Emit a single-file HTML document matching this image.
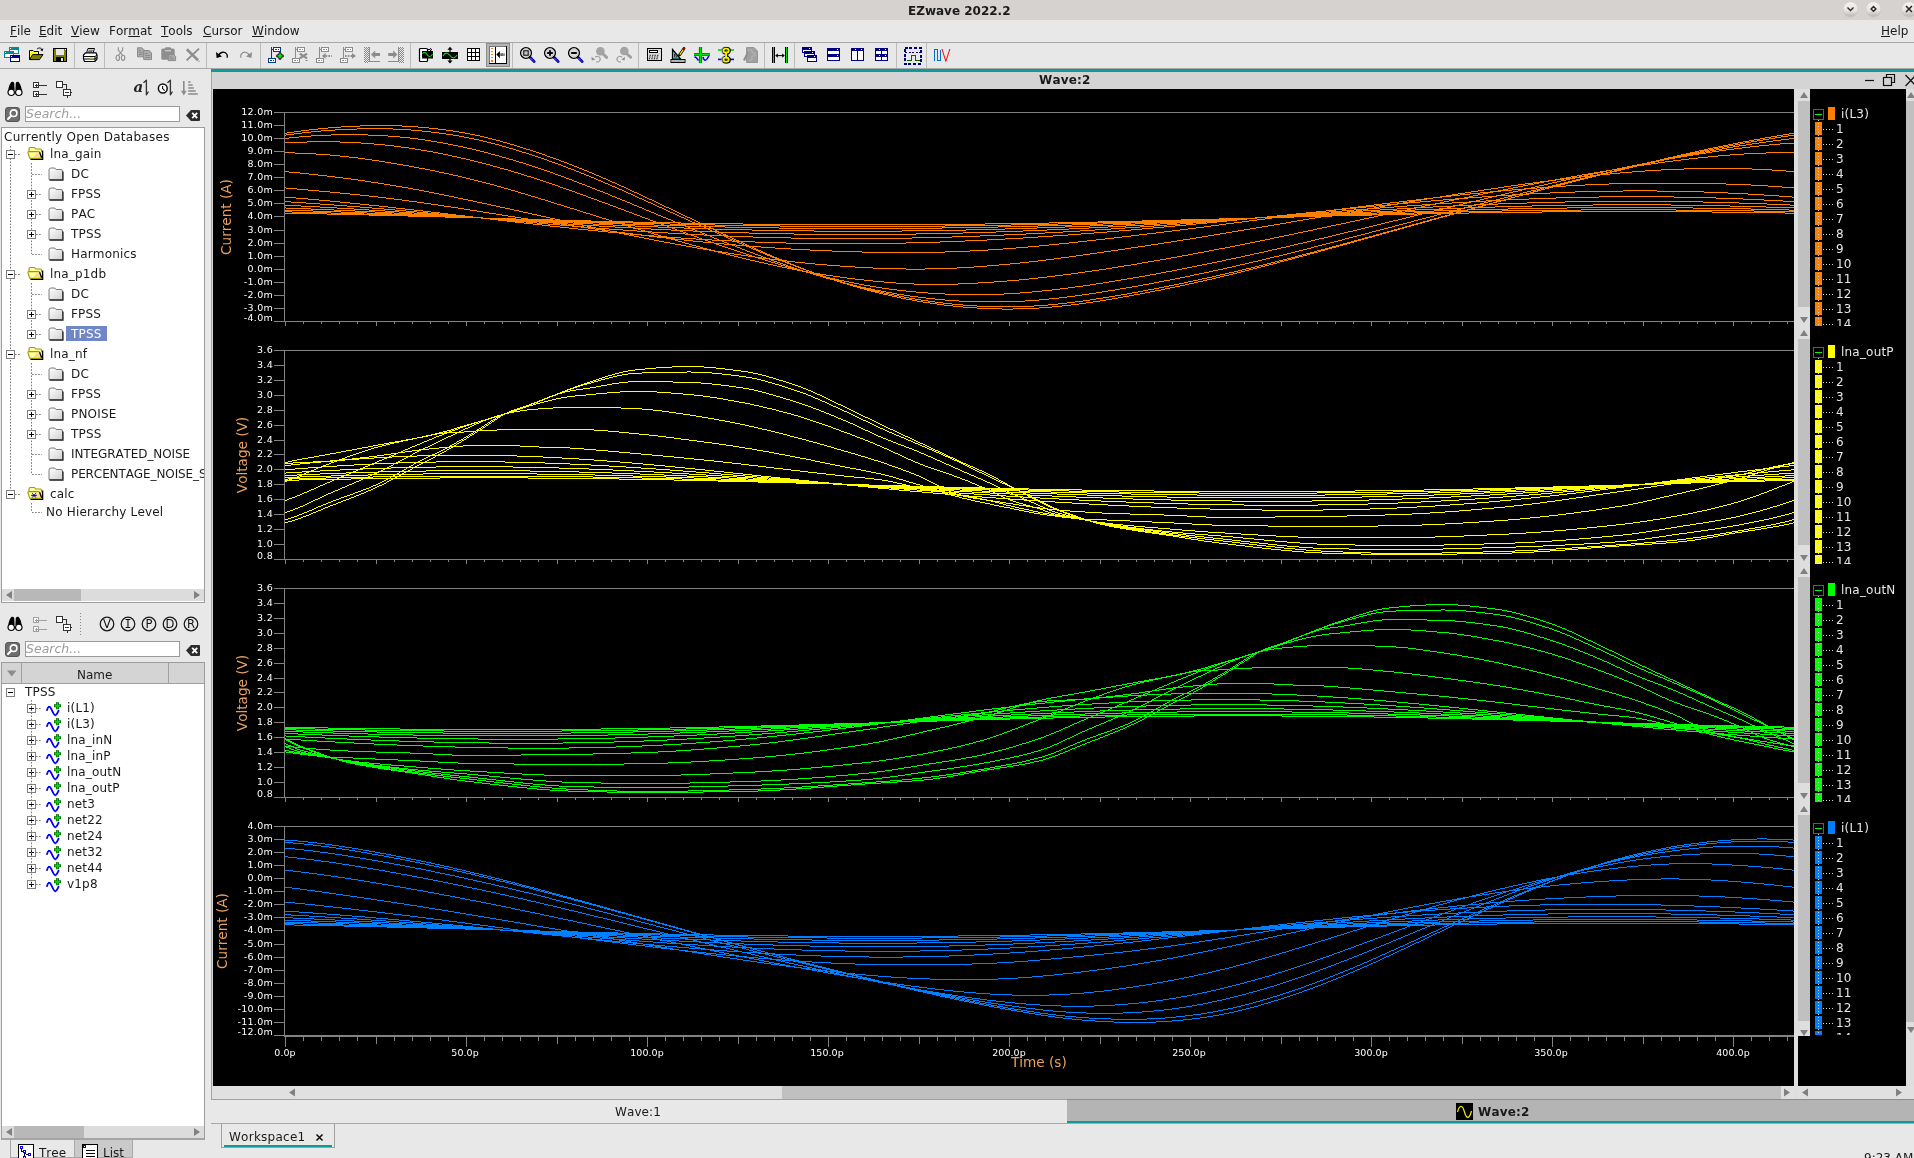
<!DOCTYPE html><html><head><meta charset="utf-8"><title>EZwave 2022.2</title><style>
*{box-sizing:border-box;margin:0;padding:0}
html,body{width:1914px;height:1158px;overflow:hidden;background:#e8e8e8}
body{position:relative;font-family:"DejaVu Sans","Liberation Sans",sans-serif;font-size:12px;color:#1a1a1a;letter-spacing:.18px;font-kerning:none}
.a{position:absolute}
.t{position:absolute;white-space:nowrap;line-height:16px;height:16px}
u{text-decoration:underline;text-underline-offset:1px;text-decoration-thickness:1px}
.sep{position:absolute;width:1px;background:#bcbcbc;top:43px;height:25px}
.ic{position:absolute;width:16px;height:16px;overflow:visible}
svg{position:absolute;overflow:visible}
.tl{position:absolute;white-space:nowrap;font-size:9.5px;line-height:10px;height:10px;color:#fff;letter-spacing:.28px}
.lg{position:absolute;white-space:nowrap;color:#e6e6e6;line-height:15px;height:15px;letter-spacing:.2px}
</style></head><body><div id="root" style="position:absolute;left:0;top:0;width:1914px;height:1158px;overflow:hidden;will-change:transform">
<div class="a" style="left:0;top:0;width:1914px;height:20px;background:#d6d2d0"></div>
<div class="t" style="left:908px;top:3px;font-weight:bold;letter-spacing:0">EZwave 2022.2</div>
<svg class="a" style="left:1830px;top:0" width="84" height="20"><defs><linearGradient id="wb" x1="0" y1="0" x2="0" y2="1"><stop offset="0" stop-color="#f6f4f3"/><stop offset=".6" stop-color="#e6e3e1"/><stop offset="1" stop-color="#bdb8b5"/></linearGradient></defs><circle cx="20.5" cy="10.2" r="7.3" fill="#b9b4b1" opacity=".55"/><circle cx="20.5" cy="9.3" r="7" fill="url(#wb)"/><path d="M17.5 7.6 L20.5 10.6 L23.5 7.6" fill="none" stroke="#2a2a2a" stroke-width="1.4"/><circle cx="43.5" cy="10.2" r="7.3" fill="#b9b4b1" opacity=".55"/><circle cx="43.5" cy="9.3" r="7" fill="url(#wb)"/><path d="M43.5 6.5 L45.9 8.9 L43.5 11.3 L41.1 8.9 Z" fill="none" stroke="#2a2a2a" stroke-width="1.4"/><circle cx="79" cy="10.2" r="7.3" fill="#b9b4b1" opacity=".55"/><circle cx="79" cy="9.3" r="7" fill="url(#wb)"/><path d="M76 6 L82 12 M82 6 L76 12" fill="none" stroke="#2a2a2a" stroke-width="1.6"/></svg>
<div class="t" style="left:10px;top:23px;letter-spacing:0"><u>F</u>ile</div>
<div class="t" style="left:39px;top:23px;letter-spacing:0"><u>E</u>dit</div>
<div class="t" style="left:71px;top:23px;letter-spacing:0"><u>V</u>iew</div>
<div class="t" style="left:109px;top:23px;letter-spacing:0">For<u>m</u>at</div>
<div class="t" style="left:161px;top:23px;letter-spacing:0"><u>T</u>ools</div>
<div class="t" style="left:203px;top:23px;letter-spacing:0"><u>C</u>ursor</div>
<div class="t" style="left:252px;top:23px;letter-spacing:0"><u>W</u>indow</div>
<div class="t" style="left:1881px;top:23px;letter-spacing:0"><u>H</u>elp</div>
<div class="a" style="left:0;top:42px;width:1914px;height:1px;background:#a8a8a8"></div>
<div class="a" style="left:0;top:68px;width:1914px;height:1px;background:#a8a8a8"></div>
<div class="sep" style="left:74px"></div><div class="sep" style="left:104px"></div><div class="sep" style="left:206px"></div><div class="sep" style="left:260px"></div><div class="sep" style="left:410px"></div><div class="sep" style="left:512px"></div><div class="sep" style="left:638px"></div><div class="sep" style="left:764px"></div><div class="sep" style="left:794px"></div><div class="sep" style="left:896px"></div><div class="sep" style="left:926px"></div><div class="a" style="left:486px;top:43px;width:24px;height:24px;background:#b4b4b4;border:1px solid #8c8c8c"></div><svg class="a" style="left:4px;top:47px" width="16" height="16" viewBox="0 0 16 16" ><g shape-rendering="crispEdges"><rect x="5" y="0" width="10" height="7" fill="#008c8c"/><rect x="6" y="3" width="8" height="3" fill="#fff"/><rect x="6" y="1" width="1" height="1" fill="#fff"/><rect x="0" y="4" width="10" height="7" fill="#008c8c"/><rect x="1" y="7" width="8" height="3" fill="#fff"/><rect x="1" y="5" width="1" height="1" fill="#fff"/><rect x="6" y="8" width="10" height="7" fill="#000090"/><rect x="7" y="11" width="8" height="3" fill="#fff"/><rect x="7" y="9" width="1" height="1" fill="#fff"/></g></svg><svg class="a" style="left:28px;top:47px" width="16" height="16" viewBox="0 0 16 16" ><defs><pattern id="fh" width="2" height="2" patternUnits="userSpaceOnUse"><rect width="2" height="2" fill="#ffff00"/><rect width="1" height="1" fill="#fff"/><rect x="1" y="1" width="1" height="1" fill="#fff"/></pattern></defs><path d="M1.5 12.5 V3.5 H5 L6 4.5 H10.5 V7" fill="url(#fh)" stroke="#000" stroke-width="1"/><path d="M1.5 12.6 L4.6 7.6 H15 L11.5 12.6 Z" fill="#808000" stroke="#000" stroke-width="1"/><path d="M9 2.2 C10.5 .4 13 .6 14.2 2.8" fill="none" stroke="#000" stroke-width="1"/><path d="M15.3 1.2 L14.6 4.2 L12.2 2.9 Z" fill="#000"/></svg><svg class="a" style="left:52px;top:47px" width="16" height="16" viewBox="0 0 16 16" ><g shape-rendering="crispEdges"><rect x="1.5" y="1.5" width="13" height="13" fill="#808000" stroke="#000"/><rect x="4" y="2" width="8" height="6" fill="#e8e8e8"/><rect x="4" y="10" width="8" height="5" fill="#000"/><rect x="9" y="11" width="2" height="3" fill="#e8e8e8"/><rect x="13" y="2" width="1" height="1" fill="#e8e8e8"/></g></svg><svg class="a" style="left:82px;top:47px" width="16" height="16" viewBox="0 0 16 16" ><path d="M4.5 6 L6 1.5 H12.5 L11 6" fill="#fff" stroke="#000"/><path d="M6.5 3.2 H11 M6 4.7 H10.5" stroke="#000" stroke-width=".7"/><path d="M1.5 8 L3.5 5.8 H14 L15 8 V12 L13 14.5 H2.5 L1.5 12 Z" fill="#fff" stroke="#000" stroke-width="1.2"/><path d="M1.5 9.5 H13 L15 8 M2 12 H13 L15 10.5 M13 9.5 V14" fill="none" stroke="#000" stroke-width="1"/><rect x="8" y="10.3" width="3" height="1.2" fill="#e8e800"/></svg><svg class="a" style="left:112px;top:47px" width="16" height="16" viewBox="0 0 16 16" ><g fill="none" stroke="#909090" stroke-width="1.1"><path d="M6.3 .3 V3 L10.6 8.3 M10.7 .3 V3 L6.4 8.3"/><ellipse cx="5.8" cy="10.9" rx="1.7" ry="2.6"/><ellipse cx="11.1" cy="10.8" rx="1.7" ry="2.6"/></g></svg><svg class="a" style="left:136px;top:47px" width="16" height="16" viewBox="0 0 16 16" ><g fill="#ababab" stroke="#8a8a8a" stroke-width="1"><path d="M1.5 .8 H6 L8 2.8 V9.8 H1.5 Z"/><path d="M7.7 3.5 H13.2 L15.5 5.8 V12.6 H7.7 Z"/></g><path d="M3 3.5 H5 M3 5.5 H6.5 M3 7.5 H6.5 M9.3 6.5 H11.5 M9.3 8.5 H14 M9.3 10.5 H14" stroke="#8a8a8a" stroke-width="1"/></svg><svg class="a" style="left:160px;top:47px" width="16" height="16" viewBox="0 0 16 16" ><rect x="1.3" y="1.6" width="13.4" height="11.2" rx="1.5" fill="#8e8e8e"/><rect x="5" y=".2" width="6" height="3.4" rx="1.2" fill="#8e8e8e"/><rect x="5" y="3.3" width="6" height="1" fill="#e0e0e0"/><path d="M8.3 7.5 H13.6 L15.6 9.3 V13.6 H8.3 Z" fill="#ababab" stroke="#8a8a8a" stroke-width="1"/><path d="M9.8 9.8 H12 M9.8 11.7 H14" stroke="#8a8a8a" stroke-width="1"/></svg><svg class="a" style="left:184px;top:47px" width="16" height="16" viewBox="0 0 16 16" ><path d="M2.8 2.2 L14 13.2" stroke="#8e8e8e" stroke-width="2.6" fill="none"/><path d="M15 1.6 L2.6 13.4" stroke="#8e8e8e" stroke-width="2" fill="none"/><rect x="14.3" y="13.8" width="1.4" height="1" fill="#8e8e8e"/></svg><svg class="a" style="left:214px;top:47px" width="16" height="16" viewBox="0 0 16 16" ><path d="M4.5 9 C6 4.5 11 4 13 7.5 C13.6 9 13.3 10 13 10.8" fill="none" stroke="#000" stroke-width="1.3"/><path d="M2 5 L2.6 11 L8 9.6 Z" fill="#000"/></svg><svg class="a" style="left:238px;top:47px" width="16" height="16" viewBox="0 0 16 16" ><path d="M11.5 9 C10 4.5 5 4 3 7.5 C2.4 9 2.7 10 3 10.8" fill="none" stroke="#8c8c8c" stroke-width="1.2"/><path d="M14 5 L13.4 11 L8 9.6 Z" fill="#8c8c8c"/></svg><svg class="a" style="left:268px;top:47px" width="16" height="16" viewBox="0 0 16 16" ><g shape-rendering="crispEdges" fill="none" stroke="#003c96"><path d="M3.5 0 V11 M3.5 2.5 H6"/><rect x="5.5" y="0.5" width="7" height="4" fill="#fff"/><rect x="0.5" y="11.5" width="7" height="4" fill="#fff"/><path d="M7 2.5 H11 M2 13.5 H6" stroke-width="1.4" stroke-dasharray="1.5 1"/></g><path d="M12 6.6 V11.2 M9.7 8.9 H14.3" stroke="#111" stroke-width="3.2" stroke-linecap="round"/><path d="M12 6.5 V11.3 M9.6 8.9 H14.4" stroke="#00e000" stroke-width="1.9" stroke-linecap="butt"/></svg><svg class="a" style="left:292px;top:47px" width="16" height="16" viewBox="0 0 16 16" ><g shape-rendering="crispEdges" fill="none" stroke="#8c8c8c"><path d="M3.5 0 V11 M3.5 2.5 H6"/><rect x="5.5" y="0.5" width="7" height="4" fill="#fff"/><rect x="0.5" y="11.5" width="7" height="4" fill="#fff"/><path d="M7 2.5 H11 M2 13.5 H6" stroke-width="1.4" stroke-dasharray="1.5 1"/></g><path d="M7.8 6.6 L15 11.4 M15 6.6 L7.8 11.4" stroke="#8c8c8c" stroke-width="2.3"/><rect x="13.6" y="13" width="2" height="1" fill="#8c8c8c"/></svg><svg class="a" style="left:316px;top:47px" width="16" height="16" viewBox="0 0 16 16" ><g shape-rendering="crispEdges" fill="none" stroke="#8c8c8c"><path d="M3.5 0 V11 M3.5 2.5 H6"/><rect x="5.5" y="0.5" width="7" height="4" fill="#fff"/><rect x="0.5" y="11.5" width="7" height="4" fill="#fff"/><path d="M7 2.5 H11 M2 13.5 H6" stroke-width="1.4" stroke-dasharray="1.5 1"/></g><path d="M5.8 8.9 L9.6 6 V11.8 Z" fill="#8c8c8c"/><path d="M9.6 8.9 H16" stroke="#8c8c8c" stroke-width="2" stroke-dasharray="1.6 1.2"/></svg><svg class="a" style="left:340px;top:47px" width="16" height="16" viewBox="0 0 16 16" ><g shape-rendering="crispEdges" fill="none" stroke="#8c8c8c"><path d="M3.5 0 V11 M3.5 2.5 H6"/><rect x="5.5" y="0.5" width="7" height="4" fill="#fff"/><rect x="0.5" y="11.5" width="7" height="4" fill="#fff"/><path d="M7 2.5 H11 M2 13.5 H6" stroke-width="1.4" stroke-dasharray="1.5 1"/></g><path d="M16 8.9 L12 6 V11.8 Z" fill="#8c8c8c"/><path d="M5 8.9 H12" stroke="#8c8c8c" stroke-width="2" stroke-dasharray="1.6 1.2"/></svg><svg class="a" style="left:364px;top:47px" width="16" height="16" viewBox="0 0 16 16" ><defs><pattern id="hp" width="2" height="2" patternUnits="userSpaceOnUse"><rect width="1" height="1" fill="#8c8c8c"/><rect x="1" y="1" width="1" height="1" fill="#8c8c8c"/></pattern></defs><g shape-rendering="crispEdges"><rect x="0" y="0" width="5" height="16" fill="url(#hp)"/><path d="M5.5 0 V14.5 H16" fill="none" stroke="#8c8c8c"/></g><path d="M7 7.6 L11.2 3.6 V6.1 H16 V9.1 H11.2 V11.6 Z" fill="#8c8c8c"/></svg><svg class="a" style="left:388px;top:47px" width="16" height="16" viewBox="0 0 16 16" ><g shape-rendering="crispEdges"><rect x="11" y="0" width="5" height="16" fill="url(#hp)"/><path d="M10.5 0 V14.5 H0" fill="none" stroke="#8c8c8c"/></g><path d="M9.4 7.6 L5.2 3.6 V6.1 H0.2 V9.1 H5.2 V11.6 Z" fill="#8c8c8c"/></svg><svg class="a" style="left:418px;top:47px" width="16" height="16" viewBox="0 0 16 16" ><rect x="1.5" y="1.5" width="8" height="13" rx="1" fill="#fff" stroke="#000" stroke-width="1.2"/><rect x="4" y="4" width="11" height="7.5" fill="#000"/><path d="M4.5 7 C6 4.5 7.5 5 9 7.5 S12.5 10.5 14.5 7" fill="none" stroke="#00e000" stroke-width="1.1"/><path d="M9 2.5 H12 M12 1.3 L13.8 2.6 L12 4" fill="none" stroke="#000" stroke-width="1"/></svg><svg class="a" style="left:442px;top:47px" width="16" height="16" viewBox="0 0 16 16" ><rect x="0" y="5" width="16" height="7" fill="#000"/><path d="M1 9 C3 5 5.5 5.5 8 8.5 S12.5 12 15 8" fill="none" stroke="#00e000" stroke-width="1.1"/><path d="M8 -.2 L10.6 2.8 H5.4 Z M8 16.4 L10.6 13.4 H5.4 Z" fill="#000"/><path d="M8 2 V5 M8 12 V14" stroke="#000" stroke-width="1.2"/></svg><svg class="a" style="left:466px;top:47px" width="16" height="16" viewBox="0 0 16 16" ><g shape-rendering="crispEdges" transform="translate(-1,-1)"><rect x="2" y="2" width="13" height="13" fill="#000"/><g fill="#fff"><rect x="3" y="3" width="3" height="3"/><rect x="7" y="3" width="3" height="3"/><rect x="11" y="3" width="3" height="3"/><rect x="3" y="7" width="3" height="3"/><rect x="7" y="7" width="3" height="3"/><rect x="11" y="7" width="3" height="3"/><rect x="3" y="11" width="3" height="3"/><rect x="7" y="11" width="3" height="3"/><rect x="11" y="11" width="3" height="3"/></g></g></svg><svg class="a" style="left:490px;top:47px" width="16" height="16" viewBox="0 0 16 16" ><g shape-rendering="crispEdges"><rect x="-1" y="-1" width="18" height="18" fill="#fff"/><path d="M-.5 17 V-.5 H17" stroke="#787878" fill="none"/><path d="M16.5 -1 V16.5 H-1" stroke="#000" fill="none"/><path d="M5.5 0 V16" stroke="#000" fill="none"/><path d="M2 .5 V16" stroke="#ff7a20" stroke-width="2" stroke-dasharray="1.6 1.5"/></g><path d="M6.3 7.6 L9.9 4 V11.2 Z" fill="#000"/><path d="M10.6 7.6 H14.6" stroke="#000" stroke-width="2.6" stroke-dasharray="1 .8"/></svg><svg class="a" style="left:519px;top:47px" width="16" height="16" viewBox="0 0 16 16" ><path d="M11 10.2 L15.2 14.6" stroke="#0000c0" stroke-width="2.8" stroke-linecap="round"/><path d="M11.3 10.9 L14.6 14.3" stroke="#aab4ff" stroke-width=".9" stroke-dasharray="1 1"/><circle cx="7" cy="6" r="5.4" fill="#dcdcdc" stroke="#000" stroke-width="1.4"/><circle cx="7" cy="6" r="4.2" fill="none" stroke="#bcbcbc" stroke-width=".8"/><g transform="translate(1,0)"><rect x="3.8" y="3.8" width="4.4" height="4.4" fill="#c8c8c8" stroke="#000" stroke-width="1"/></g></svg><svg class="a" style="left:543px;top:47px" width="16" height="16" viewBox="0 0 16 16" ><path d="M11 10.2 L15.2 14.6" stroke="#0000c0" stroke-width="2.8" stroke-linecap="round"/><path d="M11.3 10.9 L14.6 14.3" stroke="#aab4ff" stroke-width=".9" stroke-dasharray="1 1"/><circle cx="7" cy="6" r="5.4" fill="#dcdcdc" stroke="#000" stroke-width="1.4"/><circle cx="7" cy="6" r="4.2" fill="none" stroke="#bcbcbc" stroke-width=".8"/><g transform="translate(1,0)"><path d="M3.2 6 H8.8 M6 3.2 V8.8" stroke="#000" stroke-width="1.9"/></g></svg><svg class="a" style="left:567px;top:47px" width="16" height="16" viewBox="0 0 16 16" ><path d="M11 10.2 L15.2 14.6" stroke="#0000c0" stroke-width="2.8" stroke-linecap="round"/><path d="M11.3 10.9 L14.6 14.3" stroke="#aab4ff" stroke-width=".9" stroke-dasharray="1 1"/><circle cx="7" cy="6" r="5.4" fill="#dcdcdc" stroke="#000" stroke-width="1.4"/><circle cx="7" cy="6" r="4.2" fill="none" stroke="#bcbcbc" stroke-width=".8"/><g transform="translate(1,0)"><path d="M3.2 6 H8.8" stroke="#000" stroke-width="2"/></g></svg><svg class="a" style="left:591px;top:47px" width="16" height="16" viewBox="0 0 16 16" ><circle cx="9.4" cy="4.2" r="4.3" fill="#a4a4a4"/><path d="M12 7 L15.6 10.4" stroke="#a0a0a0" stroke-width="3" stroke-linecap="round"/><path d="M4.2 10.4 A2.8 2.8 0 1 1 5.2 14.7" fill="none" stroke="#9a9a9a" stroke-width="1.1"/><path d="M.4 9.8 L.8 13.6 L4.4 12.6 Z" fill="#909090"/></svg><svg class="a" style="left:615px;top:47px" width="16" height="16" viewBox="0 0 16 16" ><circle cx="9.3" cy="4" r="4.3" fill="#a4a4a4"/><path d="M12 7 L15.6 10.2" stroke="#a0a0a0" stroke-width="3" stroke-linecap="round"/><path d="M7 10.4 A2.8 2.8 0 1 0 6 14.7" fill="none" stroke="#9a9a9a" stroke-width="1.1"/><path d="M10 9.8 L9.6 13.6 L6.4 12.6 Z" fill="#909090"/></svg><svg class="a" style="left:646px;top:47px" width="16" height="16" viewBox="0 0 16 16" ><g shape-rendering="crispEdges"><rect x="1.5" y="1.5" width="14" height="12" fill="#dcdcdc" stroke="#000" stroke-width="1.4"/><rect x="3.5" y="3.5" width="8" height="2" fill="#fff" stroke="#000"/></g><path d="M3.6 8.2 H13.6 M3.2 10 H13.2 M2.8 11.8 H12.8" stroke="#000" stroke-width="1.1" stroke-dasharray="1.2 1.3"/></svg><svg class="a" style="left:670px;top:47px" width="16" height="16" viewBox="0 0 16 16" ><path d="M2.5 12 V2.5 L10.5 12 Z" fill="#20e0e0" stroke="#000" stroke-width="1.2"/><path d="M4.5 10 V7 L7 10 Z" fill="#e8e8e8" stroke="#000" stroke-width=".7"/><rect x="1" y="12.5" width="14" height="3" fill="#fff" stroke="#000" stroke-width="1"/><path d="M3 13 V15 M5 13 V15 M7 13 V15 M9 13 V15 M11 13 V15 M13 13 V15" stroke="#000" stroke-width=".6"/><path d="M9.5 8 L14 1.5" stroke="#000" stroke-width="2.8" stroke-linecap="round"/><path d="M9.8 7.6 L13.2 2.7" stroke="#f0d000" stroke-width="1.4"/><circle cx="14" cy="1.7" r="1" fill="#c00000"/></svg><svg class="a" style="left:694px;top:47px" width="16" height="16" viewBox="0 0 16 16" ><path d="M0.5 10.5 C2 9 3 12 4.5 13.5 M9 10 C10 14 12 15 15 8.5" fill="none" stroke="#0000ff" stroke-width="1.6"/><path d="M6.5 0 V16 M0 7.5 H16" stroke="#005000" stroke-width="3.2"/><path d="M6.5 0 V16 M0 7.5 H16" stroke="#00e000" stroke-width="1.8"/></svg><svg class="a" style="left:718px;top:47px" width="16" height="16" viewBox="0 0 16 16" ><path d="M0 3 H16" stroke="#00d000" stroke-width="1.6"/><path d="M0 12.4 H16" stroke="#0000ff" stroke-width="1.6"/><g fill="none" stroke="#909090" stroke-width="3.6" transform="translate(-.5,0)"><rect x="5.6" y="1.6" width="5" height="4" rx="1.8"/><rect x="5.6" y="10.6" width="5" height="4" rx="1.8"/></g><g fill="none" stroke="#000" stroke-width="3.4" transform="translate(.5,.2)"><rect x="5.6" y="1.6" width="5" height="4" rx="1.8"/><rect x="5.6" y="10.6" width="5" height="4" rx="1.8"/><path d="M8.1 5 V11"/></g><g fill="none" stroke="#f4f400" stroke-width="1.9"><rect x="5.6" y="1.6" width="5" height="4" rx="1.8"/><rect x="5.6" y="10.6" width="5" height="4" rx="1.8"/><path d="M8.1 4.6 V11.4"/></g></svg><svg class="a" style="left:742px;top:47px" width="16" height="16" viewBox="0 0 16 16" ><path d="M4.5 .5 H12 L15.5 4 V15.5 H4.5 Z" fill="#a0a0a0" stroke="#8c8c8c" stroke-width=".8"/><path d="M6 3 H10 V6 H13 V9 H10 V13 H7" fill="none" stroke="#b8b8b8" stroke-width=".9"/><path d="M1 13 L5 5 L6.5 6 L3 14 Z" fill="#909090"/></svg><svg class="a" style="left:772px;top:47px" width="16" height="16" viewBox="0 0 16 16" ><g shape-rendering="crispEdges"><rect x="0" y="0" width="3" height="16" fill="#000"/><rect x="1" y="0" width="1" height="16" fill="#00e000"/><rect x="13" y="0" width="3" height="16" fill="#000"/><rect x="14" y="0" width="1" height="16" fill="#00e000"/></g><path d="M4 8.6 H12" stroke="#000" stroke-width="1"/><path d="M3.2 8.6 L5.8 6.4 V10.8 Z M12.8 8.6 L10.2 6.4 V10.8 Z" fill="#000"/></svg><svg class="a" style="left:801px;top:47px" width="16" height="16" viewBox="0 0 16 16" ><g shape-rendering="crispEdges"><rect x="1.5" y="0.5" width="9" height="5" fill="#fff" stroke="#000080"/><rect x="1" y="0" width="10" height="3" fill="#000080"/><rect x="8" y="1" width="1" height="1" fill="#fff"/><rect x="3.5" y="4.5" width="10" height="5" fill="#fff" stroke="#000080"/><rect x="3" y="4" width="11" height="3" fill="#000080"/><rect x="11" y="5" width="1" height="1" fill="#fff"/><rect x="6.5" y="8.5" width="9" height="6" fill="#fff" stroke="#000080"/><rect x="6" y="8" width="10" height="3" fill="#000080"/><rect x="13" y="9" width="1" height="1" fill="#fff"/></g></svg><svg class="a" style="left:825px;top:47px" width="16" height="16" viewBox="0 0 16 16" ><g shape-rendering="crispEdges"><rect x="2.5" y="1.5" width="12" height="6" fill="#fff" stroke="#000080"/><rect x="2" y="1" width="13" height="3" fill="#000080"/><rect x="12" y="2" width="1" height="1" fill="#fff"/><rect x="2.5" y="7.5" width="12" height="6" fill="#fff" stroke="#000080"/><rect x="2" y="7" width="13" height="3" fill="#000080"/><rect x="12" y="8" width="1" height="1" fill="#fff"/></g></svg><svg class="a" style="left:849px;top:47px" width="16" height="16" viewBox="0 0 16 16" ><g shape-rendering="crispEdges"><rect x="2.5" y="1.5" width="6" height="12" fill="#fff" stroke="#000080"/><rect x="2" y="1" width="7" height="3" fill="#000080"/><rect x="6" y="2" width="1" height="1" fill="#fff"/><rect x="8.5" y="1.5" width="6" height="12" fill="#fff" stroke="#000080"/><rect x="8" y="1" width="7" height="3" fill="#000080"/><rect x="12" y="2" width="1" height="1" fill="#fff"/></g></svg><svg class="a" style="left:873px;top:47px" width="16" height="16" viewBox="0 0 16 16" ><g shape-rendering="crispEdges"><rect x="2.5" y="1.5" width="6" height="6" fill="#fff" stroke="#000080"/><rect x="2" y="1" width="7" height="3" fill="#000080"/><rect x="6" y="2" width="1" height="1" fill="#fff"/><rect x="8.5" y="1.5" width="6" height="6" fill="#fff" stroke="#000080"/><rect x="8" y="1" width="7" height="3" fill="#000080"/><rect x="12" y="2" width="1" height="1" fill="#fff"/><rect x="2.5" y="7.5" width="6" height="6" fill="#fff" stroke="#000080"/><rect x="2" y="7" width="7" height="3" fill="#000080"/><rect x="6" y="8" width="1" height="1" fill="#fff"/><rect x="8.5" y="7.5" width="6" height="6" fill="#fff" stroke="#000080"/><rect x="8" y="7" width="7" height="3" fill="#000080"/><rect x="12" y="8" width="1" height="1" fill="#fff"/></g></svg><svg class="a" style="left:903.5px;top:46.5px" width="18" height="18" viewBox="0 0 18 18" ><g shape-rendering="crispEdges"><rect x=".75" y=".75" width="16" height="16" fill="none" stroke="#000080" stroke-width="1.5" stroke-dasharray="3 1.6"/><path d="M1 5.5 H17" stroke="#000080" stroke-width="1" stroke-dasharray="2 1.5"/><path d="M3 13.5 H7.5 V8.5 H11.5 V13.5 H16" fill="none" stroke="#006400" stroke-width="1.2"/></g></svg><svg class="a" style="left:933px;top:47px" width="16" height="16" viewBox="0 0 16 16" ><path d="M1.5 13.5 V2.5 H4.5 V13.5 H7.5 V2.5" fill="none" stroke="#0070d0" stroke-width="1.1" shape-rendering="crispEdges"/><path d="M9 2 L12.8 14.4 L16.9 2" fill="none" stroke="#ff0000" stroke-width="1"/></svg>
<svg class="a" style="left:6.5px;top:80.5px" width="16" height="16" viewBox="0 0 16 16" ><path d="M4.2 1.2 C5.4 .6 6.6 .8 7.2 2 L7.6 9 L1.2 9.5 C1.6 6 2.6 3 4.2 1.2 Z M11.8 1.2 C10.6 .6 9.4 .8 8.8 2 L8.4 9 L14.8 9.5 C14.4 6 13.4 3 11.8 1.2 Z" fill="#000"/><circle cx="4.2" cy="11.3" r="3.2" fill="#fff" stroke="#000" stroke-width="1.2"/><circle cx="11.8" cy="11.3" r="3.2" fill="#fff" stroke="#000" stroke-width="1.2"/></svg><svg class="a" style="left:31.5px;top:80.5px" width="16" height="16" viewBox="0 0 16 16" ><g shape-rendering="crispEdges" fill="none" stroke="#333"><rect x="1.5" y="1.5" width="5" height="5" fill="#fff"/><rect x="1.5" y="10.5" width="5" height="5" fill="#fff"/><path d="M3 4 H6 M4.5 2.5 V5.5 M3 13 H6 M4.5 11.5 V14.5 M7 4.5 H15 M7 13.5 H15"/></g></svg><svg class="a" style="left:56px;top:80.5px" width="16" height="16" viewBox="0 0 16 16" ><g shape-rendering="crispEdges" fill="none" stroke="#333"><rect x="0.5" y="0.5" width="6" height="6" fill="#fff"/><path d="M6.5 3.5 H10.5 V8.5"/><rect x="7.5" y="8.5" width="7" height="6" fill="#fff"/><path d="M9 11.5 H13 M14.5 11.5 H16 M11.5 14.5 V16.5"/></g></svg><div class="t" style="left:133.5px;top:77px;font-family:'DejaVu Serif','Liberation Serif',serif;font-style:italic;font-weight:bold;font-size:15px;line-height:20px;height:20px;letter-spacing:0;color:#222">a</div><svg class="a" style="left:0;top:0" width="205" height="100"><path d="M146.4 80.3 V94.6 M146.4 80.2 L143.8 82.4 M146.4 94.8 L148.2 92" fill="none" stroke="#333" stroke-width="1.3" stroke-linecap="round"/><circle cx="162.8" cy="88.5" r="4.4" fill="#fff" stroke="#111" stroke-width="1.5"/><path d="M162.6 86 V88.6 L164.6 90.6" fill="none" stroke="#111" stroke-width="1.1"/><path d="M170.4 80.3 V94.6 M170.4 80.2 L167.8 82.4 M170.4 94.8 L172.2 92" fill="none" stroke="#333" stroke-width="1.3" stroke-linecap="round"/><g stroke="#8c8c8c" fill="none"><path d="M183.8 81 V94" stroke-width="1.6"/><path d="M181 90.8 L183.8 95.6 L186.6 90.8 Z" fill="#8c8c8c" stroke="none"/><path d="M188.2 82 H190.6 M188.2 85 H192.7 M188.2 88 H193.8 M188.2 91 H195.7 M188.2 94 H197.8" stroke-width="1.5"/></g></svg><svg class="a" style="left:5px;top:107px" width="15" height="15"><rect x=".5" y=".5" width="14" height="14" rx="2.5" fill="#6e6e6e" stroke="#555" stroke-width="1"/><circle cx="8.6" cy="6.2" r="3.3" fill="none" stroke="#fff" stroke-width="1.6"/><path d="M6.2 8.8 L3 12" stroke="#fff" stroke-width="2" stroke-linecap="round"/></svg><div class="a" style="left:25px;top:106px;width:155px;height:16px;background:#fff;border:1px solid #9a9a9a"></div><div class="t" style="left:26px;top:106px;font-style:italic;font-size:12.5px;color:#9c9c9c;letter-spacing:0">Search...</div><svg class="a" style="left:186px;top:110px" width="14" height="11"><path d="M0 5.5 L5 0 H13 Q14 0 14 1 V10 Q14 11 13 11 H5 Z" fill="#2c2c2c"/><path d="M6.2 2.8 L11.2 8.2 M11.2 2.8 L6.2 8.2" stroke="#fff" stroke-width="1.8"/></svg><svg class="a" style="left:5px;top:642px" width="15" height="15"><rect x=".5" y=".5" width="14" height="14" rx="2.5" fill="#6e6e6e" stroke="#555" stroke-width="1"/><circle cx="8.6" cy="6.2" r="3.3" fill="none" stroke="#fff" stroke-width="1.6"/><path d="M6.2 8.8 L3 12" stroke="#fff" stroke-width="2" stroke-linecap="round"/></svg><div class="a" style="left:25px;top:641px;width:155px;height:16px;background:#fff;border:1px solid #9a9a9a"></div><div class="t" style="left:26px;top:641px;font-style:italic;font-size:12.5px;color:#9c9c9c;letter-spacing:0">Search...</div><svg class="a" style="left:186px;top:645px" width="14" height="11"><path d="M0 5.5 L5 0 H13 Q14 0 14 1 V10 Q14 11 13 11 H5 Z" fill="#2c2c2c"/><path d="M6.2 2.8 L11.2 8.2 M11.2 2.8 L6.2 8.2" stroke="#fff" stroke-width="1.8"/></svg><div class="a" style="left:1px;top:127px;width:204px;height:476px;background:#fff;border:1px solid #9c9c9c"></div><div class="t" style="left:4px;top:129px;letter-spacing:.27px">Currently Open Databases</div><svg class="a" style="left:0;top:0" width="205" height="1158"><g stroke="#787878" stroke-dasharray="1.6 1.5" fill="none"><path d="M10.5 146 V494"/><path d="M31.5 163 V254"/><path d="M31.5 283 V334"/><path d="M31.5 363 V474"/><path d="M31.5 503 V512"/><path d="M32 512.5 H42"/><path d="M15 154.5 H21"/><path d="M32 174.5 H42"/><path d="M36 194.5 H42"/><path d="M36 214.5 H42"/><path d="M36 234.5 H42"/><path d="M32 254.5 H42"/><path d="M15 274.5 H21"/><path d="M32 294.5 H42"/><path d="M36 314.5 H42"/><path d="M36 334.5 H42"/><path d="M15 354.5 H21"/><path d="M32 374.5 H42"/><path d="M36 394.5 H42"/><path d="M36 414.5 H42"/><path d="M36 434.5 H42"/><path d="M32 454.5 H42"/><path d="M32 474.5 H42"/><path d="M15 494.5 H21"/></g></svg><div class="a" style="left:2px;top:128px;width:202px;height:474px;overflow:hidden"><div class="a" style="left:-2px;top:-128px;width:205px;height:700px"><svg class="a" style="left:6px;top:150px" width="9" height="9" viewBox="0 0 9 9" shape-rendering="crispEdges"><rect x=".5" y=".5" width="8" height="8" fill="#fff" stroke="#808080"/><rect x="2" y="4" width="5" height="1" fill="#000"/></svg><svg class="a" style="left:27px;top:146px" width="17" height="15" viewBox="0 0 17 15"><path d="M15.6 4.5 V13.4 H3.5" fill="none" stroke="#000" stroke-width="1.4"/><path d="M2 5.5 V3 Q2 1.5 3.5 1.5 H7 Q8 1.5 8.6 3 H13.5 Q14.6 3 14.6 4.2 V6" fill="#ffffa0" stroke="#9a9a00" stroke-width="1.1"/><path d="M1 6.8 Q.8 5.6 2 5.6 H11.4 Q12.4 5.6 12.8 6.6 L14.6 11.6 V12.4 H3.6 Q2.8 12.4 2.5 11.5 Z" fill="#ffff9c" stroke="#9a9a00" stroke-width="1.1"/><path d="M6 12 L9.5 7.5 H12.2 L13.8 12 Z" fill="#ffc890" opacity=".8"/><path d="M12.6 6.2 L14.6 11.8" stroke="#000" stroke-width="1.2"/></svg><div class="t" style="left:50px;top:146px">lna_gain</div><svg class="a" style="left:48px;top:167px" width="16" height="14" viewBox="0 0 16 14"><defs><linearGradient id="fg" x1="0" y1="0" x2="1" y2="1"><stop offset="0" stop-color="#fff"/><stop offset="1" stop-color="#d0d0d0"/></linearGradient></defs><path d="M1 3 Q1 1 3 1 H6 Q7.5 1 8 2.5 H13 Q14.5 2.5 14.5 4 V12.5 H1 Z" fill="url(#fg)" stroke="#7c7c7c" stroke-width="1"/><path d="M1.5 13.2 H15 V4.5" fill="none" stroke="#1a1a1a" stroke-width="1.2"/></svg><div class="t" style="left:71px;top:166px">DC</div><svg class="a" style="left:27px;top:190px" width="9" height="9" viewBox="0 0 9 9" shape-rendering="crispEdges"><rect x=".5" y=".5" width="8" height="8" fill="#fff" stroke="#808080"/><rect x="2" y="4" width="5" height="1" fill="#000"/><rect x="4" y="2" width="1" height="5" fill="#000"/></svg><svg class="a" style="left:48px;top:187px" width="16" height="14" viewBox="0 0 16 14"><defs><linearGradient id="fg" x1="0" y1="0" x2="1" y2="1"><stop offset="0" stop-color="#fff"/><stop offset="1" stop-color="#d0d0d0"/></linearGradient></defs><path d="M1 3 Q1 1 3 1 H6 Q7.5 1 8 2.5 H13 Q14.5 2.5 14.5 4 V12.5 H1 Z" fill="url(#fg)" stroke="#7c7c7c" stroke-width="1"/><path d="M1.5 13.2 H15 V4.5" fill="none" stroke="#1a1a1a" stroke-width="1.2"/></svg><div class="t" style="left:71px;top:186px">FPSS</div><svg class="a" style="left:27px;top:210px" width="9" height="9" viewBox="0 0 9 9" shape-rendering="crispEdges"><rect x=".5" y=".5" width="8" height="8" fill="#fff" stroke="#808080"/><rect x="2" y="4" width="5" height="1" fill="#000"/><rect x="4" y="2" width="1" height="5" fill="#000"/></svg><svg class="a" style="left:48px;top:207px" width="16" height="14" viewBox="0 0 16 14"><defs><linearGradient id="fg" x1="0" y1="0" x2="1" y2="1"><stop offset="0" stop-color="#fff"/><stop offset="1" stop-color="#d0d0d0"/></linearGradient></defs><path d="M1 3 Q1 1 3 1 H6 Q7.5 1 8 2.5 H13 Q14.5 2.5 14.5 4 V12.5 H1 Z" fill="url(#fg)" stroke="#7c7c7c" stroke-width="1"/><path d="M1.5 13.2 H15 V4.5" fill="none" stroke="#1a1a1a" stroke-width="1.2"/></svg><div class="t" style="left:71px;top:206px">PAC</div><svg class="a" style="left:27px;top:230px" width="9" height="9" viewBox="0 0 9 9" shape-rendering="crispEdges"><rect x=".5" y=".5" width="8" height="8" fill="#fff" stroke="#808080"/><rect x="2" y="4" width="5" height="1" fill="#000"/><rect x="4" y="2" width="1" height="5" fill="#000"/></svg><svg class="a" style="left:48px;top:227px" width="16" height="14" viewBox="0 0 16 14"><defs><linearGradient id="fg" x1="0" y1="0" x2="1" y2="1"><stop offset="0" stop-color="#fff"/><stop offset="1" stop-color="#d0d0d0"/></linearGradient></defs><path d="M1 3 Q1 1 3 1 H6 Q7.5 1 8 2.5 H13 Q14.5 2.5 14.5 4 V12.5 H1 Z" fill="url(#fg)" stroke="#7c7c7c" stroke-width="1"/><path d="M1.5 13.2 H15 V4.5" fill="none" stroke="#1a1a1a" stroke-width="1.2"/></svg><div class="t" style="left:71px;top:226px">TPSS</div><svg class="a" style="left:48px;top:247px" width="16" height="14" viewBox="0 0 16 14"><defs><linearGradient id="fg" x1="0" y1="0" x2="1" y2="1"><stop offset="0" stop-color="#fff"/><stop offset="1" stop-color="#d0d0d0"/></linearGradient></defs><path d="M1 3 Q1 1 3 1 H6 Q7.5 1 8 2.5 H13 Q14.5 2.5 14.5 4 V12.5 H1 Z" fill="url(#fg)" stroke="#7c7c7c" stroke-width="1"/><path d="M1.5 13.2 H15 V4.5" fill="none" stroke="#1a1a1a" stroke-width="1.2"/></svg><div class="t" style="left:71px;top:246px">Harmonics</div><svg class="a" style="left:6px;top:270px" width="9" height="9" viewBox="0 0 9 9" shape-rendering="crispEdges"><rect x=".5" y=".5" width="8" height="8" fill="#fff" stroke="#808080"/><rect x="2" y="4" width="5" height="1" fill="#000"/></svg><svg class="a" style="left:27px;top:266px" width="17" height="15" viewBox="0 0 17 15"><path d="M15.6 4.5 V13.4 H3.5" fill="none" stroke="#000" stroke-width="1.4"/><path d="M2 5.5 V3 Q2 1.5 3.5 1.5 H7 Q8 1.5 8.6 3 H13.5 Q14.6 3 14.6 4.2 V6" fill="#ffffa0" stroke="#9a9a00" stroke-width="1.1"/><path d="M1 6.8 Q.8 5.6 2 5.6 H11.4 Q12.4 5.6 12.8 6.6 L14.6 11.6 V12.4 H3.6 Q2.8 12.4 2.5 11.5 Z" fill="#ffff9c" stroke="#9a9a00" stroke-width="1.1"/><path d="M6 12 L9.5 7.5 H12.2 L13.8 12 Z" fill="#ffc890" opacity=".8"/><path d="M12.6 6.2 L14.6 11.8" stroke="#000" stroke-width="1.2"/></svg><div class="t" style="left:50px;top:266px">lna_p1db</div><svg class="a" style="left:48px;top:287px" width="16" height="14" viewBox="0 0 16 14"><defs><linearGradient id="fg" x1="0" y1="0" x2="1" y2="1"><stop offset="0" stop-color="#fff"/><stop offset="1" stop-color="#d0d0d0"/></linearGradient></defs><path d="M1 3 Q1 1 3 1 H6 Q7.5 1 8 2.5 H13 Q14.5 2.5 14.5 4 V12.5 H1 Z" fill="url(#fg)" stroke="#7c7c7c" stroke-width="1"/><path d="M1.5 13.2 H15 V4.5" fill="none" stroke="#1a1a1a" stroke-width="1.2"/></svg><div class="t" style="left:71px;top:286px">DC</div><svg class="a" style="left:27px;top:310px" width="9" height="9" viewBox="0 0 9 9" shape-rendering="crispEdges"><rect x=".5" y=".5" width="8" height="8" fill="#fff" stroke="#808080"/><rect x="2" y="4" width="5" height="1" fill="#000"/><rect x="4" y="2" width="1" height="5" fill="#000"/></svg><svg class="a" style="left:48px;top:307px" width="16" height="14" viewBox="0 0 16 14"><defs><linearGradient id="fg" x1="0" y1="0" x2="1" y2="1"><stop offset="0" stop-color="#fff"/><stop offset="1" stop-color="#d0d0d0"/></linearGradient></defs><path d="M1 3 Q1 1 3 1 H6 Q7.5 1 8 2.5 H13 Q14.5 2.5 14.5 4 V12.5 H1 Z" fill="url(#fg)" stroke="#7c7c7c" stroke-width="1"/><path d="M1.5 13.2 H15 V4.5" fill="none" stroke="#1a1a1a" stroke-width="1.2"/></svg><div class="t" style="left:71px;top:306px">FPSS</div><svg class="a" style="left:27px;top:330px" width="9" height="9" viewBox="0 0 9 9" shape-rendering="crispEdges"><rect x=".5" y=".5" width="8" height="8" fill="#fff" stroke="#808080"/><rect x="2" y="4" width="5" height="1" fill="#000"/><rect x="4" y="2" width="1" height="5" fill="#000"/></svg><svg class="a" style="left:48px;top:327px" width="16" height="14" viewBox="0 0 16 14"><defs><linearGradient id="fg" x1="0" y1="0" x2="1" y2="1"><stop offset="0" stop-color="#fff"/><stop offset="1" stop-color="#d0d0d0"/></linearGradient></defs><path d="M1 3 Q1 1 3 1 H6 Q7.5 1 8 2.5 H13 Q14.5 2.5 14.5 4 V12.5 H1 Z" fill="url(#fg)" stroke="#7c7c7c" stroke-width="1"/><path d="M1.5 13.2 H15 V4.5" fill="none" stroke="#1a1a1a" stroke-width="1.2"/></svg><div class="a" style="left:66px;top:326px;width:41px;height:15px;background:#6f86c9"></div><div class="t" style="left:71px;top:326px;color:#fff">TPSS</div><svg class="a" style="left:6px;top:350px" width="9" height="9" viewBox="0 0 9 9" shape-rendering="crispEdges"><rect x=".5" y=".5" width="8" height="8" fill="#fff" stroke="#808080"/><rect x="2" y="4" width="5" height="1" fill="#000"/></svg><svg class="a" style="left:27px;top:346px" width="17" height="15" viewBox="0 0 17 15"><path d="M15.6 4.5 V13.4 H3.5" fill="none" stroke="#000" stroke-width="1.4"/><path d="M2 5.5 V3 Q2 1.5 3.5 1.5 H7 Q8 1.5 8.6 3 H13.5 Q14.6 3 14.6 4.2 V6" fill="#ffffa0" stroke="#9a9a00" stroke-width="1.1"/><path d="M1 6.8 Q.8 5.6 2 5.6 H11.4 Q12.4 5.6 12.8 6.6 L14.6 11.6 V12.4 H3.6 Q2.8 12.4 2.5 11.5 Z" fill="#ffff9c" stroke="#9a9a00" stroke-width="1.1"/><path d="M6 12 L9.5 7.5 H12.2 L13.8 12 Z" fill="#ffc890" opacity=".8"/><path d="M12.6 6.2 L14.6 11.8" stroke="#000" stroke-width="1.2"/></svg><div class="t" style="left:50px;top:346px">lna_nf</div><svg class="a" style="left:48px;top:367px" width="16" height="14" viewBox="0 0 16 14"><defs><linearGradient id="fg" x1="0" y1="0" x2="1" y2="1"><stop offset="0" stop-color="#fff"/><stop offset="1" stop-color="#d0d0d0"/></linearGradient></defs><path d="M1 3 Q1 1 3 1 H6 Q7.5 1 8 2.5 H13 Q14.5 2.5 14.5 4 V12.5 H1 Z" fill="url(#fg)" stroke="#7c7c7c" stroke-width="1"/><path d="M1.5 13.2 H15 V4.5" fill="none" stroke="#1a1a1a" stroke-width="1.2"/></svg><div class="t" style="left:71px;top:366px">DC</div><svg class="a" style="left:27px;top:390px" width="9" height="9" viewBox="0 0 9 9" shape-rendering="crispEdges"><rect x=".5" y=".5" width="8" height="8" fill="#fff" stroke="#808080"/><rect x="2" y="4" width="5" height="1" fill="#000"/><rect x="4" y="2" width="1" height="5" fill="#000"/></svg><svg class="a" style="left:48px;top:387px" width="16" height="14" viewBox="0 0 16 14"><defs><linearGradient id="fg" x1="0" y1="0" x2="1" y2="1"><stop offset="0" stop-color="#fff"/><stop offset="1" stop-color="#d0d0d0"/></linearGradient></defs><path d="M1 3 Q1 1 3 1 H6 Q7.5 1 8 2.5 H13 Q14.5 2.5 14.5 4 V12.5 H1 Z" fill="url(#fg)" stroke="#7c7c7c" stroke-width="1"/><path d="M1.5 13.2 H15 V4.5" fill="none" stroke="#1a1a1a" stroke-width="1.2"/></svg><div class="t" style="left:71px;top:386px">FPSS</div><svg class="a" style="left:27px;top:410px" width="9" height="9" viewBox="0 0 9 9" shape-rendering="crispEdges"><rect x=".5" y=".5" width="8" height="8" fill="#fff" stroke="#808080"/><rect x="2" y="4" width="5" height="1" fill="#000"/><rect x="4" y="2" width="1" height="5" fill="#000"/></svg><svg class="a" style="left:48px;top:407px" width="16" height="14" viewBox="0 0 16 14"><defs><linearGradient id="fg" x1="0" y1="0" x2="1" y2="1"><stop offset="0" stop-color="#fff"/><stop offset="1" stop-color="#d0d0d0"/></linearGradient></defs><path d="M1 3 Q1 1 3 1 H6 Q7.5 1 8 2.5 H13 Q14.5 2.5 14.5 4 V12.5 H1 Z" fill="url(#fg)" stroke="#7c7c7c" stroke-width="1"/><path d="M1.5 13.2 H15 V4.5" fill="none" stroke="#1a1a1a" stroke-width="1.2"/></svg><div class="t" style="left:71px;top:406px">PNOISE</div><svg class="a" style="left:27px;top:430px" width="9" height="9" viewBox="0 0 9 9" shape-rendering="crispEdges"><rect x=".5" y=".5" width="8" height="8" fill="#fff" stroke="#808080"/><rect x="2" y="4" width="5" height="1" fill="#000"/><rect x="4" y="2" width="1" height="5" fill="#000"/></svg><svg class="a" style="left:48px;top:427px" width="16" height="14" viewBox="0 0 16 14"><defs><linearGradient id="fg" x1="0" y1="0" x2="1" y2="1"><stop offset="0" stop-color="#fff"/><stop offset="1" stop-color="#d0d0d0"/></linearGradient></defs><path d="M1 3 Q1 1 3 1 H6 Q7.5 1 8 2.5 H13 Q14.5 2.5 14.5 4 V12.5 H1 Z" fill="url(#fg)" stroke="#7c7c7c" stroke-width="1"/><path d="M1.5 13.2 H15 V4.5" fill="none" stroke="#1a1a1a" stroke-width="1.2"/></svg><div class="t" style="left:71px;top:426px">TPSS</div><svg class="a" style="left:48px;top:447px" width="16" height="14" viewBox="0 0 16 14"><defs><linearGradient id="fg" x1="0" y1="0" x2="1" y2="1"><stop offset="0" stop-color="#fff"/><stop offset="1" stop-color="#d0d0d0"/></linearGradient></defs><path d="M1 3 Q1 1 3 1 H6 Q7.5 1 8 2.5 H13 Q14.5 2.5 14.5 4 V12.5 H1 Z" fill="url(#fg)" stroke="#7c7c7c" stroke-width="1"/><path d="M1.5 13.2 H15 V4.5" fill="none" stroke="#1a1a1a" stroke-width="1.2"/></svg><div class="t" style="left:71px;top:446px;letter-spacing:-.1px">INTEGRATED_NOISE</div><svg class="a" style="left:48px;top:467px" width="16" height="14" viewBox="0 0 16 14"><defs><linearGradient id="fg" x1="0" y1="0" x2="1" y2="1"><stop offset="0" stop-color="#fff"/><stop offset="1" stop-color="#d0d0d0"/></linearGradient></defs><path d="M1 3 Q1 1 3 1 H6 Q7.5 1 8 2.5 H13 Q14.5 2.5 14.5 4 V12.5 H1 Z" fill="url(#fg)" stroke="#7c7c7c" stroke-width="1"/><path d="M1.5 13.2 H15 V4.5" fill="none" stroke="#1a1a1a" stroke-width="1.2"/></svg><div class="t" style="left:71px;top:466px;letter-spacing:-.1px">PERCENTAGE_NOISE_S</div><svg class="a" style="left:6px;top:490px" width="9" height="9" viewBox="0 0 9 9" shape-rendering="crispEdges"><rect x=".5" y=".5" width="8" height="8" fill="#fff" stroke="#808080"/><rect x="2" y="4" width="5" height="1" fill="#000"/></svg><svg class="a" style="left:27px;top:486px" width="17" height="15" viewBox="0 0 17 15"><path d="M15.6 4.5 V13.4 H3.5" fill="none" stroke="#000" stroke-width="1.4"/><path d="M2 5.5 V3 Q2 1.5 3.5 1.5 H7 Q8 1.5 8.6 3 H13.5 Q14.6 3 14.6 4.2 V6" fill="#ffffa0" stroke="#9a9a00" stroke-width="1.1"/><path d="M1 6.8 Q.8 5.6 2 5.6 H11.4 Q12.4 5.6 12.8 6.6 L14.6 11.6 V12.4 H3.6 Q2.8 12.4 2.5 11.5 Z" fill="#ffff9c" stroke="#9a9a00" stroke-width="1.1"/><path d="M6 12 L9.5 7.5 H12.2 L13.8 12 Z" fill="#ffc890" opacity=".8"/><path d="M12.6 6.2 L14.6 11.8" stroke="#000" stroke-width="1.2"/><path d="M4.2 9.4 H9.8 M5.2 7.2 L8.8 11.6 M8.8 7.2 L5.2 11.6" stroke="#0000d0" stroke-width="1" shape-rendering="geometricPrecision"/></svg><div class="t" style="left:50px;top:486px">calc</div><div class="t" style="left:46px;top:504px">No Hierarchy Level</div></div></div><div class="a" style="left:2px;top:589px;width:202px;height:12px;background:#dcdcdc"></div><div class="a" style="left:14px;top:589px;width:67px;height:12px;background:#b8b8b8"></div><svg class="a" style="left:2px;top:589px" width="202" height="12"><path d="M4 6 L10 2 V10 Z M198 6 L192 2 V10 Z" fill="#808080"/></svg><svg class="a" style="left:6.5px;top:615.5px" width="16" height="16" viewBox="0 0 16 16" ><path d="M4.2 1.2 C5.4 .6 6.6 .8 7.2 2 L7.6 9 L1.2 9.5 C1.6 6 2.6 3 4.2 1.2 Z M11.8 1.2 C10.6 .6 9.4 .8 8.8 2 L8.4 9 L14.8 9.5 C14.4 6 13.4 3 11.8 1.2 Z" fill="#000"/><circle cx="4.2" cy="11.3" r="3.2" fill="#fff" stroke="#000" stroke-width="1.2"/><circle cx="11.8" cy="11.3" r="3.2" fill="#fff" stroke="#000" stroke-width="1.2"/></svg><svg class="a" style="left:31.5px;top:615.5px" width="16" height="16" viewBox="0 0 16 16" ><g shape-rendering="crispEdges" fill="none" stroke="#a0a0a0"><rect x="1.5" y="1.5" width="5" height="5" fill="#fff"/><rect x="1.5" y="10.5" width="5" height="5" fill="#fff"/><path d="M3 4 H6 M4.5 2.5 V5.5 M3 13 H6 M4.5 11.5 V14.5 M7 4.5 H15 M7 13.5 H15"/></g></svg><svg class="a" style="left:56px;top:615.5px" width="16" height="16" viewBox="0 0 16 16" ><g shape-rendering="crispEdges" fill="none" stroke="#333"><rect x="0.5" y="0.5" width="6" height="6" fill="#fff"/><path d="M6.5 3.5 H10.5 V8.5"/><rect x="7.5" y="8.5" width="7" height="6" fill="#fff"/><path d="M9 11.5 H13 M14.5 11.5 H16 M11.5 14.5 V16.5"/></g></svg><svg class="a" style="left:80px;top:613px" width="1" height="23" shape-rendering="crispEdges"><path d="M.5 0 V23" stroke="#8c8c8c" stroke-dasharray="1 2"/></svg><svg class="a" style="left:98.5px;top:615.5px" width="16" height="16"><circle cx="8" cy="8" r="6.8" fill="none" stroke="#1a1a1a" stroke-width="1.25"/><text x="8" y="12.2" text-anchor="middle" font-family="DejaVu Sans,Liberation Sans,sans-serif" font-size="11.5" fill="#111">V</text></svg><svg class="a" style="left:119.5px;top:615.5px" width="16" height="16"><circle cx="8" cy="8" r="6.8" fill="none" stroke="#1a1a1a" stroke-width="1.25"/><text x="8" y="12.2" text-anchor="middle" font-family="DejaVu Sans Mono,Liberation Mono,monospace" font-size="11.5" fill="#111">I</text></svg><svg class="a" style="left:140.5px;top:615.5px" width="16" height="16"><circle cx="8" cy="8" r="6.8" fill="none" stroke="#1a1a1a" stroke-width="1.25"/><text x="8" y="12.2" text-anchor="middle" font-family="DejaVu Sans,Liberation Sans,sans-serif" font-size="11.5" fill="#111">P</text></svg><svg class="a" style="left:161.5px;top:615.5px" width="16" height="16"><circle cx="8" cy="8" r="6.8" fill="none" stroke="#1a1a1a" stroke-width="1.25"/><text x="8" y="12.2" text-anchor="middle" font-family="DejaVu Sans,Liberation Sans,sans-serif" font-size="11.5" fill="#111">D</text></svg><svg class="a" style="left:182.5px;top:615.5px" width="16" height="16"><circle cx="8" cy="8" r="6.8" fill="none" stroke="#1a1a1a" stroke-width="1.25"/><text x="8" y="12.2" text-anchor="middle" font-family="DejaVu Sans,Liberation Sans,sans-serif" font-size="11.5" fill="#111">R</text></svg><div class="a" style="left:1px;top:662px;width:204px;height:478px;background:#fff;border:1px solid #9c9c9c;border-bottom:2px solid #a4a4a4"></div><div class="a" style="left:2px;top:663px;width:202px;height:21px;background:#d4d4d4;border-bottom:1px solid #a0a0a0"></div><div class="a" style="left:21px;top:663px;width:1px;height:20px;background:#a0a0a0"></div><div class="a" style="left:168px;top:663px;width:1px;height:20px;background:#a0a0a0"></div><svg class="a" style="left:7px;top:670px" width="10" height="7"><path d="M0 .5 H9.5 L4.75 6.5 Z" fill="#8c8c8c"/></svg><div class="t" style="left:77px;top:667px;letter-spacing:0">Name</div><svg class="a" style="left:6px;top:688px" width="9" height="9" viewBox="0 0 9 9" shape-rendering="crispEdges"><rect x=".5" y=".5" width="8" height="8" fill="#fff" stroke="#808080"/><rect x="2" y="4" width="5" height="1" fill="#000"/></svg><div class="t" style="left:25px;top:684px">TPSS</div><svg class="a" style="left:27px;top:704px" width="9" height="9" viewBox="0 0 9 9" shape-rendering="crispEdges"><rect x=".5" y=".5" width="8" height="8" fill="#fff" stroke="#808080"/><rect x="2" y="4" width="5" height="1" fill="#000"/><rect x="4" y="2" width="1" height="5" fill="#000"/></svg><svg class="a" style="left:46px;top:700px" width="16" height="17" viewBox="0 0 16 17"><path d="M0.8 10.8 C2 6.2 3.6 5.6 5 8.4 C6.5 11.4 7.9 15.6 9.3 15.3 C10.6 15 11.8 12.6 12.8 10.2" fill="none" stroke="#0000ff" stroke-width="1.8"/><path d="M11.5 3.7 V7.7 M9.5 5.7 H13.5" stroke="#007000" stroke-width="3" stroke-linecap="square"/><path d="M11.5 3 V8.4 M8.8 5.7 H14.2" stroke="#00e000" stroke-width="1.4" stroke-linecap="butt"/></svg><div class="t" style="left:67px;top:700px">i(L1)</div><svg class="a" style="left:27px;top:720px" width="9" height="9" viewBox="0 0 9 9" shape-rendering="crispEdges"><rect x=".5" y=".5" width="8" height="8" fill="#fff" stroke="#808080"/><rect x="2" y="4" width="5" height="1" fill="#000"/><rect x="4" y="2" width="1" height="5" fill="#000"/></svg><svg class="a" style="left:46px;top:716px" width="16" height="17" viewBox="0 0 16 17"><path d="M0.8 10.8 C2 6.2 3.6 5.6 5 8.4 C6.5 11.4 7.9 15.6 9.3 15.3 C10.6 15 11.8 12.6 12.8 10.2" fill="none" stroke="#0000ff" stroke-width="1.8"/><path d="M11.5 3.7 V7.7 M9.5 5.7 H13.5" stroke="#007000" stroke-width="3" stroke-linecap="square"/><path d="M11.5 3 V8.4 M8.8 5.7 H14.2" stroke="#00e000" stroke-width="1.4" stroke-linecap="butt"/></svg><div class="t" style="left:67px;top:716px">i(L3)</div><svg class="a" style="left:27px;top:736px" width="9" height="9" viewBox="0 0 9 9" shape-rendering="crispEdges"><rect x=".5" y=".5" width="8" height="8" fill="#fff" stroke="#808080"/><rect x="2" y="4" width="5" height="1" fill="#000"/><rect x="4" y="2" width="1" height="5" fill="#000"/></svg><svg class="a" style="left:46px;top:732px" width="16" height="17" viewBox="0 0 16 17"><path d="M0.8 10.8 C2 6.2 3.6 5.6 5 8.4 C6.5 11.4 7.9 15.6 9.3 15.3 C10.6 15 11.8 12.6 12.8 10.2" fill="none" stroke="#0000ff" stroke-width="1.8"/><path d="M11.5 3.7 V7.7 M9.5 5.7 H13.5" stroke="#007000" stroke-width="3" stroke-linecap="square"/><path d="M11.5 3 V8.4 M8.8 5.7 H14.2" stroke="#00e000" stroke-width="1.4" stroke-linecap="butt"/></svg><div class="t" style="left:67px;top:732px">lna_inN</div><svg class="a" style="left:27px;top:752px" width="9" height="9" viewBox="0 0 9 9" shape-rendering="crispEdges"><rect x=".5" y=".5" width="8" height="8" fill="#fff" stroke="#808080"/><rect x="2" y="4" width="5" height="1" fill="#000"/><rect x="4" y="2" width="1" height="5" fill="#000"/></svg><svg class="a" style="left:46px;top:748px" width="16" height="17" viewBox="0 0 16 17"><path d="M0.8 10.8 C2 6.2 3.6 5.6 5 8.4 C6.5 11.4 7.9 15.6 9.3 15.3 C10.6 15 11.8 12.6 12.8 10.2" fill="none" stroke="#0000ff" stroke-width="1.8"/><path d="M11.5 3.7 V7.7 M9.5 5.7 H13.5" stroke="#007000" stroke-width="3" stroke-linecap="square"/><path d="M11.5 3 V8.4 M8.8 5.7 H14.2" stroke="#00e000" stroke-width="1.4" stroke-linecap="butt"/></svg><div class="t" style="left:67px;top:748px">lna_inP</div><svg class="a" style="left:27px;top:768px" width="9" height="9" viewBox="0 0 9 9" shape-rendering="crispEdges"><rect x=".5" y=".5" width="8" height="8" fill="#fff" stroke="#808080"/><rect x="2" y="4" width="5" height="1" fill="#000"/><rect x="4" y="2" width="1" height="5" fill="#000"/></svg><svg class="a" style="left:46px;top:764px" width="16" height="17" viewBox="0 0 16 17"><path d="M0.8 10.8 C2 6.2 3.6 5.6 5 8.4 C6.5 11.4 7.9 15.6 9.3 15.3 C10.6 15 11.8 12.6 12.8 10.2" fill="none" stroke="#0000ff" stroke-width="1.8"/><path d="M11.5 3.7 V7.7 M9.5 5.7 H13.5" stroke="#007000" stroke-width="3" stroke-linecap="square"/><path d="M11.5 3 V8.4 M8.8 5.7 H14.2" stroke="#00e000" stroke-width="1.4" stroke-linecap="butt"/></svg><div class="t" style="left:67px;top:764px">lna_outN</div><svg class="a" style="left:27px;top:784px" width="9" height="9" viewBox="0 0 9 9" shape-rendering="crispEdges"><rect x=".5" y=".5" width="8" height="8" fill="#fff" stroke="#808080"/><rect x="2" y="4" width="5" height="1" fill="#000"/><rect x="4" y="2" width="1" height="5" fill="#000"/></svg><svg class="a" style="left:46px;top:780px" width="16" height="17" viewBox="0 0 16 17"><path d="M0.8 10.8 C2 6.2 3.6 5.6 5 8.4 C6.5 11.4 7.9 15.6 9.3 15.3 C10.6 15 11.8 12.6 12.8 10.2" fill="none" stroke="#0000ff" stroke-width="1.8"/><path d="M11.5 3.7 V7.7 M9.5 5.7 H13.5" stroke="#007000" stroke-width="3" stroke-linecap="square"/><path d="M11.5 3 V8.4 M8.8 5.7 H14.2" stroke="#00e000" stroke-width="1.4" stroke-linecap="butt"/></svg><div class="t" style="left:67px;top:780px">lna_outP</div><svg class="a" style="left:27px;top:800px" width="9" height="9" viewBox="0 0 9 9" shape-rendering="crispEdges"><rect x=".5" y=".5" width="8" height="8" fill="#fff" stroke="#808080"/><rect x="2" y="4" width="5" height="1" fill="#000"/><rect x="4" y="2" width="1" height="5" fill="#000"/></svg><svg class="a" style="left:46px;top:796px" width="16" height="17" viewBox="0 0 16 17"><path d="M0.8 10.8 C2 6.2 3.6 5.6 5 8.4 C6.5 11.4 7.9 15.6 9.3 15.3 C10.6 15 11.8 12.6 12.8 10.2" fill="none" stroke="#0000ff" stroke-width="1.8"/><path d="M11.5 3.7 V7.7 M9.5 5.7 H13.5" stroke="#007000" stroke-width="3" stroke-linecap="square"/><path d="M11.5 3 V8.4 M8.8 5.7 H14.2" stroke="#00e000" stroke-width="1.4" stroke-linecap="butt"/></svg><div class="t" style="left:67px;top:796px">net3</div><svg class="a" style="left:27px;top:816px" width="9" height="9" viewBox="0 0 9 9" shape-rendering="crispEdges"><rect x=".5" y=".5" width="8" height="8" fill="#fff" stroke="#808080"/><rect x="2" y="4" width="5" height="1" fill="#000"/><rect x="4" y="2" width="1" height="5" fill="#000"/></svg><svg class="a" style="left:46px;top:812px" width="16" height="17" viewBox="0 0 16 17"><path d="M0.8 10.8 C2 6.2 3.6 5.6 5 8.4 C6.5 11.4 7.9 15.6 9.3 15.3 C10.6 15 11.8 12.6 12.8 10.2" fill="none" stroke="#0000ff" stroke-width="1.8"/><path d="M11.5 3.7 V7.7 M9.5 5.7 H13.5" stroke="#007000" stroke-width="3" stroke-linecap="square"/><path d="M11.5 3 V8.4 M8.8 5.7 H14.2" stroke="#00e000" stroke-width="1.4" stroke-linecap="butt"/></svg><div class="t" style="left:67px;top:812px">net22</div><svg class="a" style="left:27px;top:832px" width="9" height="9" viewBox="0 0 9 9" shape-rendering="crispEdges"><rect x=".5" y=".5" width="8" height="8" fill="#fff" stroke="#808080"/><rect x="2" y="4" width="5" height="1" fill="#000"/><rect x="4" y="2" width="1" height="5" fill="#000"/></svg><svg class="a" style="left:46px;top:828px" width="16" height="17" viewBox="0 0 16 17"><path d="M0.8 10.8 C2 6.2 3.6 5.6 5 8.4 C6.5 11.4 7.9 15.6 9.3 15.3 C10.6 15 11.8 12.6 12.8 10.2" fill="none" stroke="#0000ff" stroke-width="1.8"/><path d="M11.5 3.7 V7.7 M9.5 5.7 H13.5" stroke="#007000" stroke-width="3" stroke-linecap="square"/><path d="M11.5 3 V8.4 M8.8 5.7 H14.2" stroke="#00e000" stroke-width="1.4" stroke-linecap="butt"/></svg><div class="t" style="left:67px;top:828px">net24</div><svg class="a" style="left:27px;top:848px" width="9" height="9" viewBox="0 0 9 9" shape-rendering="crispEdges"><rect x=".5" y=".5" width="8" height="8" fill="#fff" stroke="#808080"/><rect x="2" y="4" width="5" height="1" fill="#000"/><rect x="4" y="2" width="1" height="5" fill="#000"/></svg><svg class="a" style="left:46px;top:844px" width="16" height="17" viewBox="0 0 16 17"><path d="M0.8 10.8 C2 6.2 3.6 5.6 5 8.4 C6.5 11.4 7.9 15.6 9.3 15.3 C10.6 15 11.8 12.6 12.8 10.2" fill="none" stroke="#0000ff" stroke-width="1.8"/><path d="M11.5 3.7 V7.7 M9.5 5.7 H13.5" stroke="#007000" stroke-width="3" stroke-linecap="square"/><path d="M11.5 3 V8.4 M8.8 5.7 H14.2" stroke="#00e000" stroke-width="1.4" stroke-linecap="butt"/></svg><div class="t" style="left:67px;top:844px">net32</div><svg class="a" style="left:27px;top:864px" width="9" height="9" viewBox="0 0 9 9" shape-rendering="crispEdges"><rect x=".5" y=".5" width="8" height="8" fill="#fff" stroke="#808080"/><rect x="2" y="4" width="5" height="1" fill="#000"/><rect x="4" y="2" width="1" height="5" fill="#000"/></svg><svg class="a" style="left:46px;top:860px" width="16" height="17" viewBox="0 0 16 17"><path d="M0.8 10.8 C2 6.2 3.6 5.6 5 8.4 C6.5 11.4 7.9 15.6 9.3 15.3 C10.6 15 11.8 12.6 12.8 10.2" fill="none" stroke="#0000ff" stroke-width="1.8"/><path d="M11.5 3.7 V7.7 M9.5 5.7 H13.5" stroke="#007000" stroke-width="3" stroke-linecap="square"/><path d="M11.5 3 V8.4 M8.8 5.7 H14.2" stroke="#00e000" stroke-width="1.4" stroke-linecap="butt"/></svg><div class="t" style="left:67px;top:860px">net44</div><svg class="a" style="left:27px;top:880px" width="9" height="9" viewBox="0 0 9 9" shape-rendering="crispEdges"><rect x=".5" y=".5" width="8" height="8" fill="#fff" stroke="#808080"/><rect x="2" y="4" width="5" height="1" fill="#000"/><rect x="4" y="2" width="1" height="5" fill="#000"/></svg><svg class="a" style="left:46px;top:876px" width="16" height="17" viewBox="0 0 16 17"><path d="M0.8 10.8 C2 6.2 3.6 5.6 5 8.4 C6.5 11.4 7.9 15.6 9.3 15.3 C10.6 15 11.8 12.6 12.8 10.2" fill="none" stroke="#0000ff" stroke-width="1.8"/><path d="M11.5 3.7 V7.7 M9.5 5.7 H13.5" stroke="#007000" stroke-width="3" stroke-linecap="square"/><path d="M11.5 3 V8.4 M8.8 5.7 H14.2" stroke="#00e000" stroke-width="1.4" stroke-linecap="butt"/></svg><div class="t" style="left:67px;top:876px">v1p8</div><svg class="a" style="left:0;top:0" width="205" height="1158"><g stroke="#787878" stroke-dasharray="1.6 1.5" fill="none"><path d="M31.5 700 V884"/><path d="M36 708.5 H42"/><path d="M36 724.5 H42"/><path d="M36 740.5 H42"/><path d="M36 756.5 H42"/><path d="M36 772.5 H42"/><path d="M36 788.5 H42"/><path d="M36 804.5 H42"/><path d="M36 820.5 H42"/><path d="M36 836.5 H42"/><path d="M36 852.5 H42"/><path d="M36 868.5 H42"/><path d="M36 884.5 H42"/></g></svg><div class="a" style="left:2px;top:1126px;width:202px;height:12px;background:#dcdcdc"></div><div class="a" style="left:14px;top:1126px;width:70px;height:12px;background:#b8b8b8"></div><svg class="a" style="left:2px;top:1126px" width="202" height="12"><path d="M4 6 L10 2 V10 Z M198 6 L192 2 V10 Z" fill="#808080"/></svg><div class="a" style="left:10px;top:1140px;width:65px;height:18px;background:#e8e8e8;border:1px solid #a8a8a8;border-top:none"></div><div class="a" style="left:74px;top:1140px;width:59px;height:18px;background:#cacaca;border:1px solid #a8a8a8;border-top:none"></div><svg class="a" style="left:18px;top:1144px" width="16" height="14" shape-rendering="crispEdges"><rect x=".5" y=".5" width="15" height="15" fill="#fff" stroke="#000"/><path d="M3.5 4 V7.5 H6 L8.5 10.5 H11 M6 7.5 V13" fill="none" stroke="#000"/><g fill="#fff" stroke="#0000e0"><rect x="2.5" y="2.5" width="2" height="2"/><rect x="5.5" y="6.5" width="2" height="2"/><rect x="10.5" y="9.5" width="2" height="2"/><rect x="5.5" y="12.5" width="2" height="2"/></g></svg><svg class="a" style="left:82px;top:1144px" width="16" height="14" shape-rendering="crispEdges"><rect x=".5" y=".5" width="15" height="15" fill="#fff" stroke="#000"/><rect x="1.5" y="1.5" width="2" height="2" fill="#fff" stroke="#0000e0"/><path d="M4 6.5 H13 M4 9.5 H13 M4 12.5 H13" stroke="#000"/></svg><div class="t" style="left:39px;top:1145px;letter-spacing:0">Tree</div><div class="t" style="left:103px;top:1145px;letter-spacing:0">List</div>
<div class="a" style="left:211px;top:69px;width:1703px;height:3px;background:#0f9a9a"></div>
<div class="a" style="left:211px;top:72px;width:1703px;height:17px;background:#d4d4d4"></div>
<div class="a" style="left:211px;top:72px;width:1px;height:1028px;background:#a4a4a4"></div><div class="a" style="left:212px;top:89px;width:1px;height:1010px;background:#d8d8d8"></div>
<div class="t" style="left:1039px;top:72px;font-weight:bold;letter-spacing:.2px">Wave:2</div>
<svg class="a" style="left:1860px;top:72px" width="54" height="17"><g fill="none" stroke="#111" stroke-width="1.2"><path d="M5 8.5 H14"/><rect x="23.5" y="5.5" width="8" height="8" fill="#d4d4d4"/><path d="M26.5 5 V2.5 H34.5 V10.5 H32"/><path d="M45.5 3 L56 14 M56 3 L45.5 14"/></g></svg>
<div class="a" style="left:213px;top:89px;width:1581px;height:997px;background:#000"></div>
<div class="a" style="left:1798px;top:89px;width:108px;height:997px;background:#000"></div>
<div class="a" style="left:1794px;top:89px;width:4px;height:1010px;background:#dedede"></div>
<svg class="a" style="left:213px;top:89px" width="1581" height="997" viewBox="213 89 1581 997"><defs><clipPath id="cp"><rect x="285" y="89" width="1509" height="997"/></clipPath></defs><g stroke="#828282" stroke-width="1" shape-rendering="crispEdges" fill="none"><path d="M274 112.5 H1794 M284.5 112.5 V321.5 M274 321.5 H1794"/><path d="M274 125.5 H284 M274 138.5 H284 M274 151.5 H284 M274 164.5 H284 M274 177.5 H284 M274 190.5 H284 M274 203.5 H284 M274 216.5 H284 M274 230.5 H284 M274 243.5 H284 M274 256.5 H284 M274 269.5 H284 M274 282.5 H284 M274 295.5 H284 M274 308.5 H284"/><path d="M285.5 322 V326 M303.5 322 V324 M321.5 322 V324 M339.5 322 V324 M357.5 322 V324 M376.5 322 V326 M394.5 322 V324 M412.5 322 V324 M430.5 322 V324 M448.5 322 V324 M466.5 322 V326 M484.5 322 V324 M502.5 322 V324 M520.5 322 V324 M538.5 322 V324 M557.5 322 V326 M575.5 322 V324 M593.5 322 V324 M611.5 322 V324 M629.5 322 V324 M647.5 322 V326 M665.5 322 V324 M683.5 322 V324 M701.5 322 V324 M719.5 322 V324 M738.5 322 V326 M756.5 322 V324 M774.5 322 V324 M792.5 322 V324 M810.5 322 V324 M828.5 322 V326 M846.5 322 V324 M864.5 322 V324 M882.5 322 V324 M900.5 322 V324 M919.5 322 V326 M937.5 322 V324 M955.5 322 V324 M973.5 322 V324 M991.5 322 V324 M1009.5 322 V326 M1027.5 322 V324 M1045.5 322 V324 M1063.5 322 V324 M1081.5 322 V324 M1100.5 322 V326 M1118.5 322 V324 M1136.5 322 V324 M1154.5 322 V324 M1172.5 322 V324 M1190.5 322 V326 M1208.5 322 V324 M1226.5 322 V324 M1244.5 322 V324 M1262.5 322 V324 M1281.5 322 V326 M1299.5 322 V324 M1317.5 322 V324 M1335.5 322 V324 M1353.5 322 V324 M1371.5 322 V326 M1389.5 322 V324 M1407.5 322 V324 M1425.5 322 V324 M1443.5 322 V324 M1462.5 322 V326 M1480.5 322 V324 M1498.5 322 V324 M1516.5 322 V324 M1534.5 322 V324 M1552.5 322 V326 M1570.5 322 V324 M1588.5 322 V324 M1606.5 322 V324 M1624.5 322 V324 M1643.5 322 V326 M1661.5 322 V324 M1679.5 322 V324 M1697.5 322 V324 M1715.5 322 V324 M1733.5 322 V326 M1751.5 322 V324 M1769.5 322 V324 M1787.5 322 V324"/><path d="M274 350.5 H1794 M284.5 350.5 V559.5 M274 559.5 H1794"/><path d="M274 365.5 H284 M274 380.5 H284 M274 395.5 H284 M274 410.5 H284 M274 425.5 H284 M274 440.5 H284 M274 454.5 H284 M274 469.5 H284 M274 484.5 H284 M274 499.5 H284 M274 514.5 H284 M274 529.5 H284 M274 544.5 H284"/><path d="M285.5 560 V564 M303.5 560 V562 M321.5 560 V562 M339.5 560 V562 M357.5 560 V562 M376.5 560 V564 M394.5 560 V562 M412.5 560 V562 M430.5 560 V562 M448.5 560 V562 M466.5 560 V564 M484.5 560 V562 M502.5 560 V562 M520.5 560 V562 M538.5 560 V562 M557.5 560 V564 M575.5 560 V562 M593.5 560 V562 M611.5 560 V562 M629.5 560 V562 M647.5 560 V564 M665.5 560 V562 M683.5 560 V562 M701.5 560 V562 M719.5 560 V562 M738.5 560 V564 M756.5 560 V562 M774.5 560 V562 M792.5 560 V562 M810.5 560 V562 M828.5 560 V564 M846.5 560 V562 M864.5 560 V562 M882.5 560 V562 M900.5 560 V562 M919.5 560 V564 M937.5 560 V562 M955.5 560 V562 M973.5 560 V562 M991.5 560 V562 M1009.5 560 V564 M1027.5 560 V562 M1045.5 560 V562 M1063.5 560 V562 M1081.5 560 V562 M1100.5 560 V564 M1118.5 560 V562 M1136.5 560 V562 M1154.5 560 V562 M1172.5 560 V562 M1190.5 560 V564 M1208.5 560 V562 M1226.5 560 V562 M1244.5 560 V562 M1262.5 560 V562 M1281.5 560 V564 M1299.5 560 V562 M1317.5 560 V562 M1335.5 560 V562 M1353.5 560 V562 M1371.5 560 V564 M1389.5 560 V562 M1407.5 560 V562 M1425.5 560 V562 M1443.5 560 V562 M1462.5 560 V564 M1480.5 560 V562 M1498.5 560 V562 M1516.5 560 V562 M1534.5 560 V562 M1552.5 560 V564 M1570.5 560 V562 M1588.5 560 V562 M1606.5 560 V562 M1624.5 560 V562 M1643.5 560 V564 M1661.5 560 V562 M1679.5 560 V562 M1697.5 560 V562 M1715.5 560 V562 M1733.5 560 V564 M1751.5 560 V562 M1769.5 560 V562 M1787.5 560 V562"/><path d="M274 588.5 H1794 M284.5 588.5 V797.5 M274 797.5 H1794"/><path d="M274 603.5 H284 M274 618.5 H284 M274 633.5 H284 M274 648.5 H284 M274 663.5 H284 M274 678.5 H284 M274 692.5 H284 M274 707.5 H284 M274 722.5 H284 M274 737.5 H284 M274 752.5 H284 M274 767.5 H284 M274 782.5 H284"/><path d="M285.5 798 V802 M303.5 798 V800 M321.5 798 V800 M339.5 798 V800 M357.5 798 V800 M376.5 798 V802 M394.5 798 V800 M412.5 798 V800 M430.5 798 V800 M448.5 798 V800 M466.5 798 V802 M484.5 798 V800 M502.5 798 V800 M520.5 798 V800 M538.5 798 V800 M557.5 798 V802 M575.5 798 V800 M593.5 798 V800 M611.5 798 V800 M629.5 798 V800 M647.5 798 V802 M665.5 798 V800 M683.5 798 V800 M701.5 798 V800 M719.5 798 V800 M738.5 798 V802 M756.5 798 V800 M774.5 798 V800 M792.5 798 V800 M810.5 798 V800 M828.5 798 V802 M846.5 798 V800 M864.5 798 V800 M882.5 798 V800 M900.5 798 V800 M919.5 798 V802 M937.5 798 V800 M955.5 798 V800 M973.5 798 V800 M991.5 798 V800 M1009.5 798 V802 M1027.5 798 V800 M1045.5 798 V800 M1063.5 798 V800 M1081.5 798 V800 M1100.5 798 V802 M1118.5 798 V800 M1136.5 798 V800 M1154.5 798 V800 M1172.5 798 V800 M1190.5 798 V802 M1208.5 798 V800 M1226.5 798 V800 M1244.5 798 V800 M1262.5 798 V800 M1281.5 798 V802 M1299.5 798 V800 M1317.5 798 V800 M1335.5 798 V800 M1353.5 798 V800 M1371.5 798 V802 M1389.5 798 V800 M1407.5 798 V800 M1425.5 798 V800 M1443.5 798 V800 M1462.5 798 V802 M1480.5 798 V800 M1498.5 798 V800 M1516.5 798 V800 M1534.5 798 V800 M1552.5 798 V802 M1570.5 798 V800 M1588.5 798 V800 M1606.5 798 V800 M1624.5 798 V800 M1643.5 798 V802 M1661.5 798 V800 M1679.5 798 V800 M1697.5 798 V800 M1715.5 798 V800 M1733.5 798 V802 M1751.5 798 V800 M1769.5 798 V800 M1787.5 798 V800"/><path d="M274 826.5 H1794 M284.5 826.5 V1035.5 M274 1035.5 H1794"/><path d="M274 839.5 H284 M274 852.5 H284 M274 865.5 H284 M274 878.5 H284 M274 891.5 H284 M274 904.5 H284 M274 917.5 H284 M274 930.5 H284 M274 944.5 H284 M274 957.5 H284 M274 970.5 H284 M274 983.5 H284 M274 996.5 H284 M274 1009.5 H284 M274 1022.5 H284"/><path d="M285.5 1036 V1047 M303.5 1036 V1041 M321.5 1036 V1041 M339.5 1036 V1041 M357.5 1036 V1041 M376.5 1036 V1044 M394.5 1036 V1041 M412.5 1036 V1041 M430.5 1036 V1041 M448.5 1036 V1041 M466.5 1036 V1047 M484.5 1036 V1041 M502.5 1036 V1041 M520.5 1036 V1041 M538.5 1036 V1041 M557.5 1036 V1044 M575.5 1036 V1041 M593.5 1036 V1041 M611.5 1036 V1041 M629.5 1036 V1041 M647.5 1036 V1047 M665.5 1036 V1041 M683.5 1036 V1041 M701.5 1036 V1041 M719.5 1036 V1041 M738.5 1036 V1044 M756.5 1036 V1041 M774.5 1036 V1041 M792.5 1036 V1041 M810.5 1036 V1041 M828.5 1036 V1047 M846.5 1036 V1041 M864.5 1036 V1041 M882.5 1036 V1041 M900.5 1036 V1041 M919.5 1036 V1044 M937.5 1036 V1041 M955.5 1036 V1041 M973.5 1036 V1041 M991.5 1036 V1041 M1009.5 1036 V1047 M1027.5 1036 V1041 M1045.5 1036 V1041 M1063.5 1036 V1041 M1081.5 1036 V1041 M1100.5 1036 V1044 M1118.5 1036 V1041 M1136.5 1036 V1041 M1154.5 1036 V1041 M1172.5 1036 V1041 M1190.5 1036 V1047 M1208.5 1036 V1041 M1226.5 1036 V1041 M1244.5 1036 V1041 M1262.5 1036 V1041 M1281.5 1036 V1044 M1299.5 1036 V1041 M1317.5 1036 V1041 M1335.5 1036 V1041 M1353.5 1036 V1041 M1371.5 1036 V1047 M1389.5 1036 V1041 M1407.5 1036 V1041 M1425.5 1036 V1041 M1443.5 1036 V1041 M1462.5 1036 V1044 M1480.5 1036 V1041 M1498.5 1036 V1041 M1516.5 1036 V1041 M1534.5 1036 V1041 M1552.5 1036 V1047 M1570.5 1036 V1041 M1588.5 1036 V1041 M1606.5 1036 V1041 M1624.5 1036 V1041 M1643.5 1036 V1044 M1661.5 1036 V1041 M1679.5 1036 V1041 M1697.5 1036 V1041 M1715.5 1036 V1041 M1733.5 1036 V1047 M1751.5 1036 V1041 M1769.5 1036 V1041 M1787.5 1036 V1041"/><path d="M284 1036.5 H1794"/></g><g clip-path="url(#cp)"><path fill="none" stroke="#ff8000" stroke-width="1" shape-rendering="crispEdges" d="M285 213.5h42m0 1h42m0 1h39m0 1h37m0 1h36m0 1h35m0 1h37m0 1h38m0 1h42m0 1h48m0 1h62m0 1h242m0-1h64m0-1h49m0-1h44m0-1h39m0-1h38m0-1h38m0-1h37m0-1h38m0-1h40m0-1h45m0-1h52m0-1h73m0-1h170m0 1h73m0 1h9M285 211.5h7m0 1h39m0 1h33m0 1h32m0 1h29m0 1h29m0 1h28m0 1h28m0 1h29m0 1h29m0 1h31m0 1h34m0 1h37m0 1h45m0 1h65m0 1h165m0-1h66m0-1h47m0-1h39m0-1h35m0-1h33m0-1h31m0-1h30m0-1h29m0-1h30m0-1h30m0-1h31m0-1h33m0-1h35m0-1h39m0-1h49m0-1h79m0-1h95m0 1h78m0 1h40M285 210.5h28m0 1h28m0 1h26m0 1h25m0 1h23m0 1h23m0 1h22m0 1h23m0 1h22m0 1h22m0 1h23m0 1h24m0 1h25m0 1h26m0 1h29m0 1h32m0 1h39m0 1h54m0 1h163m0-1h56m0-1h40m0-1h34m0-1h31m0-1h28m0-1h26m0-1h26m0-1h24m0-1h24m0-1h24m0-1h23m0-1h24m0-1h25m0-1h24m0-1h26m0-1h28m0-1h29m0-1h34m0-1h40m0-1h59m0-1h126m0 1h58m0 1h38m0 1h5M285 207.5h1m0 1h25m0 1h23m0 1h21m0 1h20m0 1h19m0 1h18m0 1h18m0 1h18m0 1h18m0 1h17m0 1h17m0 1h18m0 1h18m0 1h18m0 1h19m0 1h20m0 1h20m0 1h22m0 1h23m0 1h26m0 1h30m0 1h38m0 1h62m0 1h88m0-1h64m0-1h39m0-1h32m0-1h28m0-1h25m0-1h23m0-1h22m0-1h22m0-1h20m0-1h20m0-1h19m0-1h20m0-1h19m0-1h19m0-1h19m0-1h19m0-1h19m0-1h20m0-1h20m0-1h22m0-1h22m0-1h24m0-1h26m0-1h30m0-1h37m0-1h61m0-1h78m0 1h59m0 1h36m0 1h28M285 205.5h16m0 1h19m0 1h17m0 1h17m0 1h15m0 1h16m0 1h14m0 1h15m0 1h14m0 1h14m0 1h13m0 1h14m0 1h14m0 1h14m0 1h13m0 1h14m0 1h15m0 1h14m0 1h15m0 1h15m0 1h16m0 1h16m0 1h18m0 1h18m0 1h20m0 1h22m0 1h25m0 1h31m0 1h45m0 1h122m0-1h47m0-1h33m0-1h27m0-1h24m0-1h22m0-1h20m0-1h19m0-1h18m0-1h18m0-1h16m0-1h17m0-1h16m0-1h16m0-1h15m0-1h16m0-1h15m0-1h15m0-1h15m0-1h16m0-1h15m0-1h15m0-1h16m0-1h16m0-1h17m0-1h17m0-1h17m0-1h19m0-1h20m0-1h21m0-1h24m0-1h29m0-1h38m0-1h138m0 1h36m0 1h28m0 1h23m0 1h4M285 201.5h6m0 1h15m0 1h14m0 1h14m0 1h13m0 1h13m0 1h12m0 1h12m0 1h11m0 1h11m0 1h11m0 1h11m0 1h11m0 1h11m0 1h11m0 1h11m0 1h10m0 1h11m0 1h11m0 1h11m0 1h11m0 1h11m0 1h11m0 1h12m0 1h12m0 1h12m0 1h12m0 1h13m0 1h14m0 1h14m0 1h15m0 1h16m0 1h17m0 1h19m0 1h22m0 1h27m0 1h38m0 1h121m0-1h40m0-1h28m0-1h24m0-1h22m0-1h19m0-1h18m0-1h17m0-1h15m0-1h16m0-1h14m0-1h15m0-1h14m0-1h13m0-1h13m0-1h13m0-1h13m0-1h13m0-1h12m0-1h12m0-1h13m0-1h12m0-1h12m0-1h12m0-1h13m0-1h12m0-1h12m0-1h13m0-1h12m0-1h13m0-1h13m0-1h14m0-1h13m0-1h15m0-1h14m0-1h16m0-1h17m0-1h17m0-1h20m0-1h23m0-1h27m0-1h43m0-1h75m0 1h42m0 1h27m0 1h21m0 1h19m0 1h11M285 197.5h11m0 1h12m0 1h11m0 1h11m0 1h10m0 1h10m0 1h10m0 1h9m0 1h10m0 1h9m0 1h8m0 1h9m0 1h9m0 1h9m0 1h8m0 1h9m0 1h8m0 1h8m0 1h9m0 1h8m0 1h8m0 1h9m0 1h8m0 1h9m0 1h8m0 1h9m0 1h9m0 1h9m0 1h8m0 1h10m0 1h9m0 1h9m0 1h10m0 1h10m0 1h10m0 1h11m0 1h11m0 1h12m0 1h12m0 1h13m0 1h14m0 1h15m0 1h16m0 1h20m0 1h23m0 1h31m0 1h120m0-1h34m0-1h25m0-1h22m0-1h18m0-1h18m0-1h15m0-1h15m0-1h15m0-1h13m0-1h13m0-1h13m0-1h12m0-1h12m0-1h11m0-1h11m0-1h11m0-1h11m0-1h11m0-1h10m0-1h11m0-1h10m0-1h10m0-1h10m0-1h10m0-1h10m0-1h10m0-1h10m0-1h10m0-1h9m0-1h10m0-1h10m0-1h10m0-1h10m0-1h10m0-1h10m0-1h10m0-1h10m0-1h11m0-1h11m0-1h10m0-1h12m0-1h11m0-1h12m0-1h12m0-1h13m0-1h14m0-1h14m0-1h16m0-1h17m0-1h21m0-1h25m0-1h48m0-1h34m0 1h47m0 1h24m0 1h20m0 1h16m0 1h15m0 1h13m0 1h2M285 187.5h1m0 1h11m0 1h11m0 1h11m0 1h11m0 1h10m0 1h10m0 1h10m0 1h9m0 1h9m0 1h8m0 1h8m0 1h8m0 1h7m0 1h8m0 1h7m0 1h7m0 1h7m0 1h6m0 1h7m0 1h7m0 1h6m0 1h6m0 1h7m0 1h6m0 1h6m0 1h7m0 1h6m0 1h6m0 1h7m0 1h6m0 1h7m0 1h6m0 1h7m0 1h6m0 1h7m0 1h7m0 1h6m0 1h7m0 1h7m0 1h7m0 1h7m0 1h7m0 1h8m0 1h7m0 1h8m0 1h8m0 1h8m0 1h8m0 1h8m0 1h9m0 1h9m0 1h9m0 1h9m0 1h10m0 1h11m0 1h10m0 1h12m0 1h12m0 1h13m0 1h14m0 1h16m0 1h19m0 1h22m0 1h30m0 1h83m0-1h25m0-1h18m0-1h15m0-1h13m0-1h12m0-1h11m0-1h10m0-1h10m0-1h10m0-1h9m0-1h9m0-1h9m0-1h9m0-1h9m0-1h8m0-1h9m0-1h8m0-1h8m0-1h9m0-1h8m0-1h8m0-1h8m0-1h8m0-1h8m0-1h8m0-1h7m0-1h8m0-1h7m0-1h8m0-1h8m0-1h7m0-1h8m0-1h8m0-1h7m0-1h8m0-1h8m0-1h7m0-1h8m0-1h8m0-1h8m0-1h7m0-1h8m0-1h8m0-1h8m0-1h8m0-1h8m0-1h8m0-1h8m0-1h8m0-1h9m0-1h8m0-1h9m0-1h8m0-1h9m0-1h9m0-1h9m0-1h9m0-1h10m0-1h10m0-1h10m0-1h11m0-1h11m0-1h12m0-1h13m0-1h14m0-1h15m0-1h19m0-1h24m0-1h117m0 1h25m0 1h17m0 1h14m0 1h12M285 171.5h4m0 1h11m0 1h9m0 1h9m0 1h9m0 1h8m0 1h8m0 1h8m0 1h7m0 1h7m0 1h6m0 1h7m0 1h6m0 1h6m0 1h6m0 1h6m0 1h6m0 1h5m0 1h6m0 1h5m0 1h5m0 1h5m0 1h5m0 1h5m0 1h5m0 1h5m0 1h4m0 1h5m0 1h5m0 1h5m0 1h4m0 1h5m0 1h5m0 1h4m0 1h5m0 1h4m0 1h5m0 1h5m0 1h4m0 1h5m0 1h4m0 1h5m0 1h4m0 1h5m0 1h4m0 1h5m0 1h4m0 1h5m0 1h5m0 1h4m0 1h5m0 1h4m0 1h5m0 1h4m0 1h5m0 1h4m0 1h5m0 1h5m0 1h4m0 1h5m0 1h5m0 1h4m0 1h5m0 1h5m0 1h5m0 1h5m0 1h5m0 1h5m0 1h5m0 1h5m0 1h5m0 1h6m0 1h5m0 1h6m0 1h5m0 1h6m0 1h5m0 1h6m0 1h6m0 1h6m0 1h7m0 1h6m0 1h6m0 1h7m0 1h7m0 1h7m0 1h7m0 1h8m0 1h8m0 1h9m0 1h8m0 1h10m0 1h10m0 1h12m0 1h13m0 1h15m0 1h18m0 1h33m0 1h19m0-1h32m0-1h17m0-1h13m0-1h12m0-1h11m0-1h10m0-1h9m0-1h9m0-1h8m0-1h8m0-1h7m0-1h8m0-1h7m0-1h7m0-1h7m0-1h7m0-1h7m0-1h7m0-1h7m0-1h7m0-1h6m0-1h7m0-1h7m0-1h6m0-1h7m0-1h6m0-1h7m0-1h6m0-1h6m0-1h7m0-1h6m0-1h6m0-1h6m0-1h6m0-1h6m0-1h6m0-1h6m0-1h6m0-1h6m0-1h6m0-1h6m0-1h6m0-1h6m0-1h6m0-1h6m0-1h6m0-1h5m0-1h6m0-1h6m0-1h6m0-1h6m0-1h6m0-1h6m0-1h5m0-1h6m0-1h6m0-1h6m0-1h6m0-1h6m0-1h6m0-1h6m0-1h5m0-1h6m0-1h6m0-1h6m0-1h6m0-1h6m0-1h6m0-1h6m0-1h6m0-1h6m0-1h7m0-1h6m0-1h6m0-1h6m0-1h7m0-1h6m0-1h7m0-1h6m0-1h7m0-1h7m0-1h6m0-1h7m0-1h7m0-1h7m0-1h8m0-1h7m0-1h8m0-1h8m0-1h8m0-1h8m0-1h9m0-1h9m0-1h9m0-1h11m0-1h10m0-1h12m0-1h13m0-1h16m0-1h23m0-1h68m0 1h20m0 1h14m0 1h8M285 152.5h10m0 1h21m0 1h14m0 1h10m0 1h9m0 1h9m0 1h7m0 1h7m0 1h7m0 1h6m0 1h6m0 1h6m0 1h6m0 1h6m0 1h5m0 1h5m0 1h6m0 1h5m0 1h5m0 1h4m0 1h5m0 1h5m0 1h4m0 1h5m0 1h4m0 1h4m0 1h4m0 1h4m0 1h4m0 1h4m0 1h4m0 1h4m0 1h4m0 1h3m0 1h4m0 1h3m0 1h4m0 1h3m0 1h4m0 1h3m0 1h3m0 1h4m0 1h3m0 1h3m0 1h4m0 1h3m0 1h3m0 1h4m0 1h3m0 1h3m0 1h3m0 1h3m0 1h4m0 1h3m0 1h3m0 1h3m0 1h4m0 1h3m0 1h3m0 1h3m0 1h3m0 1h4m0 1h3m0 1h3m0 1h3m0 1h3m0 1h4m0 1h3m0 1h3m0 1h3m0 1h3m0 1h4m0 1h3m0 1h3m0 1h3m0 1h4m0 1h3m0 1h3m0 1h4m0 1h3m0 1h3m0 1h3m0 1h4m0 1h3m0 1h4m0 1h3m0 1h3m0 1h4m0 1h3m0 1h4m0 1h3m0 1h4m0 1h3m0 1h4m0 1h4m0 1h3m0 1h4m0 1h4m0 1h3m0 1h4m0 1h4m0 1h4m0 1h4m0 1h4m0 1h4m0 1h4m0 1h4m0 1h4m0 1h5m0 1h4m0 1h5m0 1h4m0 1h5m0 1h4m0 1h5m0 1h5m0 1h5m0 1h5m0 1h6m0 1h5m0 1h6m0 1h6m0 1h6m0 1h7m0 1h7m0 1h7m0 1h8m0 1h9m0 1h9m0 1h11m0 1h12m0 1h18m0 1h44m0-1h20m0-1h16m0-1h13m0-1h12m0-1h10m0-1h9m0-1h9m0-1h8m0-1h8m0-1h8m0-1h7m0-1h7m0-1h7m0-1h7m0-1h7m0-1h6m0-1h6m0-1h6m0-1h7m0-1h6m0-1h5m0-1h6m0-1h6m0-1h6m0-1h6m0-1h5m0-1h6m0-1h5m0-1h6m0-1h5m0-1h5m0-1h6m0-1h5m0-1h5m0-1h5m0-1h6m0-1h5m0-1h5m0-1h5m0-1h5m0-1h5m0-1h5m0-1h5m0-1h5m0-1h5m0-1h4m0-1h5m0-1h5m0-1h5m0-1h5m0-1h4m0-1h5m0-1h5m0-1h5m0-1h4m0-1h5m0-1h5m0-1h4m0-1h5m0-1h5m0-1h5m0-1h4m0-1h5m0-1h5m0-1h4m0-1h5m0-1h5m0-1h4m0-1h5m0-1h5m0-1h4m0-1h5m0-1h5m0-1h5m0-1h4m0-1h5m0-1h5m0-1h4m0-1h5m0-1h5m0-1h5m0-1h4m0-1h5m0-1h5m0-1h5m0-1h5m0-1h5m0-1h4m0-1h5m0-1h5m0-1h5m0-1h5m0-1h5m0-1h5m0-1h5m0-1h5m0-1h5m0-1h5m0-1h5m0-1h6m0-1h5m0-1h5m0-1h5m0-1h6m0-1h5m0-1h6m0-1h5m0-1h6m0-1h5m0-1h6m0-1h6m0-1h6m0-1h6m0-1h6m0-1h6m0-1h6m0-1h7m0-1h6m0-1h7m0-1h7m0-1h7m0-1h7m0-1h8m0-1h8m0-1h8m0-1h9m0-1h10m0-1h10m0-1h12m0-1h14m0-1h22m0-1h28M285 142.5h22m0-1h33m0 1h21m0 1h13m0 1h11m0 1h9m0 1h7m0 1h8m0 1h6m0 1h6m0 1h6m0 1h6m0 1h5m0 1h5m0 1h5m0 1h4m0 1h5m0 1h4m0 1h5m0 1h4m0 1h4m0 1h4m0 1h4m0 1h4m0 1h4m0 1h3m0 1h4m0 1h3m0 1h4m0 1h4m0 1h3m0 1h3m0 1h4m0 1h3m0 1h3m0 1h3m0 1h4m0 1h3m0 1h3m0 1h3m0 1h3m0 1h3m0 1h3m0 1h3m0 1h3m0 1h3m0 1h2m0 1h3m0 1h3m0 1h3m0 1h3m0 1h3m0 1h2m0 1h3m0 1h3m0 1h3m0 1h2m0 1h3m0 1h3m0 1h3m0 1h2m0 1h3m0 1h3m0 1h3m0 1h2m0 1h3m0 1h3m0 1h2m0 1h3m0 1h3m0 1h2m0 1h3m0 1h3m0 1h2m0 1h3m0 1h3m0 1h2m0 1h3m0 1h3m0 1h2m0 1h3m0 1h3m0 1h2m0 1h3m0 1h3m0 1h3m0 1h2m0 1h3m0 1h3m0 1h2m0 1h3m0 1h3m0 1h3m0 1h2m0 1h3m0 1h3m0 1h3m0 1h2m0 1h3m0 1h3m0 1h3m0 1h3m0 1h3m0 1h2m0 1h3m0 1h3m0 1h3m0 1h3m0 1h3m0 1h3m0 1h3m0 1h3m0 1h3m0 1h3m0 1h3m0 1h3m0 1h3m0 1h3m0 1h4m0 1h3m0 1h3m0 1h3m0 1h4m0 1h3m0 1h3m0 1h4m0 1h3m0 1h4m0 1h3m0 1h4m0 1h3m0 1h4m0 1h4m0 1h4m0 1h4m0 1h4m0 1h4m0 1h4m0 1h5m0 1h4m0 1h5m0 1h5m0 1h5m0 1h5m0 1h5m0 1h6m0 1h6m0 1h6m0 1h7m0 1h8m0 1h9m0 1h10m0 1h12m0 1h17m0 1h59m0-1h16m0-1h12m0-1h10m0-1h10m0-1h8m0-1h8m0-1h7m0-1h8m0-1h7m0-1h6m0-1h7m0-1h6m0-1h6m0-1h6m0-1h6m0-1h6m0-1h6m0-1h6m0-1h5m0-1h6m0-1h5m0-1h5m0-1h6m0-1h5m0-1h5m0-1h5m0-1h5m0-1h5m0-1h5m0-1h5m0-1h5m0-1h5m0-1h5m0-1h4m0-1h5m0-1h5m0-1h5m0-1h4m0-1h5m0-1h4m0-1h5m0-1h5m0-1h4m0-1h4m0-1h5m0-1h4m0-1h5m0-1h4m0-1h4m0-1h4m0-1h5m0-1h4m0-1h4m0-1h4m0-1h4m0-1h5m0-1h4m0-1h4m0-1h4m0-1h4m0-1h4m0-1h4m0-1h5m0-1h4m0-1h4m0-1h4m0-1h4m0-1h4m0-1h4m0-1h4m0-1h4m0-1h4m0-1h4m0-1h5m0-1h4m0-1h4m0-1h4m0-1h4m0-1h4m0-1h4m0-1h4m0-1h4m0-1h4m0-1h4m0-1h5m0-1h4m0-1h4m0-1h4m0-1h4m0-1h4m0-1h4m0-1h4m0-1h5m0-1h4m0-1h4m0-1h4m0-1h4m0-1h5m0-1h4m0-1h4m0-1h4m0-1h4m0-1h5m0-1h4m0-1h4m0-1h5m0-1h4m0-1h4m0-1h5m0-1h4m0-1h4m0-1h5m0-1h4m0-1h5m0-1h4m0-1h5m0-1h4m0-1h5m0-1h4m0-1h5m0-1h5m0-1h5m0-1h4m0-1h5m0-1h5m0-1h5m0-1h5m0-1h5m0-1h5m0-1h5m0-1h5m0-1h6m0-1h5m0-1h6m0-1h5m0-1h6m0-1h6m0-1h6m0-1h6m0-1h6m0-1h7m0-1h6m0-1h7m0-1h7m0-1h8m0-1h8m0-1h8m0-1h9m0-1h10m0-1h11m0-1h14M285 138.5h4m0-1h10m0-1h12m0-1h20m0-1h37m0 1h20m0 1h12m0 1h10m0 1h8m0 1h7m0 1h6m0 1h6m0 1h6m0 1h5m0 1h5m0 1h5m0 1h5m0 1h4m0 1h5m0 1h4m0 1h4m0 1h4m0 1h4m0 1h3m0 1h4m0 1h4m0 1h3m0 1h4m0 1h3m0 1h4m0 1h3m0 1h3m0 1h4m0 1h3m0 1h3m0 1h3m0 1h3m0 1h3m0 1h3m0 1h3m0 1h3m0 1h3m0 1h3m0 1h2m0 1h3m0 1h3m0 1h3m0 1h2m0 1h3m0 1h3m0 1h2m0 1h3m0 1h2m0 1h3m0 1h3m0 1h2m0 1h3m0 1h2m0 1h3m0 1h2m0 1h3m0 1h3m0 1h2m0 1h3m0 1h2m0 1h2m0 1h3m0 1h2m0 1h3m0 1h2m0 1h3m0 1h2m0 1h3m0 1h2m0 1h2m0 1h3m0 1h2m0 1h3m0 1h2m0 1h2m0 1h3m0 1h2m0 1h3m0 1h2m0 1h2m0 1h3m0 1h2m0 1h3m0 1h2m0 1h3m0 1h2m0 1h2m0 1h3m0 1h2m0 1h3m0 1h2m0 1h3m0 1h2m0 1h2m0 1h3m0 1h2m0 1h3m0 1h2m0 1h3m0 1h2m0 1h3m0 1h2m0 1h2m0 1h3m0 1h2m0 1h3m0 1h2m0 1h3m0 1h2m0 1h3m0 1h3m0 1h2m0 1h3m0 1h2m0 1h3m0 1h2m0 1h3m0 1h3m0 1h2m0 1h3m0 1h3m0 1h2m0 1h3m0 1h3m0 1h2m0 1h3m0 1h3m0 1h3m0 1h3m0 1h3m0 1h2m0 1h3m0 1h3m0 1h3m0 1h3m0 1h3m0 1h4m0 1h3m0 1h3m0 1h3m0 1h4m0 1h3m0 1h3m0 1h4m0 1h4m0 1h3m0 1h4m0 1h4m0 1h4m0 1h4m0 1h4m0 1h4m0 1h5m0 1h5m0 1h4m0 1h6m0 1h5m0 1h6m0 1h5m0 1h7m0 1h6m0 1h8m0 1h8m0 1h9m0 1h10m0 1h14m0 1h66m0-1h14m0-1h10m0-1h10m0-1h8m0-1h8m0-1h7m0-1h7m0-1h7m0-1h6m0-1h6m0-1h7m0-1h5m0-1h6m0-1h6m0-1h6m0-1h5m0-1h6m0-1h5m0-1h5m0-1h5m0-1h6m0-1h5m0-1h5m0-1h5m0-1h5m0-1h4m0-1h5m0-1h5m0-1h5m0-1h4m0-1h5m0-1h5m0-1h4m0-1h5m0-1h4m0-1h4m0-1h5m0-1h4m0-1h4m0-1h5m0-1h4m0-1h4m0-1h4m0-1h4m0-1h5m0-1h4m0-1h4m0-1h4m0-1h4m0-1h4m0-1h4m0-1h4m0-1h4m0-1h3m0-1h4m0-1h4m0-1h4m0-1h4m0-1h4m0-1h4m0-1h4m0-1h3m0-1h4m0-1h4m0-1h4m0-1h4m0-1h4m0-1h4m0-1h3m0-1h4m0-1h4m0-1h4m0-1h4m0-1h4m0-1h3m0-1h4m0-1h4m0-1h4m0-1h4m0-1h3m0-1h4m0-1h4m0-1h4m0-1h4m0-1h4m0-1h3m0-1h4m0-1h4m0-1h4m0-1h4m0-1h4m0-1h4m0-1h3m0-1h4m0-1h4m0-1h4m0-1h4m0-1h4m0-1h4m0-1h4m0-1h4m0-1h4m0-1h4m0-1h4m0-1h4m0-1h4m0-1h4m0-1h3m0-1h4m0-1h4m0-1h5m0-1h4m0-1h4m0-1h4m0-1h4m0-1h4m0-1h4m0-1h4m0-1h4m0-1h4m0-1h4m0-1h4m0-1h5m0-1h4m0-1h4m0-1h4m0-1h4m0-1h5m0-1h4m0-1h4m0-1h5m0-1h4m0-1h4m0-1h5m0-1h4m0-1h5m0-1h4m0-1h5m0-1h5m0-1h4m0-1h5m0-1h5m0-1h5m0-1h5m0-1h5m0-1h5m0-1h5m0-1h5m0-1h6m0-1h5m0-1h6m0-1h6m0-1h5m0-1h6m0-1h6m0-1h7m0-1h6m0-1h7m0-1h7m0-1h7m0-1h8m0-1h8m0-1h5M285 135.5h1m0-1h8m0-1h8m0-1h9m0-1h10m0-1h14m0-1h22m0-1h36m0 1h18m0 1h11m0 1h9m0 1h8m0 1h7m0 1h7m0 1h6m0 1h5m0 1h5m0 1h5m0 1h5m0 1h4m0 1h4m0 1h4m0 1h4m0 1h4m0 1h3m0 1h4m0 1h3m0 1h4m0 1h3m0 1h3m0 1h3m0 1h4m0 1h3m0 1h3m0 1h3m0 1h3m0 1h3m0 1h3m0 1h3m0 1h2m0 1h3m0 1h3m0 1h3m0 1h3m0 1h2m0 1h3m0 1h2m0 1h3m0 1h3m0 1h2m0 1h3m0 1h2m0 1h3m0 1h2m0 1h3m0 1h2m0 1h3m0 1h2m0 1h2m0 1h3m0 1h2m0 1h2m0 1h3m0 1h2m0 1h2m0 1h3m0 1h2m0 1h2m0 1h3m0 1h2m0 1h2m0 1h2m0 1h3m0 1h2m0 1h2m0 1h2m0 1h2m0 1h3m0 1h2m0 1h2m0 1h2m0 1h3m0 1h2m0 1h2m0 1h2m0 1h2m0 1h3m0 1h2m0 1h2m0 1h2m0 1h2m0 1h3m0 1h2m0 1h2m0 1h2m0 1h2m0 1h3m0 1h2m0 1h2m0 1h2m0 1h2m0 1h3m0 1h2m0 1h2m0 1h2m0 1h3m0 1h2m0 1h2m0 1h2m0 1h2m0 1h3m0 1h2m0 1h2m0 1h2m0 1h3m0 1h2m0 1h2m0 1h2m0 1h3m0 1h2m0 1h2m0 1h2m0 1h3m0 1h2m0 1h2m0 1h3m0 1h2m0 1h2m0 1h3m0 1h2m0 1h2m0 1h3m0 1h2m0 1h2m0 1h3m0 1h2m0 1h3m0 1h2m0 1h3m0 1h2m0 1h3m0 1h2m0 1h3m0 1h3m0 1h2m0 1h3m0 1h2m0 1h3m0 1h3m0 1h3m0 1h2m0 1h3m0 1h3m0 1h3m0 1h3m0 1h3m0 1h3m0 1h3m0 1h3m0 1h4m0 1h3m0 1h3m0 1h4m0 1h3m0 1h4m0 1h4m0 1h3m0 1h4m0 1h4m0 1h4m0 1h5m0 1h4m0 1h5m0 1h5m0 1h5m0 1h5m0 1h5m0 1h6m0 1h6m0 1h7m0 1h7m0 1h8m0 1h9m0 1h11m0 1h14m0 1h57m0-1h14m0-1h10m0-1h9m0-1h8m0-1h8m0-1h7m0-1h6m0-1h7m0-1h6m0-1h6m0-1h6m0-1h6m0-1h5m0-1h6m0-1h5m0-1h5m0-1h6m0-1h5m0-1h5m0-1h5m0-1h5m0-1h5m0-1h5m0-1h4m0-1h5m0-1h5m0-1h4m0-1h5m0-1h5m0-1h4m0-1h4m0-1h5m0-1h4m0-1h5m0-1h4m0-1h4m0-1h4m0-1h5m0-1h4m0-1h4m0-1h4m0-1h4m0-1h4m0-1h4m0-1h4m0-1h4m0-1h4m0-1h4m0-1h4m0-1h3m0-1h4m0-1h4m0-1h4m0-1h4m0-1h3m0-1h4m0-1h4m0-1h4m0-1h3m0-1h4m0-1h4m0-1h3m0-1h4m0-1h4m0-1h3m0-1h4m0-1h4m0-1h3m0-1h4m0-1h4m0-1h3m0-1h4m0-1h3m0-1h4m0-1h4m0-1h3m0-1h4m0-1h4m0-1h3m0-1h4m0-1h3m0-1h4m0-1h4m0-1h3m0-1h4m0-1h3m0-1h4m0-1h4m0-1h3m0-1h4m0-1h4m0-1h3m0-1h4m0-1h4m0-1h3m0-1h4m0-1h4m0-1h3m0-1h4m0-1h4m0-1h3m0-1h4m0-1h4m0-1h3m0-1h4m0-1h4m0-1h4m0-1h3m0-1h4m0-1h4m0-1h4m0-1h3m0-1h4m0-1h4m0-1h4m0-1h3m0-1h4m0-1h4m0-1h4m0-1h4m0-1h4m0-1h4m0-1h3m0-1h4m0-1h4m0-1h4m0-1h4m0-1h4m0-1h4m0-1h4m0-1h4m0-1h4m0-1h4m0-1h4m0-1h5m0-1h4m0-1h4m0-1h4m0-1h4m0-1h4m0-1h5m0-1h4m0-1h4m0-1h5m0-1h4m0-1h4m0-1h5m0-1h4m0-1h5m0-1h4m0-1h5m0-1h4m0-1h5m0-1h5m0-1h4m0-1h5m0-1h5m0-1h5m0-1h5m0-1h5m0-1h6m0-1h5m0-1h5m0-1h6m0-1h6m0-1h6m0-1h6m0-1h6m0-1h6m0-1h7m0-1h6M285 133.5h2m0-1h7m0-1h7m0-1h8m0-1h9m0-1h10m0-1h13m0-1h19m0-1h42m0 1h16m0 1h11m0 1h9m0 1h8m0 1h7m0 1h6m0 1h6m0 1h5m0 1h5m0 1h5m0 1h4m0 1h4m0 1h4m0 1h4m0 1h4m0 1h3m0 1h4m0 1h3m0 1h4m0 1h3m0 1h3m0 1h3m0 1h3m0 1h4m0 1h3m0 1h3m0 1h3m0 1h3m0 1h3m0 1h2m0 1h3m0 1h3m0 1h3m0 1h3m0 1h2m0 1h3m0 1h3m0 1h2m0 1h3m0 1h2m0 1h3m0 1h2m0 1h3m0 1h2m0 1h3m0 1h2m0 1h3m0 1h2m0 1h2m0 1h3m0 1h2m0 1h2m0 1h3m0 1h2m0 1h2m0 1h2m0 1h3m0 1h2m0 1h2m0 1h2m0 1h3m0 1h2m0 1h2m0 1h2m0 1h2m0 1h2m0 1h3m0 1h2m0 1h2m0 1h2m0 1h2m0 1h2m0 1h2m0 1h3m0 1h2m0 1h2m0 1h2m0 1h2m0 1h2m0 1h2m0 1h2m0 1h3m0 1h2m0 1h2m0 1h2m0 1h2m0 1h2m0 1h2m0 1h2m0 1h2m0 1h2m0 1h3m0 1h2m0 1h2m0 1h2m0 1h2m0 1h2m0 1h2m0 1h2m0 1h2m0 1h3m0 1h2m0 1h2m0 1h2m0 1h2m0 1h2m0 1h2m0 1h2m0 1h3m0 1h2m0 1h2m0 1h2m0 1h2m0 1h2m0 1h3m0 1h2m0 1h2m0 1h2m0 1h2m0 1h2m0 1h3m0 1h2m0 1h2m0 1h2m0 1h3m0 1h2m0 1h2m0 1h2m0 1h3m0 1h2m0 1h2m0 1h3m0 1h2m0 1h3m0 1h2m0 1h2m0 1h3m0 1h2m0 1h3m0 1h2m0 1h3m0 1h2m0 1h3m0 1h2m0 1h3m0 1h3m0 1h2m0 1h3m0 1h3m0 1h3m0 1h2m0 1h3m0 1h3m0 1h3m0 1h3m0 1h3m0 1h3m0 1h4m0 1h3m0 1h3m0 1h4m0 1h3m0 1h4m0 1h3m0 1h4m0 1h4m0 1h4m0 1h4m0 1h5m0 1h4m0 1h5m0 1h4m0 1h5m0 1h6m0 1h5m0 1h6m0 1h7m0 1h7m0 1h7m0 1h9m0 1h10m0 1h14m0 1h25m0 1h11m0-1h26m0-1h13m0-1h10m0-1h9m0-1h8m0-1h7m0-1h7m0-1h7m0-1h6m0-1h6m0-1h6m0-1h5m0-1h6m0-1h5m0-1h6m0-1h5m0-1h5m0-1h5m0-1h6m0-1h4m0-1h5m0-1h5m0-1h5m0-1h5m0-1h4m0-1h5m0-1h4m0-1h5m0-1h4m0-1h5m0-1h4m0-1h4m0-1h4m0-1h5m0-1h4m0-1h4m0-1h4m0-1h4m0-1h4m0-1h4m0-1h4m0-1h4m0-1h4m0-1h4m0-1h4m0-1h4m0-1h3m0-1h4m0-1h4m0-1h4m0-1h3m0-1h4m0-1h4m0-1h4m0-1h3m0-1h4m0-1h4m0-1h3m0-1h4m0-1h3m0-1h4m0-1h4m0-1h3m0-1h4m0-1h4m0-1h3m0-1h4m0-1h3m0-1h4m0-1h3m0-1h4m0-1h4m0-1h3m0-1h4m0-1h3m0-1h4m0-1h3m0-1h4m0-1h4m0-1h3m0-1h4m0-1h3m0-1h4m0-1h3m0-1h4m0-1h4m0-1h3m0-1h4m0-1h3m0-1h4m0-1h3m0-1h4m0-1h4m0-1h3m0-1h4m0-1h3m0-1h4m0-1h4m0-1h3m0-1h4m0-1h3m0-1h4m0-1h4m0-1h3m0-1h4m0-1h3m0-1h4m0-1h4m0-1h3m0-1h4m0-1h3m0-1h4m0-1h4m0-1h3m0-1h4m0-1h4m0-1h3m0-1h4m0-1h4m0-1h4m0-1h3m0-1h4m0-1h4m0-1h4m0-1h3m0-1h4m0-1h4m0-1h4m0-1h4m0-1h4m0-1h4m0-1h3m0-1h4m0-1h4m0-1h4m0-1h4m0-1h4m0-1h4m0-1h4m0-1h4m0-1h5m0-1h4m0-1h4m0-1h4m0-1h4m0-1h4m0-1h4m0-1h5m0-1h4m0-1h4m0-1h4m0-1h5m0-1h4m0-1h4m0-1h5m0-1h4m0-1h5m0-1h4m0-1h5m0-1h4m0-1h5m0-1h5m0-1h5m0-1h5m0-1h5m0-1h5m0-1h5m0-1h6m0-1h5m0-1h6m0-1h5m0-1h6m0-1h6m0-1h6m0-1h6m0-1h5"/></g><g clip-path="url(#cp)"><path fill="none" stroke="#ffff00" stroke-width="1" shape-rendering="crispEdges" d="M285 480.5h14m0-1h52m0-1h89m0-1h88m0 1h91m0 1h55m0 1h44m0 1h40m0 1h38m0 1h37m0 1h36m0 1h37m0 1h38m0 1h41m0 1h44m0 1h53m0 1h72m0 1h201m0-1h69m0-1h49m0-1h42m0-1h38m0-1h36m0-1h34m0-1h34m0-1h34m0-1h36m0-1h38m0-1h29M285 479.5h3m0-1h38m0-1h47m0-1h220m0 1h49m0 1h40m0 1h34m0 1h32m0 1h31m0 1h29m0 1h30m0 1h29m0 1h29m0 1h30m0 1h32m0 1h33m0 1h37m0 1h41m0 1h50m0 1h80m0 1h118m0-1h76m0-1h47m0-1h38m0-1h33m0-1h31m0-1h29m0-1h27m0-1h27m0-1h27m0-1h27m0-1h27m0-1h28m0-1h30m0-1h30M285 477.5h15m0-1h31m0-1h37m0-1h55m0-1h114m0 1h58m0 1h38m0 1h33m0 1h28m0 1h27m0 1h25m0 1h24m0 1h24m0 1h23m0 1h24m0 1h23m0 1h24m0 1h24m0 1h24m0 1h26m0 1h28m0 1h29m0 1h32m0 1h36m0 1h44m0 1h66m0 1h128m0-1h62m0-1h41m0-1h33m0-1h29m0-1h26m0-1h24m0-1h23m0-1h22m0-1h21m0-1h22m0-1h20m0-1h21m0-1h21m0-1h22m0-1h22m0-1h23m0-1h25m0-1h12M285 475.5h12m0-1h23m0-1h26m0-1h32m0-1h48m0-1h104m0 1h49m0 1h33m0 1h28m0 1h24m0 1h23m0 1h21m0 1h21m0 1h19m0 1h19m0 1h19m0 1h19m0 1h19m0 1h18m0 1h19m0 1h19m0 1h19m0 1h20m0 1h20m0 1h21m0 1h22m0 1h24m0 1h24m0 1h27m0 1h30m0 1h35m0 1h45m0 1h195m0-1h41m0-1h31m0-1h26m0-1h24m0-1h21m0-1h20m0-1h19m0-1h18m0-1h18m0-1h17m0-1h17m0-1h16m0-1h16m0-1h17m0-1h16m0-1h16m0-1h17m0-1h17m0-1h18m0-1h18m0-1h20m0-1h9M285 473.5h1m0-1h16m0-1h18m0-1h20m0-1h23m0-1h28m0-1h45m0-1h77m0 1h46m0 1h30m0 1h24m0 1h21m0 1h20m0 1h18m0 1h17m0 1h17m0 1h16m0 1h15m0 1h16m0 1h15m0 1h15m0 1h15m0 1h14m0 1h15m0 1h15m0 1h15m0 1h16m0 1h15m0 1h16m0 1h16m0 1h17m0 1h17m0 1h18m0 1h18m0 1h20m0 1h20m0 1h22m0 1h24m0 1h27m0 1h30m0 1h38m0 1h61m0 1h80m0-1h57m0-1h33m0-1h27m0-1h22m0-1h20m0-1h19m0-1h17m0-1h16m0-1h15m0-1h15m0-1h14m0-1h13m0-1h14m0-1h13m0-1h13m0-1h13m0-1h12m0-1h13m0-1h13m0-1h13m0-1h12m0-1h13m0-1h13m0-1h14m0-1h14m0-1h14m0-1h15m0-1h15M285 469.5h10m0-1h13m0-1h14m0-1h15m0-1h17m0-1h20m0-1h24m0-1h38m0-1h69m0 1h40m0 1h25m0 1h21m0 1h18m0 1h17m0 1h15m0 1h15m0 1h14m0 1h13m0 1h13m0 1h13m0 1h12m0 1h12m0 1h12m0 1h12m0 1h12m0 1h12m0 1h12m0 1h12m0 1h12m0 1h12m0 1h12m0 1h12m0 1h12m0 1h13m0 1h13m0 1h13m0 1h13m0 1h14m0 1h14m0 1h14m0 1h15m0 1h16m0 1h16m0 1h17m0 1h17m0 1h19m0 1h20m0 1h22m0 1h25m0 1h28m0 1h34m0 1h56m0 1h74m0-1h50m0-1h30m0-1h23m0-1h20m0-1h18m0-1h16m0-1h14m0-1h14m0-1h13m0-1h13m0-1h12m0-1h11m0-1h11m0-1h11m0-1h11m0-1h10m0-1h11m0-1h10m0-1h10m0-1h10m0-1h10m0-1h9m0-1h10m0-1h10m0-1h10m0-1h10m0-1h10m0-1h10m0-1h10m0-1h10m0-1h11m0-1h11m0-1h11m0-1h11m0-1h12m0-1h3M285 465.5h6m0-1h9m0-1h10m0-1h11m0-1h12m0-1h12m0-1h14m0-1h15m0-1h18m0-1h25m0-1h100m0 1h26m0 1h19m0 1h17m0 1h15m0 1h13m0 1h13m0 1h12m0 1h11m0 1h11m0 1h11m0 1h10m0 1h10m0 1h10m0 1h10m0 1h9m0 1h10m0 1h9m0 1h10m0 1h9m0 1h9m0 1h10m0 1h9m0 1h10m0 1h9m0 1h10m0 1h9m0 1h10m0 1h10m0 1h9m0 1h11m0 1h10m0 1h10m0 1h11m0 1h10m0 1h11m0 1h12m0 1h11m0 1h12m0 1h12m0 1h12m0 1h13m0 1h14m0 1h14m0 1h14m0 1h15m0 1h16m0 1h17m0 1h17m0 1h19m0 1h21m0 1h22m0 1h26m0 1h33m0 1h52m0 1h61m0-1h47m0-1h27m0-1h20m0-1h18m0-1h15m0-1h14m0-1h13m0-1h12m0-1h11m0-1h11m0-1h10m0-1h10m0-1h9m0-1h10m0-1h9m0-1h8m0-1h9m0-1h8m0-1h8m0-1h8m0-1h8m0-1h8m0-1h8m0-1h8m0-1h7m0-1h8m0-1h7m0-1h8m0-1h8m0-1h7m0-1h8m0-1h7m0-1h8m0-1h7m0-1h8m0-1h8m0-1h8m0-1h7m0-1h9m0-1h8m0-1h8m0-1h9m0-1h8m0-1h9m0-1h5M285 463.5h8m0-1h20m0-1h17m0-1h12m0-1h10m0-1h8m0-1h9m0-1h8m0-1h7m0-1h7m0-1h7m0-1h7m0-1h7m0-1h7m0-1h10m0-1h10m0-1h11m0-1h13m0-1h57m0 1h19m0 1h31m0 1h14m0 1h12m0 1h12m0 1h11m0 1h11m0 1h11m0 1h11m0 1h11m0 1h11m0 1h10m0 1h10m0 1h10m0 1h10m0 1h9m0 1h9m0 1h9m0 1h8m0 1h9m0 1h8m0 1h8m0 1h9m0 1h8m0 1h9m0 1h8m0 1h9m0 1h9m0 1h9m0 1h9m0 1h10m0 1h11m0 1h9m0 1h8m0 1h6m0 1h5m0 1h4m0 1h5m0 1h4m0 1h4m0 1h5m0 1h5m0 1h5m0 1h6m0 1h6m0 1h6m0 1h6m0 1h6m0 1h6m0 1h5m0 1h6m0 1h5m0 1h5m0 1h5m0 1h6m0 1h7m0 1h6m0 1h7m0 1h6m0 1h7m0 1h6m0 1h8m0 1h8m0 1h10m0 1h12m0 1h15m0 1h17m0 1h28m0 1h34m0 1h23m0 1h19m0 1h69m0-1h72m0-1h38m0-1h27m0-1h18m0-1h15m0-1h14m0-1h12m0-1h11m0-1h12m0-1h11m0-1h9m0-1h9m0-1h9m0-1h8m0-1h7m0-1h8m0-1h7m0-1h7m0-1h7m0-1h7m0-1h6m0-1h7m0-1h7m0-1h7m0-1h7m0-1h7m0-1h7m0-1h7m0-1h6m0-1h7m0-1h6m0-1h7m0-1h7m0-1h7m0-1h7m0-1h8m0-1h9m0-1h8m0-1h8m0-1h8m0-1h7m0-1h6m0-1h5m0-1h4m0-1h4m0-1h4m0-1h5m0-1h4m0-1h4m0-1h4m0-1h5m0-1h5m0-1h7m0-1h4M285 462.5h3m0-1h4m0-1h5m0-1h5m0-1h6m0-1h6m0-1h5m0-1h6m0-1h5m0-1h6m0-1h5m0-1h5m0-1h6m0-1h5m0-1h5m0-1h6m0-1h5m0-1h5m0-1h6m0-1h5m0-1h6m0-1h6m0-1h5m0-1h6m0-1h5m0-1h6m0-1h5m0-1h4m0-1h5m0-1h7m0-1h20m0-1h12m0-1h21m0-1h97m0 1h14m0 1h11m0 1h10m0 1h10m0 1h10m0 1h9m0 1h8m0 1h8m0 1h7m0 1h8m0 1h8m0 1h7m0 1h8m0 1h7m0 1h7m0 1h7m0 1h6m0 1h6m0 1h7m0 1h5m0 1h6m0 1h6m0 1h5m0 1h5m0 1h6m0 1h5m0 1h5m0 1h5m0 1h6m0 1h5m0 1h4m0 1h5m0 1h5m0 1h5m0 1h5m0 1h5m0 1h5m0 1h5m0 1h6m0 1h5m0 1h5m0 1h5m0 1h5m0 1h5m0 1h4m0 1h4m0 1h4m0 1h3m0 1h3m0 1h4m0 1h3m0 1h3m0 1h4m0 1h3m0 1h4m0 1h3m0 1h3m0 1h3m0 1h3m0 1h3m0 1h4m0 1h3m0 1h3m0 1h3m0 1h3m0 1h4m0 1h4m0 1h3m0 1h5m0 1h4m0 1h4m0 1h5m0 1h5m0 1h5m0 1h4m0 1h5m0 1h5m0 1h6m0 1h4m0 1h5m0 1h5m0 1h5m0 1h5m0 1h6m0 1h7m0 1h8m0 1h7m0 1h9m0 1h13m0 1h23m0 1h23m0 1h22m0 1h22m0 1h18m0 1h20m0 1h56m0 1h110m0-1h44m0-1h23m0-1h18m0-1h16m0-1h15m0-1h14m0-1h12m0-1h10m0-1h10m0-1h9m0-1h9m0-1h8m0-1h8m0-1h7m0-1h8m0-1h7m0-1h6m0-1h7m0-1h6m0-1h7m0-1h6m0-1h5m0-1h5m0-1h5m0-1h4m0-1h5m0-1h4m0-1h4m0-1h4m0-1h5m0-1h4m0-1h4m0-1h5m0-1h4m0-1h4m0-1h5m0-1h4m0-1h4m0-1h4m0-1h4m0-1h4m0-1h4m0-1h4m0-1h4m0-1h4m0-1h4m0-1h3m0-1h4m0-1h3m0-1h3m0-1h4m0-1h3m0-1h3m0-1h3m0-1h3m0-1h3m0-1h3m0-1h4m0-1h3m0-1h3m0-1h4m0-1h4m0-1h4m0-1h2M285 481.5h2m0-1h2m0-1h3m0-1h2m0-1h3m0-1h2m0-1h3m0-1h2m0-1h2m0-1h3m0-1h2m0-1h3m0-1h2m0-1h2m0-1h3m0-1h2m0-1h3m0-1h3m0-1h2m0-1h3m0-1h3m0-1h2m0-1h3m0-1h3m0-1h2m0-1h3m0-1h3m0-1h3m0-1h3m0-1h3m0-1h3m0-1h3m0-1h3m0-1h3m0-1h4m0-1h4m0-1h4m0-1h4m0-1h4m0-1h5m0-1h4m0-1h5m0-1h5m0-1h4m0-1h5m0-1h4m0-1h5m0-1h4m0-1h4m0-1h4m0-1h4m0-1h4m0-1h3m0-1h3m0-1h3m0-1h4m0-1h3m0-1h4m0-1h3m0-1h4m0-1h3m0-1h4m0-1h3m0-1h3m0-1h3m0-1h3m0-1h4m0-1h3m0-1h5m0-1h5m0-1h6m0-1h7m0-1h11m0-1h15m0-1h68m0 1h21m0 1h11m0 1h9m0 1h7m0 1h7m0 1h7m0 1h7m0 1h6m0 1h6m0 1h6m0 1h6m0 1h5m0 1h6m0 1h5m0 1h5m0 1h5m0 1h5m0 1h4m0 1h5m0 1h4m0 1h4m0 1h5m0 1h4m0 1h4m0 1h4m0 1h4m0 1h4m0 1h3m0 1h4m0 1h4m0 1h4m0 1h4m0 1h3m0 1h4m0 1h4m0 1h3m0 1h4m0 1h3m0 1h4m0 1h3m0 1h3m0 1h4m0 1h3m0 1h4m0 1h3m0 1h4m0 1h3m0 1h3m0 1h4m0 1h3m0 1h3m0 1h3m0 1h4m0 1h3m0 1h3m0 1h3m0 1h2m0 1h3m0 1h3m0 1h3m0 1h3m0 1h2m0 1h3m0 1h3m0 1h2m0 1h3m0 1h2m0 1h3m0 1h2m0 1h2m0 1h2m0 1h2m0 1h2m0 1h2m0 1h2m0 1h2m0 1h2m0 1h2m0 1h2m0 1h2m0 1h1m0 1h2m0 1h3m0 1h2m0 1h2m0 1h3m0 1h3m0 1h4m0 1h5m0 1h5m0 1h7m0 1h6m0 1h5m0 1h4m0 1h4m0 1h4m0 1h3m0 1h5m0 1h4m0 1h4m0 1h5m0 1h5m0 1h4m0 1h5m0 1h5m0 1h6m0 1h5m0 1h6m0 1h7m0 1h6m0 1h6m0 1h6m0 1h6m0 1h6m0 1h8m0 1h8m0 1h10m0 1h11m0 1h11m0 1h13m0 1h12m0 1h12m0 1h13m0 1h13m0 1h17m0 1h16m0 1h17m0 1h18m0 1h22m0 1h137m0-1h29m0-1h23m0-1h22m0-1h17m0-1h15m0-1h13m0-1h12m0-1h11m0-1h10m0-1h10m0-1h10m0-1h9m0-1h9m0-1h8m0-1h7m0-1h7m0-1h6m0-1h7m0-1h6m0-1h5m0-1h6m0-1h5m0-1h6m0-1h5m0-1h4m0-1h5m0-1h5m0-1h4m0-1h4m0-1h4m0-1h4m0-1h4m0-1h4m0-1h3m0-1h4m0-1h3m0-1h3m0-1h3m0-1h3m0-1h3m0-1h3m0-1h3m0-1h2m0-1h3m0-1h3m0-1h2m0-1h3m0-1h2m0-1h3m0-1h2m0-1h3m0-1h3m0-1h2m0-1h3m0-1h2m0-1h2M285 500.5h2m0-1h2m0-1h3m0-1h3m0-1h2m0-1h3m0-1h2m0-1h2m0-1h3m0-1h2m0-1h2m0-1h3m0-1h2m0-1h2m0-1h2m0-1h3m0-1h2m0-1h2m0-1h3m0-1h2m0-1h2m0-1h3m0-1h2m0-1h2m0-1h3m0-1h2m0-1h3m0-1h2m0-1h2m0-1h3m0-1h2m0-1h2m0-1h3m0-1h2m0-1h3m0-1h2m0-1h2m0-1h3m0-1h2m0-1h2m0-1h3m0-1h2m0-1h3m0-1h2m0-1h2m0-1h3m0-1h2m0-1h2m0-1h3m0-1h2m0-1h2m0-1h3m0-1h2m0-1h2m0-1h3m0-1h2m0-1h3m0-1h2m0-1h2m0-1h3m0-1h2m0-1h3m0-1h2m0-1h2m0-1h3m0-1h3m0-1h2m0-1h3m0-1h2m0-1h3m0-1h3m0-1h3m0-1h2m0-1h3m0-1h3m0-1h3m0-1h3m0-1h3m0-1h3m0-1h4m0-1h3m0-1h3m0-1h3m0-1h3m0-1h3m0-1h4m0-1h3m0-1h4m0-1h3m0-1h3m0-1h3m0-1h3m0-1h3m0-1h3m0-1h3m0-1h4m0-1h3m0-1h4m0-1h4m0-1h4m0-1h4m0-1h4m0-1h5m0-1h6m0-1h8m0-1h11m0-1h10m0-1h11m0-1h13m0-1h37m0 1h14m0 1h12m0 1h11m0 1h9m0 1h7m0 1h7m0 1h6m0 1h5m0 1h6m0 1h5m0 1h6m0 1h5m0 1h4m0 1h5m0 1h4m0 1h4m0 1h5m0 1h4m0 1h3m0 1h4m0 1h4m0 1h4m0 1h3m0 1h4m0 1h3m0 1h3m0 1h3m0 1h3m0 1h3m0 1h3m0 1h3m0 1h3m0 1h3m0 1h3m0 1h3m0 1h2m0 1h3m0 1h3m0 1h2m0 1h3m0 1h3m0 1h3m0 1h2m0 1h3m0 1h2m0 1h3m0 1h3m0 1h2m0 1h3m0 1h2m0 1h3m0 1h2m0 1h2m0 1h3m0 1h2m0 1h2m0 1h3m0 1h2m0 1h2m0 1h2m0 1h2m0 1h3m0 1h2m0 1h2m0 1h2m0 1h2m0 1h2m0 1h3m0 1h2m0 1h2m0 1h3m0 1h2m0 1h3m0 1h2m0 1h3m0 1h3m0 1h3m0 1h3m0 1h3m0 1h3m0 1h3m0 1h3m0 1h3m0 1h2m0 1h3m0 1h3m0 1h2m0 1h3m0 1h3m0 1h2m0 1h2m0 1h3m0 1h2m0 1h2m0 1h3m0 1h2m0 1h2m0 1h3m0 1h2m0 1h2m0 1h2m0 1h2m0 1h2m0 1h2m0 1h2m0 1h2m0 1h3m0 1h2m0 1h3m0 1h3m0 1h3m0 1h4m0 1h3m0 1h4m0 1h3m0 1h4m0 1h3m0 1h3m0 1h2m0 1h3m0 1h3m0 1h4m0 1h5m0 1h5m0 1h6m0 1h5m0 1h5m0 1h5m0 1h5m0 1h4m0 1h6m0 1h6m0 1h7m0 1h7m0 1h7m0 1h8m0 1h8m0 1h9m0 1h9m0 1h10m0 1h11m0 1h12m0 1h13m0 1h13m0 1h12m0 1h10m0 1h11m0 1h10m0 1h11m0 1h12m0 1h13m0 1h17m0 1h38m0 1h89m0-1h40m0-1h31m0-1h20m0-1h17m0-1h14m0-1h13m0-1h12m0-1h11m0-1h11m0-1h10m0-1h9m0-1h7m0-1h7m0-1h6m0-1h7m0-1h6m0-1h6m0-1h6m0-1h6m0-1h7m0-1h6m0-1h7m0-1h6m0-1h6m0-1h6m0-1h5m0-1h5m0-1h5m0-1h4m0-1h4m0-1h4m0-1h4m0-1h4m0-1h4m0-1h3m0-1h4m0-1h3m0-1h3m0-1h4m0-1h3m0-1h3m0-1h3m0-1h3m0-1h3m0-1h2M285 512.5h2m0-1h3m0-1h3m0-1h2m0-1h3m0-1h2m0-1h3m0-1h2m0-1h2m0-1h2m0-1h2m0-1h2m0-1h2m0-1h3m0-1h2m0-1h2m0-1h2m0-1h2m0-1h2m0-1h3m0-1h2m0-1h2m0-1h3m0-1h2m0-1h2m0-1h3m0-1h2m0-1h2m0-1h3m0-1h2m0-1h2m0-1h3m0-1h2m0-1h2m0-1h3m0-1h2m0-1h2m0-1h2m0-1h2m0-1h3m0-1h2m0-1h2m0-1h2m0-1h2m0-1h2m0-1h2m0-1h2m0-1h2m0-1h1m0-1h2m0-1h2m0-1h2m0-1h2m0-1h2m0-1h2m0-1h2m0-1h2m0-1h2m0-1h1m0-1h2m0-1h2m0-1h2m0-1h2m0-1h2m0-1h2m0-1h3m0-1h2m0-1h2m0-1h2m0-1h2m0-1h2m0-1h2m0-1h2m0-1h2m0-1h2m0-1h2m0-1h3m0-1h2m0-1h2m0-1h2m0-1h2m0-1h2m0-1h2m0-1h2m0-1h3m0-1h2m0-1h2m0-1h2m0-1h2m0-1h3m0-1h2m0-1h2m0-1h3m0-1h3m0-1h3m0-1h3m0-1h3m0-1h3m0-1h3m0-1h3m0-1h3m0-1h3m0-1h3m0-1h3m0-1h2m0-1h3m0-1h3m0-1h3m0-1h2m0-1h3m0-1h3m0-1h2m0-1h3m0-1h2m0-1h3m0-1h2m0-1h3m0-1h3m0-1h2m0-1h4m0-1h3m0-1h5m0-1h6m0-1h7m0-1h7m0-1h6m0-1h5m0-1h6m0-1h5m0-1h7m0-1h9m0-1h45m0 1h28m0 1h11m0 1h9m0 1h8m0 1h7m0 1h7m0 1h6m0 1h5m0 1h4m0 1h4m0 1h4m0 1h3m0 1h4m0 1h3m0 1h4m0 1h3m0 1h3m0 1h4m0 1h3m0 1h3m0 1h3m0 1h3m0 1h3m0 1h3m0 1h3m0 1h2m0 1h3m0 1h3m0 1h2m0 1h3m0 1h2m0 1h3m0 1h2m0 1h3m0 1h2m0 1h2m0 1h3m0 1h2m0 1h3m0 1h2m0 1h2m0 1h3m0 1h2m0 1h2m0 1h2m0 1h2m0 1h2m0 1h2m0 1h3m0 1h2m0 1h2m0 1h2m0 1h2m0 1h2m0 1h3m0 1h2m0 1h3m0 1h2m0 1h3m0 1h2m0 1h3m0 1h2m0 1h3m0 1h3m0 1h2m0 1h3m0 1h3m0 1h2m0 1h3m0 1h2m0 1h2m0 1h3m0 1h2m0 1h2m0 1h3m0 1h2m0 1h2m0 1h2m0 1h3m0 1h2m0 1h2m0 1h2m0 1h3m0 1h2m0 1h2m0 1h2m0 1h3m0 1h2m0 1h2m0 1h2m0 1h3m0 1h2m0 1h2m0 1h3m0 1h2m0 1h2m0 1h3m0 1h2m0 1h2m0 1h2m0 1h3m0 1h2m0 1h2m0 1h2m0 1h2m0 1h2m0 1h2m0 1h3m0 1h2m0 1h2m0 1h2m0 1h2m0 1h2m0 1h3m0 1h2m0 1h2m0 1h2m0 1h3m0 1h2m0 1h2m0 1h3m0 1h2m0 1h2m0 1h2m0 1h3m0 1h2m0 1h2m0 1h2m0 1h3m0 1h3m0 1h3m0 1h4m0 1h4m0 1h4m0 1h4m0 1h5m0 1h4m0 1h3m0 1h4m0 1h4m0 1h5m0 1h5m0 1h6m0 1h6m0 1h7m0 1h7m0 1h7m0 1h8m0 1h8m0 1h8m0 1h8m0 1h9m0 1h8m0 1h9m0 1h9m0 1h9m0 1h10m0 1h9m0 1h9m0 1h9m0 1h9m0 1h9m0 1h9m0 1h10m0 1h12m0 1h14m0 1h36m0 1h94m0-1h39m0-1h34m0-1h27m0-1h22m0-1h19m0-1h16m0-1h15m0-1h12m0-1h10m0-1h8m0-1h7m0-1h7m0-1h7m0-1h6m0-1h7m0-1h8m0-1h7m0-1h7m0-1h7m0-1h7m0-1h6m0-1h6m0-1h6m0-1h6m0-1h5m0-1h5m0-1h5m0-1h5m0-1h5m0-1h5m0-1h4m0-1h4m0-1h4m0-1h4m0-1h4m0-1h3m0-1h2M285 519.5h3m0-1h3m0-1h3m0-1h3m0-1h2m0-1h3m0-1h2m0-1h3m0-1h2m0-1h3m0-1h2m0-1h2m0-1h2m0-1h3m0-1h2m0-1h3m0-1h2m0-1h3m0-1h2m0-1h3m0-1h3m0-1h2m0-1h3m0-1h3m0-1h3m0-1h3m0-1h2m0-1h3m0-1h3m0-1h2m0-1h3m0-1h3m0-1h2m0-1h2m0-1h3m0-1h2m0-1h2m0-1h2m0-1h2m0-1h2m0-1h2m0-1h2m0-1h1m0-1h2m0-1h2m0-1h2m0-1h2m0-1h1m0-1h2m0-1h2m0-1h2m0-1h1m0-1h2m0-1h2m0-1h2m0-1h1m0-1h2m0-1h2m0-1h2m0-1h2m0-1h2m0-1h2m0-1h2m0-1h2m0-1h2m0-1h3m0-1h2m0-1h2m0-1h2m0-1h2m0-1h2m0-1h2m0-1h2m0-1h1m0-1h2m0-1h2m0-1h2m0-1h1m0-1h2m0-1h2m0-1h2m0-1h1m0-1h2m0-1h2m0-1h1m0-1h2m0-1h2m0-1h1m0-1h2m0-1h1m0-1h2m0-1h2m0-1h1m0-1h2m0-1h1m0-1h2m0-1h1m0-1h2m0-1h1m0-1h2m0-1h2m0-1h1m0-1h2m0-1h2m0-1h2m0-1h3m0-1h2m0-1h2m0-1h3m0-1h3m0-1h3m0-1h2m0-1h3m0-1h3m0-1h3m0-1h3m0-1h2m0-1h3m0-1h3m0-1h2m0-1h3m0-1h2m0-1h3m0-1h2m0-1h3m0-1h2m0-1h3m0-1h2m0-1h3m0-1h3m0-1h3m0-1h3m0-1h3m0-1h3m0-1h3m0-1h4m0-1h4m0-1h3m0-1h4m0-1h3m0-1h4m0-1h4m0-1h4m0-1h4m0-1h5m0-1h6m0-1h14m0-1h45m0-1h4m0 1h21m0 1h10m0 1h9m0 1h8m0 1h7m0 1h6m0 1h5m0 1h4m0 1h4m0 1h3m0 1h4m0 1h3m0 1h4m0 1h3m0 1h3m0 1h3m0 1h3m0 1h3m0 1h3m0 1h3m0 1h3m0 1h3m0 1h2m0 1h3m0 1h2m0 1h2m0 1h3m0 1h2m0 1h2m0 1h3m0 1h2m0 1h2m0 1h2m0 1h2m0 1h3m0 1h2m0 1h2m0 1h2m0 1h2m0 1h3m0 1h2m0 1h2m0 1h2m0 1h2m0 1h2m0 1h2m0 1h2m0 1h2m0 1h3m0 1h2m0 1h2m0 1h2m0 1h2m0 1h2m0 1h2m0 1h2m0 1h3m0 1h2m0 1h2m0 1h2m0 1h3m0 1h2m0 1h2m0 1h3m0 1h2m0 1h3m0 1h2m0 1h2m0 1h3m0 1h2m0 1h2m0 1h3m0 1h2m0 1h2m0 1h3m0 1h2m0 1h2m0 1h3m0 1h2m0 1h2m0 1h3m0 1h2m0 1h2m0 1h2m0 1h3m0 1h2m0 1h2m0 1h2m0 1h3m0 1h2m0 1h2m0 1h2m0 1h2m0 1h2m0 1h2m0 1h2m0 1h2m0 1h2m0 1h2m0 1h2m0 1h3m0 1h2m0 1h2m0 1h2m0 1h2m0 1h2m0 1h2m0 1h2m0 1h2m0 1h2m0 1h2m0 1h3m0 1h2m0 1h2m0 1h2m0 1h2m0 1h2m0 1h2m0 1h2m0 1h2m0 1h2m0 1h2m0 1h2m0 1h1m0 1h2m0 1h2m0 1h2m0 1h2m0 1h2m0 1h2m0 1h2m0 1h2m0 1h2m0 1h2m0 1h2m0 1h3m0 1h2m0 1h2m0 1h3m0 1h3m0 1h2m0 1h3m0 1h3m0 1h3m0 1h3m0 1h3m0 1h3m0 1h4m0 1h3m0 1h4m0 1h3m0 1h5m0 1h5m0 1h5m0 1h6m0 1h6m0 1h6m0 1h7m0 1h7m0 1h7m0 1h8m0 1h7m0 1h7m0 1h8m0 1h8m0 1h8m0 1h8m0 1h9m0 1h9m0 1h9m0 1h8m0 1h9m0 1h8m0 1h9m0 1h9m0 1h9m0 1h11m0 1h11m0 1h15m0 1h22m0 1h28m0 1h71m0-1h41m0-1h32m0-1h23m0-1h18m0-1h16m0-1h15m0-1h15m0-1h14m0-1h15m0-1h13m0-1h12m0-1h11m0-1h10m0-1h9m0-1h7m0-1h8m0-1h6m0-1h7m0-1h6m0-1h6m0-1h6m0-1h6m0-1h6m0-1h5m0-1h6m0-1h6m0-1h5m0-1h5m0-1h5m0-1h4m0-1h5m0-1h4m0-1h3m0-1h2M285 522.5h3m0-1h4m0-1h3m0-1h3m0-1h3m0-1h2m0-1h3m0-1h3m0-1h2m0-1h2m0-1h3m0-1h2m0-1h3m0-1h2m0-1h2m0-1h3m0-1h2m0-1h3m0-1h3m0-1h2m0-1h3m0-1h2m0-1h3m0-1h3m0-1h2m0-1h3m0-1h2m0-1h3m0-1h2m0-1h3m0-1h2m0-1h2m0-1h3m0-1h2m0-1h2m0-1h2m0-1h2m0-1h3m0-1h2m0-1h2m0-1h1m0-1h2m0-1h2m0-1h2m0-1h2m0-1h2m0-1h2m0-1h2m0-1h1m0-1h2m0-1h2m0-1h2m0-1h2m0-1h2m0-1h1m0-1h2m0-1h2m0-1h2m0-1h2m0-1h2m0-1h2m0-1h2m0-1h2m0-1h2m0-1h2m0-1h2m0-1h1m0-1h2m0-1h2m0-1h2m0-1h2m0-1h2m0-1h1m0-1h2m0-1h2m0-1h2m0-1h1m0-1h2m0-1h1m0-1h2m0-1h2m0-1h1m0-1h2m0-1h2m0-1h1m0-1h2m0-1h1m0-1h2m0-1h2m0-1h1m0-1h2m0-1h1m0-1h2m0-1h2m0-1h1m0-1h2m0-1h1m0-1h2m0-1h1m0-1h2m0-1h1m0-1h2m0-1h1m0-1h2m0-1h1m0-1h2m0-1h1m0-1h2m0-1h2m0-1h2m0-1h2m0-1h2m0-1h3m0-1h3m0-1h3m0-1h3m0-1h3m0-1h3m0-1h2m0-1h3m0-1h3m0-1h2m0-1h3m0-1h2m0-1h3m0-1h2m0-1h3m0-1h3m0-1h2m0-1h3m0-1h2m0-1h3m0-1h2m0-1h3m0-1h3m0-1h2m0-1h3m0-1h3m0-1h3m0-1h3m0-1h3m0-1h3m0-1h3m0-1h3m0-1h3m0-1h3m0-1h3m0-1h4m0-1h3m0-1h4m0-1h4m0-1h5m0-1h7m0-1h10m0-1h11m0-1h16m0-1h32m0 1h12m0 1h9m0 1h8m0 1h8m0 1h7m0 1h5m0 1h5m0 1h4m0 1h4m0 1h3m0 1h4m0 1h3m0 1h3m0 1h4m0 1h3m0 1h3m0 1h3m0 1h3m0 1h3m0 1h3m0 1h2m0 1h3m0 1h2m0 1h3m0 1h2m0 1h2m0 1h2m0 1h3m0 1h2m0 1h2m0 1h2m0 1h2m0 1h2m0 1h2m0 1h2m0 1h2m0 1h2m0 1h3m0 1h2m0 1h2m0 1h2m0 1h2m0 1h2m0 1h2m0 1h2m0 1h2m0 1h2m0 1h2m0 1h2m0 1h2m0 1h3m0 1h2m0 1h2m0 1h2m0 1h2m0 1h2m0 1h2m0 1h2m0 1h2m0 1h2m0 1h2m0 1h2m0 1h3m0 1h2m0 1h2m0 1h2m0 1h2m0 1h2m0 1h2m0 1h3m0 1h2m0 1h2m0 1h2m0 1h2m0 1h2m0 1h2m0 1h3m0 1h2m0 1h2m0 1h2m0 1h2m0 1h2m0 1h2m0 1h3m0 1h2m0 1h2m0 1h2m0 1h2m0 1h2m0 1h2m0 1h3m0 1h2m0 1h2m0 1h2m0 1h2m0 1h2m0 1h3m0 1h2m0 1h2m0 1h3m0 1h2m0 1h2m0 1h2m0 1h3m0 1h2m0 1h2m0 1h2m0 1h2m0 1h2m0 1h2m0 1h2m0 1h2m0 1h1m0 1h2m0 1h2m0 1h2m0 1h2m0 1h1m0 1h2m0 1h2m0 1h2m0 1h2m0 1h2m0 1h2m0 1h2m0 1h2m0 1h2m0 1h2m0 1h2m0 1h2m0 1h2m0 1h2m0 1h2m0 1h2m0 1h2m0 1h2m0 1h2m0 1h2m0 1h2m0 1h2m0 1h2m0 1h3m0 1h2m0 1h3m0 1h2m0 1h3m0 1h3m0 1h3m0 1h3m0 1h2m0 1h3m0 1h3m0 1h3m0 1h3m0 1h3m0 1h3m0 1h4m0 1h5m0 1h4m0 1h5m0 1h6m0 1h6m0 1h6m0 1h6m0 1h7m0 1h7m0 1h7m0 1h7m0 1h7m0 1h6m0 1h6m0 1h6m0 1h7m0 1h6m0 1h8m0 1h7m0 1h9m0 1h8m0 1h9m0 1h8m0 1h9m0 1h9m0 1h10m0 1h11m0 1h12m0 1h18m0 1h39m0 1h96m0-1h55m0-1h22m0-1h16m0-1h15m0-1h13m0-1h13m0-1h14m0-1h14m0-1h16m0-1h17m0-1h14m0-1h12m0-1h9m0-1h8m0-1h6m0-1h6m0-1h6m0-1h5m0-1h6m0-1h5m0-1h6m0-1h7m0-1h6m0-1h7m0-1h6m0-1h6m0-1h6m0-1h6m0-1h5m0-1h5m0-1h4m0-1h1"/></g><g clip-path="url(#cp)"><path fill="none" stroke="#00ff00" stroke-width="1" shape-rendering="crispEdges" d="M285 727.5h43m0 1h72m0 1h201m0-1h69m0-1h49m0-1h42m0-1h38m0-1h35m0-1h35m0-1h34m0-1h34m0-1h35m0-1h38m0-1h43m0-1h52m0-1h89m0-1h88m0 1h92m0 1h54m0 1h44m0 1h41m0 1h37m0 1h37m0 1h36m0 1h37m0 1h38m0 1h41m0 1h45m0 1h10M285 728.5h30m0 1h50m0 1h79m0 1h118m0-1h76m0-1h48m0-1h38m0-1h33m0-1h31m0-1h29m0-1h27m0-1h27m0-1h27m0-1h26m0-1h28m0-1h28m0-1h30m0-1h32m0-1h38m0-1h47m0-1h220m0 1h49m0 1h40m0 1h35m0 1h32m0 1h30m0 1h30m0 1h29m0 1h29m0 1h29m0 1h30m0 1h32m0 1h33m0 1h37m0 1h12M285 729.5h11m0 1h37m0 1h44m0 1h66m0 1h128m0-1h62m0-1h41m0-1h33m0-1h28m0-1h26m0-1h25m0-1h23m0-1h22m0-1h21m0-1h21m0-1h21m0-1h21m0-1h21m0-1h22m0-1h22m0-1h23m0-1h25m0-1h26m0-1h31m0-1h37m0-1h55m0-1h115m0 1h57m0 1h39m0 1h32m0 1h29m0 1h26m0 1h25m0 1h25m0 1h23m0 1h24m0 1h23m0 1h23m0 1h24m0 1h24m0 1h25m0 1h25m0 1h28m0 1h29m0 1h21M285 731.5h18m0 1h30m0 1h35m0 1h45m0 1h195m0-1h40m0-1h32m0-1h26m0-1h23m0-1h22m0-1h20m0-1h19m0-1h18m0-1h18m0-1h17m0-1h16m0-1h17m0-1h16m0-1h16m0-1h17m0-1h16m0-1h17m0-1h17m0-1h18m0-1h18m0-1h20m0-1h21m0-1h22m0-1h26m0-1h32m0-1h48m0-1h104m0 1h49m0 1h33m0 1h28m0 1h25m0 1h22m0 1h21m0 1h21m0 1h19m0 1h20m0 1h18m0 1h19m0 1h19m0 1h18m0 1h19m0 1h19m0 1h19m0 1h20m0 1h21m0 1h21m0 1h22m0 1h23m0 1h25m0 1h9M285 733.5h13m0 1h24m0 1h27m0 1h30m0 1h38m0 1h61m0 1h80m0-1h57m0-1h33m0-1h26m0-1h23m0-1h20m0-1h18m0-1h17m0-1h16m0-1h16m0-1h14m0-1h14m0-1h14m0-1h14m0-1h13m0-1h13m0-1h13m0-1h12m0-1h13m0-1h13m0-1h12m0-1h13m0-1h13m0-1h13m0-1h14m0-1h13m0-1h15m0-1h15m0-1h15m0-1h17m0-1h18m0-1h19m0-1h23m0-1h29m0-1h45m0-1h76m0 1h46m0 1h30m0 1h24m0 1h21m0 1h20m0 1h18m0 1h17m0 1h17m0 1h16m0 1h15m0 1h16m0 1h15m0 1h15m0 1h15m0 1h15m0 1h14m0 1h15m0 1h16m0 1h15m0 1h15m0 1h16m0 1h16m0 1h17m0 1h17m0 1h18m0 1h19m0 1h19m0 1h21m0 1h9M285 735.5h1m0 1h19m0 1h20m0 1h22m0 1h24m0 1h28m0 1h35m0 1h55m0 1h74m0-1h51m0-1h30m0-1h23m0-1h20m0-1h17m0-1h16m0-1h15m0-1h14m0-1h13m0-1h13m0-1h12m0-1h11m0-1h11m0-1h11m0-1h11m0-1h10m0-1h11m0-1h10m0-1h10m0-1h10m0-1h10m0-1h9m0-1h10m0-1h10m0-1h10m0-1h10m0-1h10m0-1h10m0-1h10m0-1h10m0-1h11m0-1h10m0-1h11m0-1h12m0-1h12m0-1h12m0-1h13m0-1h14m0-1h16m0-1h17m0-1h19m0-1h24m0-1h39m0-1h69m0 1h39m0 1h26m0 1h20m0 1h19m0 1h16m0 1h16m0 1h14m0 1h14m0 1h13m0 1h13m0 1h13m0 1h12m0 1h13m0 1h12m0 1h12m0 1h11m0 1h12m0 1h12m0 1h12m0 1h12m0 1h12m0 1h12m0 1h12m0 1h13m0 1h12m0 1h13m0 1h13m0 1h13m0 1h14m0 1h14m0 1h14m0 1h15m0 1h16m0 1h16m0 1h17m0 1h17M285 739.5h16m0 1h16m0 1h18m0 1h19m0 1h20m0 1h23m0 1h26m0 1h32m0 1h53m0 1h61m0-1h47m0-1h26m0-1h21m0-1h18m0-1h15m0-1h14m0-1h13m0-1h12m0-1h11m0-1h11m0-1h10m0-1h10m0-1h9m0-1h10m0-1h8m0-1h9m0-1h9m0-1h8m0-1h8m0-1h8m0-1h8m0-1h8m0-1h8m0-1h8m0-1h7m0-1h8m0-1h7m0-1h8m0-1h7m0-1h8m0-1h7m0-1h8m0-1h7m0-1h8m0-1h8m0-1h8m0-1h7m0-1h8m0-1h8m0-1h9m0-1h8m0-1h8m0-1h9m0-1h9m0-1h10m0-1h9m0-1h11m0-1h10m0-1h12m0-1h12m0-1h14m0-1h15m0-1h19m0-1h24m0-1h101m0 1h25m0 1h20m0 1h16m0 1h15m0 1h13m0 1h13m0 1h12m0 1h11m0 1h11m0 1h11m0 1h10m0 1h10m0 1h10m0 1h10m0 1h9m0 1h10m0 1h9m0 1h10m0 1h9m0 1h10m0 1h9m0 1h9m0 1h10m0 1h9m0 1h10m0 1h9m0 1h10m0 1h10m0 1h10m0 1h10m0 1h10m0 1h10m0 1h11m0 1h10m0 1h11m0 1h12m0 1h11m0 1h12m0 1h12m0 1h13m0 1h13m0 1h13m0 1h14m0 1h14m0 1h15m0 1h1M285 746.5h9m0 1h10m0 1h12m0 1h14m0 1h18m0 1h28m0 1h34m0 1h23m0 1h19m0 1h69m0-1h72m0-1h38m0-1h27m0-1h18m0-1h15m0-1h13m0-1h13m0-1h11m0-1h12m0-1h10m0-1h10m0-1h9m0-1h9m0-1h7m0-1h8m0-1h7m0-1h8m0-1h7m0-1h7m0-1h6m0-1h7m0-1h7m0-1h7m0-1h7m0-1h7m0-1h7m0-1h7m0-1h6m0-1h7m0-1h7m0-1h6m0-1h7m0-1h7m0-1h7m0-1h7m0-1h8m0-1h9m0-1h8m0-1h8m0-1h8m0-1h7m0-1h6m0-1h4m0-1h5m0-1h4m0-1h4m0-1h4m0-1h4m0-1h5m0-1h4m0-1h5m0-1h5m0-1h7m0-1h11m0-1h20m0-1h17m0-1h12m0-1h10m0-1h9m0-1h8m0-1h8m0-1h8m0-1h6m0-1h7m0-1h7m0-1h7m0-1h7m0-1h10m0-1h10m0-1h12m0-1h12m0-1h57m0 1h19m0 1h31m0 1h14m0 1h12m0 1h12m0 1h11m0 1h11m0 1h11m0 1h11m0 1h11m0 1h11m0 1h11m0 1h10m0 1h9m0 1h10m0 1h9m0 1h9m0 1h9m0 1h9m0 1h8m0 1h8m0 1h8m0 1h9m0 1h8m0 1h9m0 1h8m0 1h9m0 1h9m0 1h9m0 1h9m0 1h10m0 1h11m0 1h10m0 1h7m0 1h6m0 1h5m0 1h5m0 1h4m0 1h4m0 1h4m0 1h5m0 1h5m0 1h6m0 1h5m0 1h6m0 1h6m0 1h7m0 1h5m0 1h6m0 1h6m0 1h5m0 1h5m0 1h5m0 1h6m0 1h6m0 1h6m0 1h6m0 1h7m0 1h6m0 1h7m0 1h6m0 1h8M285 751.5h1m0 1h7m0 1h7m0 1h8m0 1h9m0 1h13m0 1h23m0 1h22m0 1h23m0 1h22m0 1h18m0 1h20m0 1h56m0 1h110m0-1h44m0-1h23m0-1h18m0-1h16m0-1h14m0-1h14m0-1h12m0-1h11m0-1h10m0-1h9m0-1h9m0-1h8m0-1h8m0-1h7m0-1h7m0-1h7m0-1h7m0-1h7m0-1h6m0-1h7m0-1h5m0-1h6m0-1h5m0-1h4m0-1h5m0-1h4m0-1h5m0-1h4m0-1h4m0-1h5m0-1h4m0-1h4m0-1h4m0-1h5m0-1h4m0-1h4m0-1h5m0-1h4m0-1h4m0-1h4m0-1h4m0-1h4m0-1h4m0-1h4m0-1h4m0-1h4m0-1h3m0-1h4m0-1h3m0-1h3m0-1h3m0-1h4m0-1h3m0-1h3m0-1h3m0-1h3m0-1h3m0-1h3m0-1h4m0-1h3m0-1h4m0-1h3m0-1h4m0-1h5m0-1h4m0-1h5m0-1h6m0-1h5m0-1h6m0-1h6m0-1h5m0-1h6m0-1h5m0-1h5m0-1h6m0-1h5m0-1h5m0-1h5m0-1h6m0-1h5m0-1h6m0-1h5m0-1h6m0-1h5m0-1h6m0-1h6m0-1h5m0-1h6m0-1h5m0-1h5m0-1h4m0-1h5m0-1h7m0-1h20m0-1h12m0-1h22m0-1h96m0 1h14m0 1h11m0 1h10m0 1h11m0 1h9m0 1h9m0 1h8m0 1h8m0 1h7m0 1h8m0 1h8m0 1h7m0 1h8m0 1h7m0 1h7m0 1h7m0 1h6m0 1h7m0 1h6m0 1h6m0 1h5m0 1h6m0 1h5m0 1h6m0 1h5m0 1h5m0 1h5m0 1h6m0 1h5m0 1h5m0 1h5m0 1h5m0 1h4m0 1h5m0 1h5m0 1h5m0 1h5m0 1h5m0 1h6m0 1h5m0 1h6m0 1h5m0 1h4m0 1h5m0 1h4m0 1h4m0 1h4m0 1h3m0 1h4m0 1h3m0 1h3m0 1h4m0 1h3m0 1h3m0 1h4m0 1h3m0 1h3m0 1h3m0 1h4m0 1h3m0 1h3m0 1h3m0 1h3m0 1h3m0 1h4m0 1h3m0 1h4m0 1h4m0 1h4m0 1h4m0 1h5m0 1h4m0 1h5m0 1h5m0 1h5m0 1h5m0 1h5m0 1h5m0 1h5m0 1h4m0 1h5m0 1h5m0 1h6m0 1h5M285 750.5h4m0 1h5m0 1h6m0 1h6m0 1h6m0 1h7m0 1h6m0 1h6m0 1h6m0 1h6m0 1h8m0 1h8m0 1h10m0 1h11m0 1h11m0 1h13m0 1h12m0 1h12m0 1h13m0 1h13m0 1h16m0 1h17m0 1h17m0 1h18m0 1h22m0 1h137m0-1h29m0-1h23m0-1h22m0-1h17m0-1h15m0-1h13m0-1h11m0-1h11m0-1h11m0-1h10m0-1h9m0-1h10m0-1h9m0-1h8m0-1h7m0-1h7m0-1h6m0-1h6m0-1h6m0-1h6m0-1h6m0-1h5m0-1h5m0-1h5m0-1h5m0-1h5m0-1h4m0-1h5m0-1h4m0-1h4m0-1h4m0-1h4m0-1h3m0-1h4m0-1h4m0-1h3m0-1h3m0-1h3m0-1h3m0-1h3m0-1h3m0-1h2m0-1h3m0-1h3m0-1h2m0-1h3m0-1h3m0-1h2m0-1h3m0-1h2m0-1h3m0-1h2m0-1h3m0-1h3m0-1h2m0-1h3m0-1h2m0-1h3m0-1h2m0-1h3m0-1h2m0-1h3m0-1h2m0-1h3m0-1h2m0-1h2m0-1h3m0-1h2m0-1h3m0-1h2m0-1h3m0-1h2m0-1h3m0-1h2m0-1h3m0-1h3m0-1h2m0-1h3m0-1h3m0-1h3m0-1h2m0-1h3m0-1h3m0-1h3m0-1h3m0-1h3m0-1h3m0-1h3m0-1h4m0-1h3m0-1h4m0-1h4m0-1h4m0-1h5m0-1h4m0-1h5m0-1h4m0-1h5m0-1h4m0-1h5m0-1h4m0-1h5m0-1h4m0-1h4m0-1h4m0-1h4m0-1h4m0-1h3m0-1h3m0-1h3m0-1h4m0-1h3m0-1h4m0-1h3m0-1h4m0-1h3m0-1h4m0-1h3m0-1h3m0-1h3m0-1h4m0-1h3m0-1h3m0-1h5m0-1h5m0-1h6m0-1h8m0-1h11m0-1h14m0-1h68m0 1h21m0 1h12m0 1h8m0 1h7m0 1h7m0 1h7m0 1h7m0 1h6m0 1h7m0 1h5m0 1h6m0 1h6m0 1h5m0 1h5m0 1h5m0 1h5m0 1h5m0 1h4m0 1h5m0 1h4m0 1h5m0 1h4m0 1h4m0 1h4m0 1h4m0 1h4m0 1h4m0 1h4m0 1h4m0 1h3m0 1h4m0 1h4m0 1h4m0 1h3m0 1h4m0 1h3m0 1h4m0 1h3m0 1h4m0 1h3m0 1h4m0 1h3m0 1h3m0 1h4m0 1h3m0 1h4m0 1h3m0 1h4m0 1h3m0 1h3m0 1h3m0 1h4m0 1h3m0 1h3m0 1h3m0 1h3m0 1h3m0 1h2m0 1h3m0 1h3m0 1h3m0 1h3m0 1h2m0 1h3m0 1h2m0 1h3m0 1h2m0 1h3m0 1h2m0 1h2m0 1h3m0 1h2m0 1h1m0 1h2m0 1h2m0 1h2m0 1h2m0 1h2m0 1h2m0 1h2m0 1h2m0 1h2m0 1h2m0 1h2m0 1h2m0 1h3m0 1h3m0 1h4m0 1h5m0 1h6m0 1h6m0 1h6m0 1h5m0 1h4m0 1h4m0 1h4m0 1h4m0 1h4m0 1h4m0 1h5m0 1h4m0 1h5m0 1h5m0 1h4m0 1h2M285 746.5h1m0 1h3m0 1h2m0 1h3m0 1h3m0 1h4m0 1h5m0 1h5m0 1h5m0 1h6m0 1h5m0 1h5m0 1h4m0 1h5m0 1h6m0 1h6m0 1h7m0 1h7m0 1h7m0 1h8m0 1h8m0 1h9m0 1h9m0 1h10m0 1h11m0 1h12m0 1h13m0 1h13m0 1h11m0 1h11m0 1h11m0 1h10m0 1h11m0 1h12m0 1h13m0 1h16m0 1h39m0 1h89m0-1h40m0-1h31m0-1h20m0-1h17m0-1h14m0-1h13m0-1h11m0-1h12m0-1h10m0-1h11m0-1h8m0-1h8m0-1h7m0-1h6m0-1h6m0-1h7m0-1h6m0-1h6m0-1h6m0-1h7m0-1h6m0-1h7m0-1h6m0-1h6m0-1h5m0-1h6m0-1h5m0-1h5m0-1h4m0-1h4m0-1h4m0-1h4m0-1h4m0-1h4m0-1h3m0-1h4m0-1h3m0-1h3m0-1h3m0-1h4m0-1h3m0-1h3m0-1h3m0-1h3m0-1h3m0-1h3m0-1h2m0-1h3m0-1h2m0-1h3m0-1h2m0-1h3m0-1h2m0-1h2m0-1h2m0-1h3m0-1h2m0-1h2m0-1h2m0-1h3m0-1h2m0-1h2m0-1h3m0-1h2m0-1h2m0-1h3m0-1h2m0-1h3m0-1h2m0-1h2m0-1h3m0-1h2m0-1h3m0-1h2m0-1h2m0-1h3m0-1h2m0-1h2m0-1h3m0-1h2m0-1h3m0-1h2m0-1h2m0-1h3m0-1h2m0-1h2m0-1h3m0-1h2m0-1h2m0-1h3m0-1h2m0-1h2m0-1h3m0-1h2m0-1h2m0-1h3m0-1h2m0-1h3m0-1h2m0-1h2m0-1h3m0-1h2m0-1h2m0-1h3m0-1h2m0-1h3m0-1h2m0-1h3m0-1h2m0-1h3m0-1h2m0-1h3m0-1h3m0-1h2m0-1h3m0-1h3m0-1h3m0-1h2m0-1h3m0-1h3m0-1h3m0-1h3m0-1h4m0-1h3m0-1h3m0-1h3m0-1h3m0-1h3m0-1h4m0-1h3m0-1h4m0-1h3m0-1h3m0-1h3m0-1h3m0-1h3m0-1h3m0-1h3m0-1h3m0-1h4m0-1h4m0-1h3m0-1h4m0-1h4m0-1h4m0-1h5m0-1h5m0-1h6m0-1h7m0-1h11m0-1h10m0-1h11m0-1h13m0-1h37m0 1h15m0 1h11m0 1h12m0 1h8m0 1h7m0 1h7m0 1h6m0 1h5m0 1h6m0 1h5m0 1h6m0 1h5m0 1h5m0 1h4m0 1h4m0 1h5m0 1h4m0 1h4m0 1h4m0 1h3m0 1h4m0 1h4m0 1h3m0 1h4m0 1h3m0 1h3m0 1h4m0 1h3m0 1h3m0 1h3m0 1h2m0 1h3m0 1h3m0 1h3m0 1h3m0 1h2m0 1h3m0 1h3m0 1h3m0 1h2m0 1h3m0 1h3m0 1h2m0 1h3m0 1h3m0 1h2m0 1h3m0 1h2m0 1h3m0 1h2m0 1h3m0 1h2m0 1h3m0 1h2m0 1h2m0 1h3m0 1h2m0 1h2m0 1h2m0 1h2m0 1h3m0 1h2m0 1h2m0 1h2m0 1h2m0 1h2m0 1h2m0 1h3m0 1h2m0 1h2m0 1h3m0 1h2m0 1h3m0 1h3m0 1h2m0 1h3m0 1h3m0 1h3m0 1h3m0 1h3m0 1h3m0 1h3m0 1h3m0 1h3m0 1h2m0 1h3m0 1h3m0 1h2m0 1h3m0 1h2m0 1h3m0 1h2m0 1h2m0 1h3m0 1h2m0 1h2m0 1h3m0 1h2m0 1h2m0 1h2m0 1h2m0 1h2m0 1h2m0 1h2m0 1h2m0 1h2m0 1h3m0 1h2m0 1h3m0 1h3m0 1h3m0 1h4m0 1h3m0 1h4m0 1h4m0 1h3m0 1h3M285 743.5h1m0 1h2m0 1h3m0 1h2m0 1h2m0 1h2m0 1h3m0 1h4m0 1h4m0 1h4m0 1h4m0 1h4m0 1h4m0 1h4m0 1h4m0 1h4m0 1h4m0 1h5m0 1h5m0 1h6m0 1h6m0 1h7m0 1h7m0 1h7m0 1h8m0 1h8m0 1h8m0 1h8m0 1h8m0 1h9m0 1h9m0 1h9m0 1h9m0 1h10m0 1h9m0 1h9m0 1h9m0 1h9m0 1h9m0 1h9m0 1h10m0 1h12m0 1h14m0 1h35m0 1h95m0-1h39m0-1h34m0-1h27m0-1h22m0-1h19m0-1h16m0-1h15m0-1h12m0-1h9m0-1h8m0-1h8m0-1h7m0-1h6m0-1h7m0-1h7m0-1h7m0-1h8m0-1h7m0-1h7m0-1h6m0-1h7m0-1h6m0-1h6m0-1h5m0-1h6m0-1h5m0-1h5m0-1h5m0-1h5m0-1h4m0-1h5m0-1h4m0-1h4m0-1h4m0-1h3m0-1h4m0-1h3m0-1h3m0-1h3m0-1h3m0-1h2m0-1h2m0-1h3m0-1h2m0-1h2m0-1h2m0-1h2m0-1h2m0-1h3m0-1h2m0-1h2m0-1h2m0-1h2m0-1h2m0-1h2m0-1h3m0-1h2m0-1h2m0-1h3m0-1h2m0-1h2m0-1h3m0-1h2m0-1h3m0-1h2m0-1h2m0-1h3m0-1h2m0-1h2m0-1h3m0-1h2m0-1h2m0-1h2m0-1h2m0-1h3m0-1h2m0-1h2m0-1h2m0-1h2m0-1h2m0-1h2m0-1h2m0-1h2m0-1h2m0-1h2m0-1h2m0-1h1m0-1h2m0-1h2m0-1h2m0-1h2m0-1h2m0-1h2m0-1h2m0-1h2m0-1h2m0-1h2m0-1h2m0-1h2m0-1h2m0-1h2m0-1h2m0-1h2m0-1h2m0-1h2m0-1h2m0-1h2m0-1h2m0-1h2m0-1h2m0-1h3m0-1h2m0-1h2m0-1h2m0-1h2m0-1h2m0-1h2m0-1h2m0-1h2m0-1h3m0-1h2m0-1h2m0-1h2m0-1h2m0-1h2m0-1h3m0-1h2m0-1h3m0-1h2m0-1h3m0-1h3m0-1h3m0-1h3m0-1h4m0-1h3m0-1h3m0-1h2m0-1h3m0-1h3m0-1h3m0-1h3m0-1h2m0-1h3m0-1h3m0-1h3m0-1h2m0-1h3m0-1h2m0-1h3m0-1h2m0-1h3m0-1h2m0-1h3m0-1h3m0-1h3m0-1h3m0-1h3m0-1h5m0-1h6m0-1h8m0-1h6m0-1h6m0-1h5m0-1h6m0-1h6m0-1h6m0-1h9m0-1h45m0 1h28m0 1h11m0 1h9m0 1h8m0 1h7m0 1h7m0 1h6m0 1h5m0 1h4m0 1h4m0 1h4m0 1h4m0 1h3m0 1h4m0 1h3m0 1h3m0 1h3m0 1h4m0 1h3m0 1h3m0 1h3m0 1h3m0 1h3m0 1h3m0 1h3m0 1h2m0 1h3m0 1h3m0 1h2m0 1h3m0 1h2m0 1h3m0 1h2m0 1h3m0 1h2m0 1h3m0 1h2m0 1h2m0 1h3m0 1h2m0 1h2m0 1h3m0 1h2m0 1h2m0 1h2m0 1h2m0 1h2m0 1h3m0 1h2m0 1h2m0 1h2m0 1h2m0 1h2m0 1h3m0 1h2m0 1h2m0 1h3m0 1h2m0 1h3m0 1h2m0 1h3m0 1h3m0 1h2m0 1h3m0 1h3m0 1h2m0 1h3m0 1h2m0 1h3m0 1h2m0 1h3m0 1h2m0 1h2m0 1h3m0 1h2m0 1h2m0 1h2m0 1h3m0 1h2m0 1h2m0 1h2m0 1h2m0 1h3m0 1h2m0 1h2m0 1h2m0 1h3m0 1h2m0 1h2m0 1h3m0 1h2m0 1h2m0 1h3m0 1h2m0 1h2m0 1h3m0 1h2m0 1h2m0 1h2m0 1h3m0 1h2m0 1h2m0 1h2m0 1h2m0 1h2m0 1h3m0 1h2m0 1h2m0 1h2m0 1h2m0 1h2m0 1h2m0 1h3m0 1h2m0 1h2m0 1h2m0 1h3m0 1h2m0 1h2m0 1h3m0 1h2m0 1h2m0 1h2m0 1h2M285 739.5h1m0 1h2m0 1h2m0 1h2m0 1h2m0 1h2m0 1h2m0 1h3m0 1h2m0 1h3m0 1h3m0 1h2m0 1h3m0 1h3m0 1h3m0 1h3m0 1h3m0 1h3m0 1h3m0 1h4m0 1h3m0 1h4m0 1h5m0 1h5m0 1h5m0 1h6m0 1h6m0 1h6m0 1h7m0 1h7m0 1h7m0 1h7m0 1h8m0 1h7m0 1h8m0 1h8m0 1h8m0 1h8m0 1h9m0 1h9m0 1h8m0 1h9m0 1h8m0 1h9m0 1h9m0 1h9m0 1h9m0 1h10m0 1h12m0 1h14m0 1h22m0 1h29m0 1h71m0-1h41m0-1h32m0-1h23m0-1h18m0-1h16m0-1h15m0-1h15m0-1h14m0-1h14m0-1h14m0-1h12m0-1h10m0-1h10m0-1h9m0-1h8m0-1h7m0-1h7m0-1h7m0-1h6m0-1h6m0-1h6m0-1h6m0-1h6m0-1h5m0-1h6m0-1h5m0-1h6m0-1h5m0-1h5m0-1h4m0-1h4m0-1h4m0-1h4m0-1h4m0-1h3m0-1h3m0-1h3m0-1h3m0-1h2m0-1h3m0-1h2m0-1h2m0-1h3m0-1h2m0-1h2m0-1h3m0-1h2m0-1h2m0-1h3m0-1h2m0-1h3m0-1h2m0-1h3m0-1h3m0-1h3m0-1h2m0-1h3m0-1h3m0-1h3m0-1h3m0-1h2m0-1h3m0-1h3m0-1h2m0-1h3m0-1h2m0-1h3m0-1h2m0-1h2m0-1h2m0-1h2m0-1h2m0-1h2m0-1h2m0-1h2m0-1h2m0-1h1m0-1h2m0-1h2m0-1h2m0-1h1m0-1h2m0-1h2m0-1h2m0-1h1m0-1h2m0-1h2m0-1h2m0-1h2m0-1h1m0-1h2m0-1h2m0-1h2m0-1h2m0-1h2m0-1h2m0-1h2m0-1h3m0-1h2m0-1h2m0-1h2m0-1h2m0-1h2m0-1h2m0-1h2m0-1h2m0-1h2m0-1h1m0-1h2m0-1h2m0-1h2m0-1h1m0-1h2m0-1h2m0-1h1m0-1h2m0-1h2m0-1h2m0-1h1m0-1h2m0-1h1m0-1h2m0-1h2m0-1h1m0-1h2m0-1h1m0-1h2m0-1h1m0-1h2m0-1h2m0-1h1m0-1h2m0-1h1m0-1h2m0-1h2m0-1h1m0-1h2m0-1h2m0-1h3m0-1h2m0-1h3m0-1h2m0-1h3m0-1h3m0-1h3m0-1h3m0-1h2m0-1h3m0-1h3m0-1h3m0-1h2m0-1h3m0-1h2m0-1h3m0-1h2m0-1h3m0-1h2m0-1h3m0-1h2m0-1h3m0-1h3m0-1h2m0-1h3m0-1h3m0-1h3m0-1h3m0-1h3m0-1h4m0-1h3m0-1h4m0-1h3m0-1h4m0-1h4m0-1h3m0-1h4m0-1h4m0-1h4m0-1h5m0-1h7m0-1h13m0-1h45m0-1h4m0 1h21m0 1h10m0 1h9m0 1h8m0 1h7m0 1h6m0 1h5m0 1h4m0 1h4m0 1h4m0 1h3m0 1h4m0 1h3m0 1h3m0 1h3m0 1h3m0 1h3m0 1h4m0 1h3m0 1h2m0 1h3m0 1h3m0 1h2m0 1h3m0 1h2m0 1h3m0 1h2m0 1h2m0 1h2m0 1h3m0 1h2m0 1h2m0 1h2m0 1h3m0 1h2m0 1h2m0 1h2m0 1h2m0 1h3m0 1h2m0 1h2m0 1h2m0 1h2m0 1h2m0 1h2m0 1h3m0 1h2m0 1h2m0 1h2m0 1h2m0 1h2m0 1h2m0 1h2m0 1h2m0 1h2m0 1h3m0 1h2m0 1h2m0 1h2m0 1h3m0 1h2m0 1h2m0 1h3m0 1h2m0 1h2m0 1h3m0 1h2m0 1h3m0 1h2m0 1h2m0 1h3m0 1h2m0 1h2m0 1h3m0 1h2m0 1h2m0 1h2m0 1h3m0 1h2m0 1h2m0 1h3m0 1h2m0 1h2m0 1h3m0 1h2m0 1h2m0 1h2m0 1h3m0 1h2m0 1h2m0 1h2m0 1h2m0 1h2m0 1h2m0 1h3m0 1h2m0 1h2m0 1h2m0 1h2m0 1h2m0 1h2m0 1h2m0 1h2m0 1h2m0 1h2m0 1h2m0 1h2m0 1h2m0 1h2m0 1h2m0 1h3m0 1h2m0 1h2m0 1h2m0 1h2m0 1h2m0 1h2m0 1h2m0 1h2m0 1h2m0 1h2m0 1h2m0 1h2m0 1h2m0 1h2m0 1h2m0 1h1m0 1h2m0 1h2m0 1h2M285 738.5h1m0 1h2m0 1h2m0 1h2m0 1h2m0 1h2m0 1h2m0 1h2m0 1h3m0 1h2m0 1h3m0 1h2m0 1h3m0 1h3m0 1h3m0 1h2m0 1h3m0 1h3m0 1h3m0 1h3m0 1h3m0 1h3m0 1h3m0 1h4m0 1h4m0 1h5m0 1h5m0 1h6m0 1h6m0 1h6m0 1h6m0 1h7m0 1h7m0 1h7m0 1h7m0 1h6m0 1h7m0 1h6m0 1h6m0 1h7m0 1h6m0 1h7m0 1h8m0 1h9m0 1h8m0 1h8m0 1h9m0 1h9m0 1h9m0 1h10m0 1h10m0 1h13m0 1h18m0 1h39m0 1h96m0-1h55m0-1h22m0-1h16m0-1h15m0-1h13m0-1h13m0-1h14m0-1h14m0-1h16m0-1h16m0-1h15m0-1h12m0-1h9m0-1h7m0-1h7m0-1h6m0-1h5m0-1h6m0-1h5m0-1h6m0-1h6m0-1h6m0-1h7m0-1h6m0-1h7m0-1h6m0-1h6m0-1h6m0-1h5m0-1h4m0-1h5m0-1h4m0-1h3m0-1h3m0-1h3m0-1h3m0-1h3m0-1h2m0-1h3m0-1h2m0-1h3m0-1h2m0-1h2m0-1h3m0-1h2m0-1h3m0-1h2m0-1h3m0-1h2m0-1h3m0-1h2m0-1h3m0-1h3m0-1h2m0-1h3m0-1h2m0-1h3m0-1h2m0-1h3m0-1h2m0-1h3m0-1h2m0-1h3m0-1h2m0-1h2m0-1h2m0-1h2m0-1h3m0-1h2m0-1h2m0-1h2m0-1h2m0-1h2m0-1h1m0-1h2m0-1h2m0-1h2m0-1h2m0-1h2m0-1h2m0-1h1m0-1h2m0-1h2m0-1h2m0-1h2m0-1h2m0-1h1m0-1h2m0-1h2m0-1h2m0-1h2m0-1h2m0-1h2m0-1h2m0-1h2m0-1h2m0-1h2m0-1h2m0-1h2m0-1h1m0-1h2m0-1h2m0-1h2m0-1h2m0-1h1m0-1h2m0-1h2m0-1h1m0-1h2m0-1h2m0-1h1m0-1h2m0-1h1m0-1h2m0-1h2m0-1h1m0-1h2m0-1h2m0-1h1m0-1h2m0-1h1m0-1h2m0-1h2m0-1h1m0-1h2m0-1h1m0-1h2m0-1h1m0-1h2m0-1h2m0-1h1m0-1h2m0-1h1m0-1h2m0-1h1m0-1h2m0-1h1m0-1h2m0-1h1m0-1h2m0-1h2m0-1h2m0-1h2m0-1h3m0-1h3m0-1h3m0-1h3m0-1h3m0-1h3m0-1h3m0-1h2m0-1h3m0-1h2m0-1h3m0-1h3m0-1h2m0-1h3m0-1h2m0-1h3m0-1h2m0-1h3m0-1h2m0-1h3m0-1h3m0-1h2m0-1h3m0-1h2m0-1h3m0-1h3m0-1h3m0-1h3m0-1h3m0-1h3m0-1h3m0-1h3m0-1h3m0-1h3m0-1h4m0-1h3m0-1h3m0-1h4m0-1h4m0-1h5m0-1h7m0-1h10m0-1h11m0-1h16m0-1h32m0 1h12m0 1h9m0 1h8m0 1h8m0 1h7m0 1h5m0 1h5m0 1h4m0 1h4m0 1h3m0 1h4m0 1h3m0 1h4m0 1h3m0 1h3m0 1h3m0 1h3m0 1h3m0 1h3m0 1h3m0 1h2m0 1h3m0 1h2m0 1h3m0 1h2m0 1h2m0 1h3m0 1h2m0 1h2m0 1h2m0 1h2m0 1h2m0 1h2m0 1h2m0 1h2m0 1h3m0 1h2m0 1h2m0 1h2m0 1h2m0 1h2m0 1h2m0 1h2m0 1h2m0 1h2m0 1h3m0 1h2m0 1h2m0 1h2m0 1h2m0 1h2m0 1h2m0 1h2m0 1h2m0 1h2m0 1h2m0 1h2m0 1h2m0 1h2m0 1h2m0 1h2m0 1h3m0 1h2m0 1h2m0 1h2m0 1h2m0 1h2m0 1h2m0 1h3m0 1h2m0 1h2m0 1h2m0 1h2m0 1h2m0 1h3m0 1h2m0 1h2m0 1h2m0 1h2m0 1h2m0 1h2m0 1h2m0 1h3m0 1h2m0 1h2m0 1h2m0 1h2m0 1h2m0 1h2m0 1h3m0 1h2m0 1h2m0 1h2m0 1h2m0 1h2m0 1h3m0 1h2m0 1h2m0 1h2m0 1h3m0 1h2m0 1h2m0 1h3m0 1h2m0 1h2m0 1h2m0 1h2m0 1h2m0 1h2m0 1h2m0 1h2m0 1h2m0 1h2m0 1h1m0 1h2m0 1h2m0 1h2m0 1h2m0 1h1m0 1h2m0 1h2m0 1h2m0 1h2m0 1h2m0 1h2m0 1h2m0 1h2m0 1h2m0 1h2m0 1h2m0 1h2m0 1h2m0 1h2m0 1h2"/></g><g clip-path="url(#cp)"><path fill="none" stroke="#0080ff" stroke-width="1" shape-rendering="crispEdges" d="M285 924.5h9m0 1h50m0 1h43m0 1h40m0 1h38m0 1h38m0 1h37m0 1h38m0 1h40m0 1h44m0 1h52m0 1h74m0 1h170m0-1h72m0-1h51m0-1h42m0-1h39m0-1h37m0-1h36m0-1h35m0-1h37m0-1h38m0-1h42m0-1h48m0-1h62m0-1h242m0 1h55M285 923.5h18m0 1h40m0 1h35m0 1h32m0 1h31m0 1h31m0 1h29m0 1h30m0 1h30m0 1h31m0 1h33m0 1h35m0 1h39m0 1h49m0 1h79m0 1h95m0-1h78m0-1h47m0-1h38m0-1h34m0-1h31m0-1h29m0-1h29m0-1h28m0-1h28m0-1h29m0-1h29m0-1h31m0-1h34m0-1h37m0-1h45m0-1h65m0-1h165m0 1h66m0 1h29M285 922.5h33m0 1h31m0 1h28m0 1h26m0 1h25m0 1h25m0 1h24m0 1h24m0 1h23m0 1h24m0 1h24m0 1h25m0 1h26m0 1h28m0 1h29m0 1h34m0 1h40m0 1h58m0 1h127m0-1h58m0-1h38m0-1h32m0-1h28m0-1h26m0-1h25m0-1h23m0-1h23m0-1h23m0-1h22m0-1h22m0-1h23m0-1h22m0-1h24m0-1h25m0-1h26m0-1h29m0-1h32m0-1h39m0-1h54m0-1h164m0 1h55m0 1h41m0 1h1M285 920.5h26m0 1h25m0 1h23m0 1h22m0 1h21m0 1h21m0 1h20m0 1h19m0 1h19m0 1h19m0 1h19m0 1h19m0 1h19m0 1h20m0 1h20m0 1h20m0 1h21m0 1h23m0 1h24m0 1h26m0 1h30m0 1h37m0 1h61m0 1h78m0-1h59m0-1h36m0-1h28m0-1h25m0-1h23m0-1h21m0-1h20m0-1h19m0-1h18m0-1h18m0-1h18m0-1h18m0-1h17m0-1h18m0-1h17m0-1h18m0-1h18m0-1h19m0-1h20m0-1h20m0-1h22m0-1h23m0-1h26m0-1h31m0-1h37m0-1h62m0-1h88m0 1h64m0 1h39m0 1h32m0 1h3M285 917.5h8m0 1h21m0 1h21m0 1h19m0 1h18m0 1h17m0 1h17m0 1h17m0 1h16m0 1h16m0 1h15m0 1h15m0 1h16m0 1h15m0 1h15m0 1h15m0 1h16m0 1h15m0 1h16m0 1h16m0 1h16m0 1h17m0 1h18m0 1h19m0 1h20m0 1h21m0 1h24m0 1h29m0 1h37m0 1h139m0-1h36m0-1h28m0-1h22m0-1h20m0-1h19m0-1h17m0-1h17m0-1h16m0-1h15m0-1h14m0-1h15m0-1h14m0-1h14m0-1h14m0-1h13m0-1h14m0-1h14m0-1h14m0-1h14m0-1h14m0-1h14m0-1h15m0-1h15m0-1h16m0-1h16m0-1h18m0-1h18m0-1h20m0-1h22m0-1h26m0-1h30m0-1h45m0-1h123m0 1h46m0 1h33m0 1h27m0 1h17M285 914.5h6m0 1h18m0 1h16m0 1h16m0 1h16m0 1h14m0 1h15m0 1h13m0 1h14m0 1h13m0 1h13m0 1h13m0 1h12m0 1h13m0 1h12m0 1h13m0 1h12m0 1h12m0 1h12m0 1h12m0 1h13m0 1h12m0 1h13m0 1h12m0 1h13m0 1h13m0 1h13m0 1h14m0 1h14m0 1h15m0 1h16m0 1h16m0 1h18m0 1h20m0 1h22m0 1h28m0 1h43m0 1h75m0-1h42m0-1h26m0-1h22m0-1h18m0-1h17m0-1h15m0-1h15m0-1h13m0-1h13m0-1h13m0-1h12m0-1h12m0-1h11m0-1h12m0-1h11m0-1h11m0-1h11m0-1h10m0-1h11m0-1h11m0-1h11m0-1h10m0-1h11m0-1h11m0-1h11m0-1h11m0-1h12m0-1h11m0-1h12m0-1h12m0-1h12m0-1h13m0-1h14m0-1h14m0-1h15m0-1h16m0-1h17m0-1h19m0-1h22m0-1h27m0-1h38m0-1h121m0 1h40m0 1h29m0 1h24m0 1h21m0 1h14M285 911.5h14m0 1h14m0 1h14m0 1h13m0 1h12m0 1h13m0 1h11m0 1h12m0 1h11m0 1h11m0 1h11m0 1h11m0 1h10m0 1h11m0 1h10m0 1h10m0 1h10m0 1h10m0 1h10m0 1h10m0 1h10m0 1h10m0 1h9m0 1h10m0 1h10m0 1h10m0 1h10m0 1h10m0 1h10m0 1h10m0 1h10m0 1h11m0 1h10m0 1h11m0 1h11m0 1h12m0 1h12m0 1h12m0 1h13m0 1h13m0 1h15m0 1h16m0 1h17m0 1h21m0 1h25m0 1h48m0 1h34m0-1h46m0-1h25m0-1h19m0-1h17m0-1h15m0-1h13m0-1h12m0-1h12m0-1h11m0-1h11m0-1h10m0-1h10m0-1h10m0-1h9m0-1h10m0-1h9m0-1h9m0-1h8m0-1h9m0-1h9m0-1h8m0-1h9m0-1h8m0-1h8m0-1h9m0-1h8m0-1h9m0-1h8m0-1h8m0-1h9m0-1h8m0-1h9m0-1h9m0-1h9m0-1h9m0-1h9m0-1h9m0-1h10m0-1h9m0-1h10m0-1h11m0-1h10m0-1h11m0-1h12m0-1h12m0-1h13m0-1h14m0-1h15m0-1h17m0-1h19m0-1h23m0-1h31m0-1h121m0 1h33m0 1h26m0 1h21m0 1h19m0 1h17m0 1h16m0 1h1M285 902.5h10m0 1h10m0 1h10m0 1h9m0 1h9m0 1h9m0 1h9m0 1h8m0 1h9m0 1h9m0 1h8m0 1h8m0 1h9m0 1h8m0 1h8m0 1h8m0 1h8m0 1h8m0 1h7m0 1h8m0 1h8m0 1h7m0 1h8m0 1h8m0 1h7m0 1h8m0 1h7m0 1h8m0 1h8m0 1h7m0 1h8m0 1h8m0 1h8m0 1h7m0 1h8m0 1h8m0 1h8m0 1h8m0 1h8m0 1h8m0 1h8m0 1h8m0 1h8m0 1h9m0 1h8m0 1h8m0 1h9m0 1h9m0 1h9m0 1h9m0 1h9m0 1h10m0 1h10m0 1h10m0 1h11m0 1h11m0 1h12m0 1h12m0 1h14m0 1h16m0 1h19m0 1h24m0 1h117m0-1h25m0-1h17m0-1h14m0-1h12m0-1h11m0-1h11m0-1h11m0-1h11m0-1h10m0-1h10m0-1h10m0-1h9m0-1h9m0-1h8m0-1h8m0-1h8m0-1h8m0-1h7m0-1h7m0-1h7m0-1h7m0-1h7m0-1h6m0-1h7m0-1h6m0-1h7m0-1h6m0-1h6m0-1h7m0-1h6m0-1h6m0-1h7m0-1h6m0-1h6m0-1h7m0-1h6m0-1h7m0-1h6m0-1h7m0-1h7m0-1h7m0-1h6m0-1h7m0-1h7m0-1h7m0-1h8m0-1h7m0-1h7m0-1h8m0-1h8m0-1h8m0-1h8m0-1h8m0-1h9m0-1h9m0-1h9m0-1h10m0-1h9m0-1h11m0-1h11m0-1h11m0-1h12m0-1h13m0-1h14m0-1h16m0-1h19m0-1h22m0-1h30m0-1h83m0 1h26m0 1h17m0 1h15m0 1h13m0 1h12m0 1h11m0 1h1M285 887.5h7m0 1h8m0 1h7m0 1h8m0 1h7m0 1h7m0 1h7m0 1h7m0 1h7m0 1h7m0 1h7m0 1h7m0 1h6m0 1h7m0 1h7m0 1h6m0 1h7m0 1h6m0 1h7m0 1h6m0 1h6m0 1h6m0 1h7m0 1h6m0 1h6m0 1h6m0 1h6m0 1h6m0 1h6m0 1h6m0 1h6m0 1h6m0 1h6m0 1h6m0 1h6m0 1h6m0 1h6m0 1h5m0 1h6m0 1h6m0 1h6m0 1h6m0 1h6m0 1h6m0 1h5m0 1h6m0 1h6m0 1h6m0 1h6m0 1h6m0 1h6m0 1h6m0 1h5m0 1h6m0 1h6m0 1h6m0 1h6m0 1h6m0 1h6m0 1h6m0 1h6m0 1h6m0 1h6m0 1h6m0 1h7m0 1h6m0 1h6m0 1h7m0 1h6m0 1h6m0 1h7m0 1h7m0 1h6m0 1h7m0 1h7m0 1h7m0 1h7m0 1h8m0 1h7m0 1h8m0 1h8m0 1h8m0 1h8m0 1h9m0 1h9m0 1h9m0 1h10m0 1h11m0 1h12m0 1h13m0 1h16m0 1h23m0 1h68m0-1h20m0-1h14m0-1h11m0-1h11m0-1h9m0-1h10m0-1h8m0-1h8m0-1h8m0-1h8m0-1h7m0-1h7m0-1h7m0-1h6m0-1h6m0-1h6m0-1h6m0-1h6m0-1h6m0-1h5m0-1h6m0-1h5m0-1h5m0-1h5m0-1h5m0-1h5m0-1h5m0-1h5m0-1h5m0-1h4m0-1h5m0-1h5m0-1h5m0-1h4m0-1h5m0-1h4m0-1h5m0-1h5m0-1h4m0-1h5m0-1h4m0-1h5m0-1h4m0-1h5m0-1h4m0-1h5m0-1h5m0-1h4m0-1h5m0-1h4m0-1h5m0-1h4m0-1h5m0-1h4m0-1h5m0-1h4m0-1h5m0-1h4m0-1h5m0-1h5m0-1h4m0-1h5m0-1h5m0-1h5m0-1h4m0-1h5m0-1h5m0-1h5m0-1h5m0-1h5m0-1h5m0-1h5m0-1h6m0-1h5m0-1h5m0-1h6m0-1h5m0-1h6m0-1h6m0-1h5m0-1h6m0-1h6m0-1h7m0-1h6m0-1h7m0-1h6m0-1h7m0-1h7m0-1h8m0-1h7m0-1h8m0-1h9m0-1h9m0-1h9m0-1h11m0-1h11m0-1h13m0-1h15m0-1h18m0-1h34m0-1h18m0 1h32m0 1h17m0 1h13m0 1h12m0 1h11m0 1h10m0 1h9m0 1h9m0 1h2M285 870.5h8m0 1h8m0 1h8m0 1h8m0 1h7m0 1h7m0 1h7m0 1h7m0 1h6m0 1h7m0 1h6m0 1h6m0 1h6m0 1h6m0 1h6m0 1h6m0 1h6m0 1h6m0 1h5m0 1h6m0 1h6m0 1h5m0 1h6m0 1h5m0 1h5m0 1h6m0 1h5m0 1h5m0 1h5m0 1h5m0 1h6m0 1h5m0 1h5m0 1h5m0 1h5m0 1h5m0 1h5m0 1h5m0 1h4m0 1h5m0 1h5m0 1h5m0 1h5m0 1h5m0 1h4m0 1h5m0 1h5m0 1h4m0 1h5m0 1h5m0 1h5m0 1h4m0 1h5m0 1h5m0 1h4m0 1h5m0 1h5m0 1h4m0 1h5m0 1h5m0 1h5m0 1h4m0 1h5m0 1h5m0 1h4m0 1h5m0 1h5m0 1h4m0 1h5m0 1h5m0 1h5m0 1h4m0 1h5m0 1h5m0 1h5m0 1h4m0 1h5m0 1h5m0 1h5m0 1h5m0 1h4m0 1h5m0 1h5m0 1h5m0 1h5m0 1h5m0 1h5m0 1h5m0 1h5m0 1h5m0 1h5m0 1h5m0 1h5m0 1h6m0 1h5m0 1h5m0 1h5m0 1h6m0 1h5m0 1h6m0 1h5m0 1h6m0 1h5m0 1h6m0 1h6m0 1h6m0 1h6m0 1h6m0 1h6m0 1h6m0 1h7m0 1h6m0 1h7m0 1h7m0 1h7m0 1h7m0 1h8m0 1h8m0 1h8m0 1h9m0 1h9m0 1h11m0 1h12m0 1h14m0 1h22m0 1h37m0-1h21m0-1h14m0-1h10m0-1h10m0-1h8m0-1h7m0-1h7m0-1h7m0-1h6m0-1h7m0-1h6m0-1h5m0-1h6m0-1h5m0-1h6m0-1h5m0-1h5m0-1h5m0-1h5m0-1h4m0-1h5m0-1h5m0-1h4m0-1h4m0-1h4m0-1h5m0-1h4m0-1h4m0-1h3m0-1h4m0-1h4m0-1h4m0-1h3m0-1h4m0-1h3m0-1h4m0-1h3m0-1h4m0-1h3m0-1h4m0-1h3m0-1h3m0-1h4m0-1h3m0-1h3m0-1h3m0-1h4m0-1h3m0-1h3m0-1h3m0-1h4m0-1h3m0-1h3m0-1h3m0-1h4m0-1h3m0-1h3m0-1h3m0-1h3m0-1h4m0-1h3m0-1h3m0-1h3m0-1h3m0-1h4m0-1h3m0-1h3m0-1h3m0-1h3m0-1h4m0-1h3m0-1h3m0-1h3m0-1h4m0-1h3m0-1h3m0-1h3m0-1h4m0-1h3m0-1h3m0-1h4m0-1h3m0-1h3m0-1h4m0-1h3m0-1h4m0-1h3m0-1h3m0-1h4m0-1h3m0-1h4m0-1h4m0-1h3m0-1h4m0-1h3m0-1h4m0-1h4m0-1h4m0-1h3m0-1h4m0-1h4m0-1h4m0-1h4m0-1h4m0-1h4m0-1h4m0-1h5m0-1h4m0-1h4m0-1h5m0-1h4m0-1h5m0-1h5m0-1h4m0-1h5m0-1h5m0-1h6m0-1h5m0-1h6m0-1h5m0-1h6m0-1h7m0-1h6m0-1h7m0-1h7m0-1h8m0-1h9m0-1h9m0-1h11m0-1h13m0-1h18m0-1h43m0 1h20m0 1h16m0 1h13m0 1h12m0 1h10m0 1h9m0 1h2M285 856.5h3m0 1h9m0 1h9m0 1h8m0 1h7m0 1h8m0 1h7m0 1h6m0 1h7m0 1h6m0 1h6m0 1h6m0 1h6m0 1h6m0 1h6m0 1h5m0 1h6m0 1h5m0 1h6m0 1h5m0 1h5m0 1h6m0 1h5m0 1h5m0 1h5m0 1h5m0 1h5m0 1h5m0 1h5m0 1h5m0 1h4m0 1h5m0 1h5m0 1h5m0 1h4m0 1h5m0 1h5m0 1h4m0 1h5m0 1h4m0 1h5m0 1h4m0 1h5m0 1h4m0 1h4m0 1h5m0 1h4m0 1h4m0 1h4m0 1h5m0 1h4m0 1h4m0 1h4m0 1h4m0 1h5m0 1h4m0 1h4m0 1h4m0 1h4m0 1h4m0 1h4m0 1h5m0 1h4m0 1h4m0 1h4m0 1h4m0 1h4m0 1h4m0 1h4m0 1h4m0 1h4m0 1h4m0 1h4m0 1h5m0 1h4m0 1h4m0 1h4m0 1h4m0 1h4m0 1h4m0 1h4m0 1h4m0 1h4m0 1h5m0 1h4m0 1h4m0 1h4m0 1h4m0 1h4m0 1h4m0 1h4m0 1h5m0 1h4m0 1h4m0 1h4m0 1h4m0 1h5m0 1h4m0 1h4m0 1h4m0 1h5m0 1h4m0 1h4m0 1h4m0 1h5m0 1h4m0 1h4m0 1h5m0 1h4m0 1h5m0 1h4m0 1h5m0 1h4m0 1h5m0 1h4m0 1h5m0 1h4m0 1h5m0 1h5m0 1h4m0 1h5m0 1h5m0 1h5m0 1h5m0 1h5m0 1h5m0 1h5m0 1h5m0 1h5m0 1h5m0 1h6m0 1h5m0 1h6m0 1h6m0 1h6m0 1h6m0 1h6m0 1h6m0 1h7m0 1h6m0 1h7m0 1h7m0 1h8m0 1h7m0 1h9m0 1h9m0 1h10m0 1h11m0 1h14m0 1h21m0 1h33m0-1h21m0-1h13m0-1h11m0-1h9m0-1h8m0-1h7m0-1h6m0-1h7m0-1h5m0-1h6m0-1h5m0-1h5m0-1h5m0-1h5m0-1h4m0-1h5m0-1h4m0-1h4m0-1h4m0-1h4m0-1h4m0-1h4m0-1h4m0-1h3m0-1h4m0-1h4m0-1h3m0-1h4m0-1h3m0-1h4m0-1h3m0-1h3m0-1h3m0-1h4m0-1h3m0-1h3m0-1h3m0-1h3m0-1h3m0-1h3m0-1h3m0-1h3m0-1h3m0-1h3m0-1h3m0-1h2m0-1h3m0-1h3m0-1h3m0-1h3m0-1h3m0-1h2m0-1h3m0-1h3m0-1h3m0-1h2m0-1h3m0-1h3m0-1h3m0-1h2m0-1h3m0-1h3m0-1h2m0-1h3m0-1h3m0-1h3m0-1h2m0-1h3m0-1h3m0-1h2m0-1h3m0-1h3m0-1h2m0-1h3m0-1h3m0-1h2m0-1h3m0-1h3m0-1h2m0-1h3m0-1h3m0-1h2m0-1h3m0-1h3m0-1h2m0-1h3m0-1h3m0-1h3m0-1h2m0-1h3m0-1h3m0-1h2m0-1h3m0-1h3m0-1h3m0-1h3m0-1h2m0-1h3m0-1h3m0-1h3m0-1h3m0-1h3m0-1h2m0-1h3m0-1h3m0-1h3m0-1h3m0-1h3m0-1h3m0-1h3m0-1h3m0-1h3m0-1h3m0-1h3m0-1h3m0-1h4m0-1h3m0-1h3m0-1h3m0-1h3m0-1h4m0-1h3m0-1h3m0-1h4m0-1h3m0-1h4m0-1h3m0-1h4m0-1h4m0-1h3m0-1h4m0-1h4m0-1h4m0-1h4m0-1h4m0-1h4m0-1h5m0-1h4m0-1h5m0-1h5m0-1h5m0-1h5m0-1h5m0-1h6m0-1h6m0-1h6m0-1h7m0-1h8m0-1h9m0-1h10m0-1h12m0-1h18m0-1h59m0 1h15m0 1h12m0 1h8M285 848.5h10m0 1h9m0 1h9m0 1h7m0 1h8m0 1h7m0 1h7m0 1h6m0 1h6m0 1h6m0 1h6m0 1h6m0 1h6m0 1h5m0 1h6m0 1h5m0 1h6m0 1h5m0 1h5m0 1h5m0 1h6m0 1h5m0 1h5m0 1h4m0 1h5m0 1h5m0 1h5m0 1h5m0 1h4m0 1h5m0 1h4m0 1h5m0 1h4m0 1h5m0 1h4m0 1h5m0 1h4m0 1h4m0 1h5m0 1h4m0 1h4m0 1h4m0 1h4m0 1h4m0 1h5m0 1h4m0 1h4m0 1h4m0 1h4m0 1h4m0 1h3m0 1h4m0 1h4m0 1h4m0 1h4m0 1h4m0 1h4m0 1h4m0 1h4m0 1h3m0 1h4m0 1h4m0 1h4m0 1h4m0 1h4m0 1h4m0 1h3m0 1h4m0 1h4m0 1h4m0 1h4m0 1h4m0 1h3m0 1h4m0 1h4m0 1h4m0 1h4m0 1h3m0 1h4m0 1h4m0 1h4m0 1h4m0 1h4m0 1h3m0 1h4m0 1h4m0 1h4m0 1h4m0 1h4m0 1h4m0 1h3m0 1h4m0 1h4m0 1h4m0 1h4m0 1h4m0 1h4m0 1h4m0 1h4m0 1h4m0 1h4m0 1h3m0 1h4m0 1h4m0 1h4m0 1h4m0 1h4m0 1h4m0 1h4m0 1h4m0 1h4m0 1h4m0 1h4m0 1h5m0 1h4m0 1h4m0 1h4m0 1h4m0 1h4m0 1h4m0 1h4m0 1h4m0 1h5m0 1h4m0 1h4m0 1h4m0 1h5m0 1h4m0 1h4m0 1h5m0 1h4m0 1h4m0 1h5m0 1h4m0 1h5m0 1h4m0 1h5m0 1h4m0 1h5m0 1h5m0 1h5m0 1h5m0 1h5m0 1h5m0 1h5m0 1h5m0 1h5m0 1h6m0 1h5m0 1h6m0 1h5m0 1h6m0 1h6m0 1h6m0 1h6m0 1h7m0 1h7m0 1h7m0 1h7m0 1h7m0 1h9m0 1h8m0 1h10m0 1h13m0 1h20m0 1h37m0-1h19m0-1h12m0-1h10m0-1h8m0-1h7m0-1h7m0-1h6m0-1h5m0-1h6m0-1h5m0-1h4m0-1h5m0-1h5m0-1h4m0-1h4m0-1h4m0-1h4m0-1h4m0-1h4m0-1h3m0-1h4m0-1h4m0-1h3m0-1h4m0-1h3m0-1h3m0-1h4m0-1h3m0-1h3m0-1h3m0-1h3m0-1h3m0-1h3m0-1h3m0-1h3m0-1h3m0-1h3m0-1h3m0-1h3m0-1h2m0-1h3m0-1h3m0-1h2m0-1h3m0-1h3m0-1h2m0-1h3m0-1h3m0-1h2m0-1h3m0-1h2m0-1h3m0-1h3m0-1h2m0-1h3m0-1h2m0-1h3m0-1h2m0-1h3m0-1h2m0-1h3m0-1h2m0-1h3m0-1h2m0-1h2m0-1h3m0-1h2m0-1h3m0-1h2m0-1h3m0-1h2m0-1h2m0-1h3m0-1h2m0-1h3m0-1h2m0-1h2m0-1h3m0-1h2m0-1h3m0-1h2m0-1h2m0-1h3m0-1h2m0-1h3m0-1h2m0-1h3m0-1h2m0-1h2m0-1h3m0-1h2m0-1h3m0-1h2m0-1h3m0-1h2m0-1h2m0-1h3m0-1h2m0-1h3m0-1h2m0-1h3m0-1h2m0-1h3m0-1h2m0-1h3m0-1h2m0-1h3m0-1h2m0-1h3m0-1h2m0-1h3m0-1h2m0-1h3m0-1h2m0-1h3m0-1h3m0-1h2m0-1h3m0-1h2m0-1h3m0-1h3m0-1h2m0-1h3m0-1h3m0-1h3m0-1h2m0-1h3m0-1h3m0-1h3m0-1h3m0-1h3m0-1h3m0-1h3m0-1h3m0-1h3m0-1h3m0-1h3m0-1h3m0-1h3m0-1h3m0-1h4m0-1h3m0-1h4m0-1h3m0-1h4m0-1h3m0-1h4m0-1h4m0-1h4m0-1h4m0-1h4m0-1h5m0-1h4m0-1h5m0-1h5m0-1h5m0-1h5m0-1h6m0-1h6m0-1h6m0-1h7m0-1h7m0-1h8m0-1h9m0-1h10m0-1h14m0-1h66m0 1h14m0 1h1M285 842.5h8m0 1h11m0 1h9m0 1h8m0 1h8m0 1h7m0 1h6m0 1h7m0 1h6m0 1h6m0 1h6m0 1h5m0 1h6m0 1h6m0 1h5m0 1h5m0 1h6m0 1h5m0 1h5m0 1h5m0 1h5m0 1h5m0 1h4m0 1h5m0 1h5m0 1h5m0 1h4m0 1h5m0 1h4m0 1h5m0 1h4m0 1h5m0 1h4m0 1h4m0 1h5m0 1h4m0 1h4m0 1h4m0 1h4m0 1h5m0 1h4m0 1h4m0 1h4m0 1h4m0 1h4m0 1h4m0 1h4m0 1h3m0 1h4m0 1h4m0 1h4m0 1h4m0 1h4m0 1h3m0 1h4m0 1h4m0 1h4m0 1h3m0 1h4m0 1h4m0 1h3m0 1h4m0 1h4m0 1h4m0 1h3m0 1h4m0 1h3m0 1h4m0 1h4m0 1h3m0 1h4m0 1h4m0 1h3m0 1h4m0 1h4m0 1h3m0 1h4m0 1h3m0 1h4m0 1h4m0 1h3m0 1h4m0 1h3m0 1h4m0 1h4m0 1h3m0 1h4m0 1h4m0 1h3m0 1h4m0 1h3m0 1h4m0 1h4m0 1h3m0 1h4m0 1h4m0 1h3m0 1h4m0 1h4m0 1h3m0 1h4m0 1h4m0 1h3m0 1h4m0 1h4m0 1h4m0 1h3m0 1h4m0 1h4m0 1h4m0 1h3m0 1h4m0 1h4m0 1h4m0 1h3m0 1h4m0 1h4m0 1h4m0 1h4m0 1h4m0 1h3m0 1h4m0 1h4m0 1h4m0 1h4m0 1h4m0 1h4m0 1h4m0 1h4m0 1h4m0 1h4m0 1h4m0 1h4m0 1h4m0 1h4m0 1h5m0 1h4m0 1h4m0 1h4m0 1h4m0 1h4m0 1h5m0 1h4m0 1h4m0 1h5m0 1h4m0 1h4m0 1h5m0 1h4m0 1h5m0 1h4m0 1h5m0 1h5m0 1h4m0 1h5m0 1h5m0 1h5m0 1h5m0 1h5m0 1h5m0 1h5m0 1h6m0 1h5m0 1h6m0 1h6m0 1h5m0 1h6m0 1h7m0 1h6m0 1h7m0 1h6m0 1h8m0 1h8m0 1h9m0 1h11m0 1h13m0 1h22m0 1h36m0-1h18m0-1h11m0-1h9m0-1h8m0-1h8m0-1h6m0-1h6m0-1h5m0-1h5m0-1h5m0-1h5m0-1h4m0-1h4m0-1h4m0-1h4m0-1h4m0-1h3m0-1h4m0-1h3m0-1h4m0-1h3m0-1h3m0-1h4m0-1h3m0-1h3m0-1h3m0-1h3m0-1h3m0-1h3m0-1h3m0-1h3m0-1h3m0-1h2m0-1h3m0-1h3m0-1h3m0-1h2m0-1h3m0-1h3m0-1h2m0-1h3m0-1h2m0-1h3m0-1h2m0-1h3m0-1h2m0-1h3m0-1h2m0-1h3m0-1h2m0-1h3m0-1h2m0-1h2m0-1h3m0-1h2m0-1h2m0-1h3m0-1h2m0-1h2m0-1h2m0-1h3m0-1h2m0-1h2m0-1h2m0-1h3m0-1h2m0-1h2m0-1h2m0-1h3m0-1h2m0-1h2m0-1h2m0-1h3m0-1h2m0-1h2m0-1h2m0-1h2m0-1h3m0-1h2m0-1h2m0-1h2m0-1h2m0-1h3m0-1h2m0-1h2m0-1h2m0-1h2m0-1h3m0-1h2m0-1h2m0-1h2m0-1h2m0-1h3m0-1h2m0-1h2m0-1h2m0-1h2m0-1h3m0-1h2m0-1h2m0-1h2m0-1h3m0-1h2m0-1h2m0-1h2m0-1h2m0-1h3m0-1h2m0-1h2m0-1h2m0-1h3m0-1h2m0-1h2m0-1h3m0-1h2m0-1h2m0-1h2m0-1h3m0-1h2m0-1h2m0-1h3m0-1h2m0-1h2m0-1h3m0-1h2m0-1h3m0-1h2m0-1h3m0-1h2m0-1h2m0-1h3m0-1h2m0-1h3m0-1h3m0-1h2m0-1h3m0-1h2m0-1h3m0-1h3m0-1h2m0-1h3m0-1h3m0-1h3m0-1h2m0-1h3m0-1h3m0-1h3m0-1h3m0-1h3m0-1h3m0-1h4m0-1h3m0-1h3m0-1h3m0-1h4m0-1h3m0-1h4m0-1h4m0-1h3m0-1h4m0-1h4m0-1h5m0-1h4m0-1h4m0-1h5m0-1h5m0-1h5m0-1h5m0-1h5m0-1h6m0-1h6m0-1h7m0-1h7m0-1h8m0-1h9m0-1h11m0-1h14m0-1h57m0 1h6M285 840.5h13m0 1h10m0 1h9m0 1h8m0 1h7m0 1h7m0 1h6m0 1h7m0 1h6m0 1h5m0 1h6m0 1h6m0 1h5m0 1h6m0 1h5m0 1h5m0 1h5m0 1h5m0 1h5m0 1h5m0 1h5m0 1h5m0 1h5m0 1h4m0 1h5m0 1h4m0 1h5m0 1h4m0 1h4m0 1h5m0 1h4m0 1h4m0 1h4m0 1h5m0 1h4m0 1h4m0 1h4m0 1h4m0 1h4m0 1h4m0 1h4m0 1h4m0 1h4m0 1h4m0 1h3m0 1h4m0 1h4m0 1h4m0 1h4m0 1h3m0 1h4m0 1h4m0 1h3m0 1h4m0 1h4m0 1h3m0 1h4m0 1h4m0 1h3m0 1h4m0 1h4m0 1h3m0 1h4m0 1h3m0 1h4m0 1h4m0 1h3m0 1h4m0 1h3m0 1h4m0 1h3m0 1h4m0 1h4m0 1h3m0 1h4m0 1h3m0 1h4m0 1h3m0 1h4m0 1h4m0 1h3m0 1h4m0 1h3m0 1h4m0 1h3m0 1h4m0 1h4m0 1h3m0 1h4m0 1h3m0 1h4m0 1h3m0 1h4m0 1h4m0 1h3m0 1h4m0 1h3m0 1h4m0 1h4m0 1h3m0 1h4m0 1h3m0 1h4m0 1h4m0 1h3m0 1h4m0 1h3m0 1h4m0 1h4m0 1h3m0 1h4m0 1h4m0 1h3m0 1h4m0 1h4m0 1h3m0 1h4m0 1h4m0 1h3m0 1h4m0 1h4m0 1h4m0 1h3m0 1h4m0 1h4m0 1h4m0 1h4m0 1h4m0 1h3m0 1h4m0 1h4m0 1h4m0 1h4m0 1h4m0 1h4m0 1h4m0 1h4m0 1h4m0 1h4m0 1h4m0 1h4m0 1h5m0 1h4m0 1h4m0 1h4m0 1h4m0 1h4m0 1h5m0 1h4m0 1h4m0 1h4m0 1h5m0 1h4m0 1h5m0 1h4m0 1h4m0 1h5m0 1h5m0 1h4m0 1h5m0 1h5m0 1h5m0 1h5m0 1h5m0 1h5m0 1h5m0 1h5m0 1h6m0 1h5m0 1h6m0 1h6m0 1h6m0 1h6m0 1h6m0 1h6m0 1h7m0 1h7m0 1h8m0 1h9m0 1h10m0 1h13m0 1h19m0 1h42m0-1h16m0-1h11m0-1h9m0-1h8m0-1h7m0-1h6m0-1h6m0-1h5m0-1h5m0-1h5m0-1h4m0-1h4m0-1h4m0-1h4m0-1h4m0-1h4m0-1h3m0-1h3m0-1h4m0-1h3m0-1h3m0-1h4m0-1h3m0-1h3m0-1h3m0-1h3m0-1h3m0-1h3m0-1h3m0-1h3m0-1h2m0-1h3m0-1h3m0-1h3m0-1h2m0-1h3m0-1h3m0-1h2m0-1h3m0-1h2m0-1h3m0-1h2m0-1h3m0-1h2m0-1h3m0-1h2m0-1h3m0-1h2m0-1h2m0-1h3m0-1h2m0-1h2m0-1h3m0-1h2m0-1h2m0-1h3m0-1h2m0-1h2m0-1h2m0-1h3m0-1h2m0-1h2m0-1h2m0-1h2m0-1h2m0-1h3m0-1h2m0-1h2m0-1h2m0-1h2m0-1h2m0-1h2m0-1h3m0-1h2m0-1h2m0-1h2m0-1h2m0-1h2m0-1h2m0-1h3m0-1h2m0-1h2m0-1h2m0-1h2m0-1h2m0-1h2m0-1h2m0-1h2m0-1h2m0-1h3m0-1h2m0-1h2m0-1h2m0-1h2m0-1h2m0-1h2m0-1h2m0-1h2m0-1h2m0-1h3m0-1h2m0-1h2m0-1h2m0-1h2m0-1h2m0-1h2m0-1h2m0-1h3m0-1h2m0-1h2m0-1h2m0-1h2m0-1h2m0-1h3m0-1h2m0-1h2m0-1h2m0-1h2m0-1h2m0-1h3m0-1h2m0-1h2m0-1h2m0-1h3m0-1h2m0-1h2m0-1h2m0-1h3m0-1h2m0-1h2m0-1h3m0-1h2m0-1h2m0-1h3m0-1h2m0-1h2m0-1h3m0-1h2m0-1h3m0-1h2m0-1h3m0-1h2m0-1h3m0-1h3m0-1h2m0-1h3m0-1h2m0-1h3m0-1h3m0-1h3m0-1h3m0-1h2m0-1h3m0-1h3m0-1h3m0-1h3m0-1h4m0-1h3m0-1h3m0-1h3m0-1h4m0-1h3m0-1h4m0-1h4m0-1h3m0-1h4m0-1h4m0-1h4m0-1h5m0-1h4m0-1h5m0-1h5m0-1h5m0-1h5m0-1h5m0-1h6m0-1h7m0-1h7m0-1h8m0-1h8m0-1h11m0-1h13m0-1h26m0-1h10m0 1h26m0 1h1"/></g></svg>
<div class="tl" style="right:1641px;top:107px">12.0m</div>
<div class="tl" style="right:1641px;top:120px">11.0m</div>
<div class="tl" style="right:1641px;top:133px">10.0m</div>
<div class="tl" style="right:1641px;top:146px">9.0m</div>
<div class="tl" style="right:1641px;top:159px">8.0m</div>
<div class="tl" style="right:1641px;top:172px">7.0m</div>
<div class="tl" style="right:1641px;top:185px">6.0m</div>
<div class="tl" style="right:1641px;top:198px">5.0m</div>
<div class="tl" style="right:1641px;top:211px">4.0m</div>
<div class="tl" style="right:1641px;top:225px">3.0m</div>
<div class="tl" style="right:1641px;top:238px">2.0m</div>
<div class="tl" style="right:1641px;top:251px">1.0m</div>
<div class="tl" style="right:1641px;top:264px">0.0m</div>
<div class="tl" style="right:1641px;top:277px">-1.0m</div>
<div class="tl" style="right:1641px;top:290px">-2.0m</div>
<div class="tl" style="right:1641px;top:303px">-3.0m</div>
<div class="tl" style="right:1641px;top:313px">-4.0m</div>
<div class="a" style="left:226px;top:217px;width:0;height:0"><div style="position:absolute;white-space:nowrap;transform:translate(-50%,-50%) rotate(-90deg);color:#e8a060;font-size:13.6px;line-height:16px;letter-spacing:0">Current (A)</div></div>
<div class="tl" style="right:1641px;top:345px">3.6</div>
<div class="tl" style="right:1641px;top:360px">3.4</div>
<div class="tl" style="right:1641px;top:375px">3.2</div>
<div class="tl" style="right:1641px;top:390px">3.0</div>
<div class="tl" style="right:1641px;top:405px">2.8</div>
<div class="tl" style="right:1641px;top:420px">2.6</div>
<div class="tl" style="right:1641px;top:435px">2.4</div>
<div class="tl" style="right:1641px;top:449px">2.2</div>
<div class="tl" style="right:1641px;top:464px">2.0</div>
<div class="tl" style="right:1641px;top:479px">1.8</div>
<div class="tl" style="right:1641px;top:494px">1.6</div>
<div class="tl" style="right:1641px;top:509px">1.4</div>
<div class="tl" style="right:1641px;top:524px">1.2</div>
<div class="tl" style="right:1641px;top:539px">1.0</div>
<div class="tl" style="right:1641px;top:551px">0.8</div>
<div class="a" style="left:242px;top:455px;width:0;height:0"><div style="position:absolute;white-space:nowrap;transform:translate(-50%,-50%) rotate(-90deg);color:#e8a060;font-size:13.6px;line-height:16px;letter-spacing:0">Voltage (V)</div></div>
<div class="tl" style="right:1641px;top:583px">3.6</div>
<div class="tl" style="right:1641px;top:598px">3.4</div>
<div class="tl" style="right:1641px;top:613px">3.2</div>
<div class="tl" style="right:1641px;top:628px">3.0</div>
<div class="tl" style="right:1641px;top:643px">2.8</div>
<div class="tl" style="right:1641px;top:658px">2.6</div>
<div class="tl" style="right:1641px;top:673px">2.4</div>
<div class="tl" style="right:1641px;top:687px">2.2</div>
<div class="tl" style="right:1641px;top:702px">2.0</div>
<div class="tl" style="right:1641px;top:717px">1.8</div>
<div class="tl" style="right:1641px;top:732px">1.6</div>
<div class="tl" style="right:1641px;top:747px">1.4</div>
<div class="tl" style="right:1641px;top:762px">1.2</div>
<div class="tl" style="right:1641px;top:777px">1.0</div>
<div class="tl" style="right:1641px;top:789px">0.8</div>
<div class="a" style="left:242px;top:693px;width:0;height:0"><div style="position:absolute;white-space:nowrap;transform:translate(-50%,-50%) rotate(-90deg);color:#e8a060;font-size:13.6px;line-height:16px;letter-spacing:0">Voltage (V)</div></div>
<div class="tl" style="right:1641px;top:821px">4.0m</div>
<div class="tl" style="right:1641px;top:834px">3.0m</div>
<div class="tl" style="right:1641px;top:847px">2.0m</div>
<div class="tl" style="right:1641px;top:860px">1.0m</div>
<div class="tl" style="right:1641px;top:873px">0.0m</div>
<div class="tl" style="right:1641px;top:886px">-1.0m</div>
<div class="tl" style="right:1641px;top:899px">-2.0m</div>
<div class="tl" style="right:1641px;top:912px">-3.0m</div>
<div class="tl" style="right:1641px;top:925px">-4.0m</div>
<div class="tl" style="right:1641px;top:939px">-5.0m</div>
<div class="tl" style="right:1641px;top:952px">-6.0m</div>
<div class="tl" style="right:1641px;top:965px">-7.0m</div>
<div class="tl" style="right:1641px;top:978px">-8.0m</div>
<div class="tl" style="right:1641px;top:991px">-9.0m</div>
<div class="tl" style="right:1641px;top:1004px">-10.0m</div>
<div class="tl" style="right:1641px;top:1017px">-11.0m</div>
<div class="tl" style="right:1641px;top:1027px">-12.0m</div>
<div class="a" style="left:222px;top:931px;width:0;height:0"><div style="position:absolute;white-space:nowrap;transform:translate(-50%,-50%) rotate(-90deg);color:#e8a060;font-size:13.6px;line-height:16px;letter-spacing:0">Current (A)</div></div>
<div class="tl" style="left:255px;top:1048px;width:60px;text-align:center;letter-spacing:.05px">0.0p</div>
<div class="tl" style="left:435px;top:1048px;width:60px;text-align:center;letter-spacing:.05px">50.0p</div>
<div class="tl" style="left:617px;top:1048px;width:60px;text-align:center;letter-spacing:.05px">100.0p</div>
<div class="tl" style="left:797px;top:1048px;width:60px;text-align:center;letter-spacing:.05px">150.0p</div>
<div class="tl" style="left:979px;top:1048px;width:60px;text-align:center;letter-spacing:.05px">200.0p</div>
<div class="tl" style="left:1159px;top:1048px;width:60px;text-align:center;letter-spacing:.05px">250.0p</div>
<div class="tl" style="left:1341px;top:1048px;width:60px;text-align:center;letter-spacing:.05px">300.0p</div>
<div class="tl" style="left:1521px;top:1048px;width:60px;text-align:center;letter-spacing:.05px">350.0p</div>
<div class="tl" style="left:1703px;top:1048px;width:60px;text-align:center;letter-spacing:.05px">400.0p</div>
<div class="t" style="left:1011px;top:1054px;color:#eaa262;font-size:13.6px;letter-spacing:0">Time (s)</div>
<div class="a" style="left:1798px;top:89px;width:12px;height:238px;background:#dedede"></div><div class="a" style="left:1798px;top:101px;width:12px;height:206px;background:#c0c0c0"></div><div class="a" style="left:1798px;top:327px;width:12px;height:238px;background:#dedede"></div><div class="a" style="left:1798px;top:339px;width:12px;height:206px;background:#c0c0c0"></div><div class="a" style="left:1798px;top:565px;width:12px;height:238px;background:#dedede"></div><div class="a" style="left:1798px;top:577px;width:12px;height:206px;background:#c0c0c0"></div><div class="a" style="left:1798px;top:803px;width:12px;height:233px;background:#dedede"></div><div class="a" style="left:1798px;top:815px;width:12px;height:206px;background:#c0c0c0"></div><div class="a" style="left:1906px;top:89px;width:8px;height:997px;background:#c0c0c0"></div><div class="a" style="left:1906px;top:89px;width:8px;height:12px;background:#dedede"></div><div class="a" style="left:1906px;top:1022px;width:8px;height:76px;background:#dedede"></div><svg class="a" style="left:0;top:0" width="1914" height="1158"><g fill="#808080"><path d="M1804 92 L1808 98 H1800 Z"/><path d="M1804 323 L1808 317 H1800 Z"/><path d="M1804 330 L1808 336 H1800 Z"/><path d="M1804 561 L1808 555 H1800 Z"/><path d="M1804 568 L1808 574 H1800 Z"/><path d="M1804 799 L1808 793 H1800 Z"/><path d="M1804 806 L1808 812 H1800 Z"/><path d="M1804 1036 L1808 1030 H1800 Z"/><path d="M1911 92 L1915 98 H1907 Z"/><path d="M1911 1033 L1915 1027 H1907 Z"/></g></svg><div class="a" style="left:1810px;top:89px;width:96px;height:237px;overflow:hidden;background:#000"><svg class="a" style="left:3px;top:0px" width="100" height="240" shape-rendering="crispEdges"><rect x=".5" y="20.5" width="10" height="10" fill="none" stroke="#00a000"/><path d="M2 25.5 H9" stroke="#00ff00" stroke-width="1"/><rect x="15" y="18" width="7" height="13" fill="#ff8000"/><rect x="2" y="33" width="7" height="13" fill="#ff8000"/><path d="M10 40.5 H21" stroke="#d8d8d8" stroke-dasharray="1 2"/><rect x="2" y="48" width="7" height="13" fill="#ff8000"/><path d="M10 55.5 H21" stroke="#d8d8d8" stroke-dasharray="1 2"/><rect x="2" y="63" width="7" height="13" fill="#ff8000"/><path d="M10 70.5 H21" stroke="#d8d8d8" stroke-dasharray="1 2"/><rect x="2" y="78" width="7" height="13" fill="#ff8000"/><path d="M10 85.5 H21" stroke="#d8d8d8" stroke-dasharray="1 2"/><rect x="2" y="93" width="7" height="13" fill="#ff8000"/><path d="M10 100.5 H21" stroke="#d8d8d8" stroke-dasharray="1 2"/><rect x="2" y="108" width="7" height="13" fill="#ff8000"/><path d="M10 115.5 H21" stroke="#d8d8d8" stroke-dasharray="1 2"/><rect x="2" y="123" width="7" height="13" fill="#ff8000"/><path d="M10 130.5 H21" stroke="#d8d8d8" stroke-dasharray="1 2"/><rect x="2" y="138" width="7" height="13" fill="#ff8000"/><path d="M10 145.5 H21" stroke="#d8d8d8" stroke-dasharray="1 2"/><rect x="2" y="153" width="7" height="13" fill="#ff8000"/><path d="M10 160.5 H21" stroke="#d8d8d8" stroke-dasharray="1 2"/><rect x="2" y="168" width="7" height="13" fill="#ff8000"/><path d="M10 175.5 H21" stroke="#d8d8d8" stroke-dasharray="1 2"/><rect x="2" y="183" width="7" height="13" fill="#ff8000"/><path d="M10 190.5 H21" stroke="#d8d8d8" stroke-dasharray="1 2"/><rect x="2" y="198" width="7" height="13" fill="#ff8000"/><path d="M10 205.5 H21" stroke="#d8d8d8" stroke-dasharray="1 2"/><rect x="2" y="213" width="7" height="13" fill="#ff8000"/><path d="M10 220.5 H21" stroke="#d8d8d8" stroke-dasharray="1 2"/><rect x="2" y="228" width="7" height="13" fill="#ff8000"/><path d="M10 235.5 H21" stroke="#d8d8d8" stroke-dasharray="1 2"/><path d="M5.5 31 V243" stroke="#d0d0d0" stroke-dasharray="1 2"/></svg><div class="lg" style="left:31px;top:18px">i(L3)</div><div class="lg" style="left:26px;top:33px">1</div><div class="lg" style="left:26px;top:48px">2</div><div class="lg" style="left:26px;top:63px">3</div><div class="lg" style="left:26px;top:78px">4</div><div class="lg" style="left:26px;top:93px">5</div><div class="lg" style="left:26px;top:108px">6</div><div class="lg" style="left:26px;top:123px">7</div><div class="lg" style="left:26px;top:138px">8</div><div class="lg" style="left:26px;top:153px">9</div><div class="lg" style="left:26px;top:168px">10</div><div class="lg" style="left:26px;top:183px">11</div><div class="lg" style="left:26px;top:198px">12</div><div class="lg" style="left:26px;top:213px">13</div><div class="lg" style="left:26px;top:228px">14</div></div><div class="a" style="left:1810px;top:327px;width:96px;height:237px;overflow:hidden;background:#000"><svg class="a" style="left:3px;top:0px" width="100" height="240" shape-rendering="crispEdges"><rect x=".5" y="20.5" width="10" height="10" fill="none" stroke="#00a000"/><path d="M2 25.5 H9" stroke="#00ff00" stroke-width="1"/><rect x="15" y="18" width="7" height="13" fill="#ffff00"/><rect x="2" y="33" width="7" height="13" fill="#ffff00"/><path d="M10 40.5 H21" stroke="#d8d8d8" stroke-dasharray="1 2"/><rect x="2" y="48" width="7" height="13" fill="#ffff00"/><path d="M10 55.5 H21" stroke="#d8d8d8" stroke-dasharray="1 2"/><rect x="2" y="63" width="7" height="13" fill="#ffff00"/><path d="M10 70.5 H21" stroke="#d8d8d8" stroke-dasharray="1 2"/><rect x="2" y="78" width="7" height="13" fill="#ffff00"/><path d="M10 85.5 H21" stroke="#d8d8d8" stroke-dasharray="1 2"/><rect x="2" y="93" width="7" height="13" fill="#ffff00"/><path d="M10 100.5 H21" stroke="#d8d8d8" stroke-dasharray="1 2"/><rect x="2" y="108" width="7" height="13" fill="#ffff00"/><path d="M10 115.5 H21" stroke="#d8d8d8" stroke-dasharray="1 2"/><rect x="2" y="123" width="7" height="13" fill="#ffff00"/><path d="M10 130.5 H21" stroke="#d8d8d8" stroke-dasharray="1 2"/><rect x="2" y="138" width="7" height="13" fill="#ffff00"/><path d="M10 145.5 H21" stroke="#d8d8d8" stroke-dasharray="1 2"/><rect x="2" y="153" width="7" height="13" fill="#ffff00"/><path d="M10 160.5 H21" stroke="#d8d8d8" stroke-dasharray="1 2"/><rect x="2" y="168" width="7" height="13" fill="#ffff00"/><path d="M10 175.5 H21" stroke="#d8d8d8" stroke-dasharray="1 2"/><rect x="2" y="183" width="7" height="13" fill="#ffff00"/><path d="M10 190.5 H21" stroke="#d8d8d8" stroke-dasharray="1 2"/><rect x="2" y="198" width="7" height="13" fill="#ffff00"/><path d="M10 205.5 H21" stroke="#d8d8d8" stroke-dasharray="1 2"/><rect x="2" y="213" width="7" height="13" fill="#ffff00"/><path d="M10 220.5 H21" stroke="#d8d8d8" stroke-dasharray="1 2"/><rect x="2" y="228" width="7" height="13" fill="#ffff00"/><path d="M10 235.5 H21" stroke="#d8d8d8" stroke-dasharray="1 2"/><path d="M5.5 31 V243" stroke="#d0d0d0" stroke-dasharray="1 2"/></svg><div class="lg" style="left:31px;top:18px">lna_outP</div><div class="lg" style="left:26px;top:33px">1</div><div class="lg" style="left:26px;top:48px">2</div><div class="lg" style="left:26px;top:63px">3</div><div class="lg" style="left:26px;top:78px">4</div><div class="lg" style="left:26px;top:93px">5</div><div class="lg" style="left:26px;top:108px">6</div><div class="lg" style="left:26px;top:123px">7</div><div class="lg" style="left:26px;top:138px">8</div><div class="lg" style="left:26px;top:153px">9</div><div class="lg" style="left:26px;top:168px">10</div><div class="lg" style="left:26px;top:183px">11</div><div class="lg" style="left:26px;top:198px">12</div><div class="lg" style="left:26px;top:213px">13</div><div class="lg" style="left:26px;top:228px">14</div></div><div class="a" style="left:1810px;top:565px;width:96px;height:237px;overflow:hidden;background:#000"><svg class="a" style="left:3px;top:0px" width="100" height="240" shape-rendering="crispEdges"><rect x=".5" y="20.5" width="10" height="10" fill="none" stroke="#00a000"/><path d="M2 25.5 H9" stroke="#00ff00" stroke-width="1"/><rect x="15" y="18" width="7" height="13" fill="#00ff00"/><rect x="2" y="33" width="7" height="13" fill="#00ff00"/><path d="M10 40.5 H21" stroke="#d8d8d8" stroke-dasharray="1 2"/><rect x="2" y="48" width="7" height="13" fill="#00ff00"/><path d="M10 55.5 H21" stroke="#d8d8d8" stroke-dasharray="1 2"/><rect x="2" y="63" width="7" height="13" fill="#00ff00"/><path d="M10 70.5 H21" stroke="#d8d8d8" stroke-dasharray="1 2"/><rect x="2" y="78" width="7" height="13" fill="#00ff00"/><path d="M10 85.5 H21" stroke="#d8d8d8" stroke-dasharray="1 2"/><rect x="2" y="93" width="7" height="13" fill="#00ff00"/><path d="M10 100.5 H21" stroke="#d8d8d8" stroke-dasharray="1 2"/><rect x="2" y="108" width="7" height="13" fill="#00ff00"/><path d="M10 115.5 H21" stroke="#d8d8d8" stroke-dasharray="1 2"/><rect x="2" y="123" width="7" height="13" fill="#00ff00"/><path d="M10 130.5 H21" stroke="#d8d8d8" stroke-dasharray="1 2"/><rect x="2" y="138" width="7" height="13" fill="#00ff00"/><path d="M10 145.5 H21" stroke="#d8d8d8" stroke-dasharray="1 2"/><rect x="2" y="153" width="7" height="13" fill="#00ff00"/><path d="M10 160.5 H21" stroke="#d8d8d8" stroke-dasharray="1 2"/><rect x="2" y="168" width="7" height="13" fill="#00ff00"/><path d="M10 175.5 H21" stroke="#d8d8d8" stroke-dasharray="1 2"/><rect x="2" y="183" width="7" height="13" fill="#00ff00"/><path d="M10 190.5 H21" stroke="#d8d8d8" stroke-dasharray="1 2"/><rect x="2" y="198" width="7" height="13" fill="#00ff00"/><path d="M10 205.5 H21" stroke="#d8d8d8" stroke-dasharray="1 2"/><rect x="2" y="213" width="7" height="13" fill="#00ff00"/><path d="M10 220.5 H21" stroke="#d8d8d8" stroke-dasharray="1 2"/><rect x="2" y="228" width="7" height="13" fill="#00ff00"/><path d="M10 235.5 H21" stroke="#d8d8d8" stroke-dasharray="1 2"/><path d="M5.5 31 V243" stroke="#d0d0d0" stroke-dasharray="1 2"/></svg><div class="lg" style="left:31px;top:18px">lna_outN</div><div class="lg" style="left:26px;top:33px">1</div><div class="lg" style="left:26px;top:48px">2</div><div class="lg" style="left:26px;top:63px">3</div><div class="lg" style="left:26px;top:78px">4</div><div class="lg" style="left:26px;top:93px">5</div><div class="lg" style="left:26px;top:108px">6</div><div class="lg" style="left:26px;top:123px">7</div><div class="lg" style="left:26px;top:138px">8</div><div class="lg" style="left:26px;top:153px">9</div><div class="lg" style="left:26px;top:168px">10</div><div class="lg" style="left:26px;top:183px">11</div><div class="lg" style="left:26px;top:198px">12</div><div class="lg" style="left:26px;top:213px">13</div><div class="lg" style="left:26px;top:228px">14</div></div><div class="a" style="left:1810px;top:803px;width:96px;height:232px;overflow:hidden;background:#000"><svg class="a" style="left:3px;top:0px" width="100" height="240" shape-rendering="crispEdges"><rect x=".5" y="20.5" width="10" height="10" fill="none" stroke="#00a000"/><path d="M2 25.5 H9" stroke="#00ff00" stroke-width="1"/><rect x="15" y="18" width="7" height="13" fill="#0080ff"/><rect x="2" y="33" width="7" height="13" fill="#0080ff"/><path d="M10 40.5 H21" stroke="#d8d8d8" stroke-dasharray="1 2"/><rect x="2" y="48" width="7" height="13" fill="#0080ff"/><path d="M10 55.5 H21" stroke="#d8d8d8" stroke-dasharray="1 2"/><rect x="2" y="63" width="7" height="13" fill="#0080ff"/><path d="M10 70.5 H21" stroke="#d8d8d8" stroke-dasharray="1 2"/><rect x="2" y="78" width="7" height="13" fill="#0080ff"/><path d="M10 85.5 H21" stroke="#d8d8d8" stroke-dasharray="1 2"/><rect x="2" y="93" width="7" height="13" fill="#0080ff"/><path d="M10 100.5 H21" stroke="#d8d8d8" stroke-dasharray="1 2"/><rect x="2" y="108" width="7" height="13" fill="#0080ff"/><path d="M10 115.5 H21" stroke="#d8d8d8" stroke-dasharray="1 2"/><rect x="2" y="123" width="7" height="13" fill="#0080ff"/><path d="M10 130.5 H21" stroke="#d8d8d8" stroke-dasharray="1 2"/><rect x="2" y="138" width="7" height="13" fill="#0080ff"/><path d="M10 145.5 H21" stroke="#d8d8d8" stroke-dasharray="1 2"/><rect x="2" y="153" width="7" height="13" fill="#0080ff"/><path d="M10 160.5 H21" stroke="#d8d8d8" stroke-dasharray="1 2"/><rect x="2" y="168" width="7" height="13" fill="#0080ff"/><path d="M10 175.5 H21" stroke="#d8d8d8" stroke-dasharray="1 2"/><rect x="2" y="183" width="7" height="13" fill="#0080ff"/><path d="M10 190.5 H21" stroke="#d8d8d8" stroke-dasharray="1 2"/><rect x="2" y="198" width="7" height="13" fill="#0080ff"/><path d="M10 205.5 H21" stroke="#d8d8d8" stroke-dasharray="1 2"/><rect x="2" y="213" width="7" height="13" fill="#0080ff"/><path d="M10 220.5 H21" stroke="#d8d8d8" stroke-dasharray="1 2"/><rect x="2" y="228" width="7" height="13" fill="#0080ff"/><path d="M10 235.5 H21" stroke="#d8d8d8" stroke-dasharray="1 2"/><path d="M5.5 31 V243" stroke="#d0d0d0" stroke-dasharray="1 2"/></svg><div class="lg" style="left:31px;top:18px">i(L1)</div><div class="lg" style="left:26px;top:33px">1</div><div class="lg" style="left:26px;top:48px">2</div><div class="lg" style="left:26px;top:63px">3</div><div class="lg" style="left:26px;top:78px">4</div><div class="lg" style="left:26px;top:93px">5</div><div class="lg" style="left:26px;top:108px">6</div><div class="lg" style="left:26px;top:123px">7</div><div class="lg" style="left:26px;top:138px">8</div><div class="lg" style="left:26px;top:153px">9</div><div class="lg" style="left:26px;top:168px">10</div><div class="lg" style="left:26px;top:183px">11</div><div class="lg" style="left:26px;top:198px">12</div><div class="lg" style="left:26px;top:213px">13</div><div class="lg" style="left:26px;top:228px">14</div></div>
<div class="a" style="left:212px;top:1086px;width:73px;height:13px;background:#e0e0e0"></div><div class="a" style="left:285px;top:1086px;width:1509px;height:13px;background:#e0e0e0"></div><div class="a" style="left:782px;top:1086px;width:999px;height:13px;background:#c0c0c0"></div><svg class="a" style="left:285px;top:1086px" width="1509" height="13"><path d="M4 6.5 L10 2.5 V10.5 Z M1505 6.5 L1499 2.5 V10.5 Z" fill="#808080"/></svg><div class="a" style="left:1798px;top:1086px;width:108px;height:13px;background:#e0e0e0"></div><svg class="a" style="left:1798px;top:1086px" width="108" height="13"><path d="M4 6.5 L10 2.5 V10.5 Z M104 6.5 L98 2.5 V10.5 Z" fill="#808080"/></svg><div class="a" style="left:1906px;top:1086px;width:8px;height:13px;background:#e0e0e0"></div><div class="a" style="left:211px;top:1099px;width:1703px;height:1px;background:#a0a0a0"></div><div class="a" style="left:1067px;top:1099px;width:847px;height:22px;background:#b4b4b4;border-top:1px solid #8c8c8c"></div><div class="a" style="left:1067px;top:1121px;width:847px;height:3px;background:#0f9a9a"></div><div class="t" style="left:615px;top:1104px;letter-spacing:.1px">Wave:1</div><svg class="a" style="left:1456px;top:1103px" width="17" height="17"><rect width="17" height="17" fill="#000"/><path d="M1.5 9 C3.5 1.5 6.5 1.5 8.5 9 S13.5 16 15.5 8" fill="none" stroke="#f0f000" stroke-width="1.2"/></svg><div class="t" style="left:1478px;top:1104px;font-weight:bold;letter-spacing:.2px">Wave:2</div><div class="a" style="left:211px;top:1123px;width:1703px;height:1px;background:#a8a8a8"></div><div class="a" style="left:221px;top:1124px;width:114px;height:24px;border:1px solid #a0a0a0;border-top:none;background:#e8e8e8"></div><div class="a" style="left:224px;top:1145px;width:108px;height:2px;background:#0f9a9a"></div><div class="t" style="left:229px;top:1129px;letter-spacing:.25px">Workspace1</div><svg class="a" style="left:315px;top:1133px" width="9" height="9"><path d="M1.5 1.5 L7.5 7.5 M7.5 1.5 L1.5 7.5" stroke="#111" stroke-width="1.6"/></svg><div class="t" style="left:1864px;top:1150px;font-size:12px;letter-spacing:0">9:23 AM</div>
</div></body></html>
